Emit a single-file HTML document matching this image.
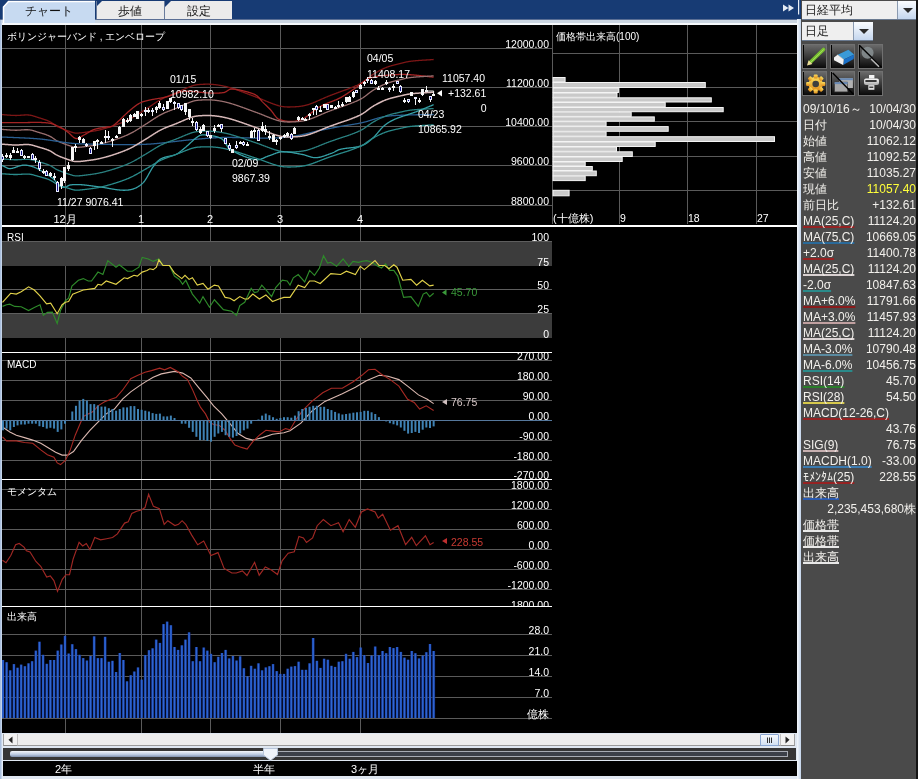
<!DOCTYPE html>
<html><head><meta charset="utf-8">
<style>
*{margin:0;padding:0;box-sizing:border-box}
html,body{width:918px;height:779px;overflow:hidden;background:#dfe7f1;font-family:"Liberation Sans",sans-serif}
.a{position:absolute;will-change:transform}
.row{position:absolute;will-change:transform;left:803px;width:113px;height:16px;font-size:12px;color:#f2f0ec;line-height:16px;white-space:nowrap}
.row .v{position:absolute;right:0;top:0}
.u{text-decoration:underline;text-decoration-skip-ink:none;text-decoration-thickness:2px;text-underline-offset:1px}
.tab{position:absolute;top:1px;height:18px;background:#ebebeb;color:#222;font-size:13px;text-align:center;line-height:19px;border-left:1px solid #7a8aa8}
.ddt{position:absolute;will-change:transform;background:#efefef;font-size:12px;color:#222;line-height:19px;padding-left:3px}
.ddb{position:absolute;background:linear-gradient(#fbfdff,#c4d6ee);border-left:1px solid #8a9ab0}
.ddb:after{content:"";position:absolute;left:5px;top:7px;border-left:5px solid transparent;border-right:5px solid transparent;border-top:5px solid #2a2a2a}
.ib{position:absolute;width:25px;height:25px;border:1px solid #707070;background:linear-gradient(#6a6a6a,#0a0a0a);box-shadow:inset 1px 0 0 #000}
</style></head><body>
<div class="a" style="left:0;top:0;width:3px;height:779px;background:linear-gradient(90deg,#9fb6d8,#c4d4ea,#f2f6fb)"></div>
<div class="a" style="left:0;top:0;width:801px;height:19px;background:#173b74"></div>
<div class="a" style="left:0;top:19px;width:801px;height:1px;background:#5a6e94"></div>
<div class="a" style="left:2px;top:20px;width:799px;height:3px;background:#cbd6e2"></div>
<div class="a" style="left:2px;top:23px;width:799px;height:2px;background:#f6f9fc"></div>
<svg class="a" style="left:0;top:0" width="240" height="25">
<path d="M3 7 L8.5 1 H95 V23 H3 Z" fill="#c7daf1"/>
<path d="M3.5 23 V7 L8.5 1.5 H95" stroke="#ffffff" stroke-width="1.5" fill="none"/>
<path d="M96 1 H164 V19 H96 Z" fill="#ebebeb"/>
<path d="M96 1 H102 L96 7 Z" fill="#173b74"/>
<rect x="96" y="1" width="1" height="18" fill="#6a7c9c"/>
<path d="M165 1 H232 V19 H165 Z" fill="#ebebeb"/>
<path d="M165 1 H171 L165 7 Z" fill="#173b74"/>
<rect x="164" y="1" width="1" height="18" fill="#6a7c9c"/>
<text x="49" y="15" font-size="12" fill="#111" text-anchor="middle">チャート</text>
<text x="130" y="15" font-size="12" fill="#111" text-anchor="middle">歩値</text>
<text x="198.5" y="15" font-size="12" fill="#111" text-anchor="middle">設定</text>
</svg>
<svg class="a" style="left:775px;top:0" width="26" height="19">
<path d="M8 4.5 L13.5 8 L8 11.5 Z M13.5 4.5 L19 8 L13.5 11.5 Z" fill="#e4ebf4"/>
<rect x="23" y="0" width="1.2" height="14.5" fill="#e8eef6"/>
</svg>
<div class="a" style="left:2px;top:25px;width:795px;height:708px;background:#000"></div>
<div class="a" style="left:797px;top:19px;width:4px;height:760px;background:linear-gradient(90deg,#f4f8fc,#c4d4ea)"></div>
<svg class="a" style="left:0;top:0" width="800" height="779" font-family="Liberation Sans, sans-serif">
<clipPath id="c1"><rect x="2" y="25" width="550" height="199"/></clipPath>
<clipPath id="c2"><rect x="2" y="227" width="550" height="125"/></clipPath>
<clipPath id="c3"><rect x="2" y="353" width="550" height="126"/></clipPath>
<clipPath id="c4"><rect x="2" y="480" width="550" height="126"/></clipPath>
<clipPath id="c5"><rect x="2" y="607" width="550" height="126"/></clipPath>
<rect x="2" y="48" width="550" height="1" fill="#5a5a5a"/>
<rect x="2" y="87" width="550" height="1" fill="#5a5a5a"/>
<rect x="2" y="126" width="550" height="1" fill="#5a5a5a"/>
<rect x="2" y="165" width="550" height="1" fill="#5a5a5a"/>
<rect x="2" y="205" width="550" height="1" fill="#5a5a5a"/>
<rect x="65" y="25" width="1" height="708" fill="#5a5a5a"/>
<rect x="141" y="25" width="1" height="708" fill="#5a5a5a"/>
<rect x="210" y="25" width="1" height="708" fill="#5a5a5a"/>
<rect x="280" y="25" width="1" height="708" fill="#5a5a5a"/>
<rect x="360" y="25" width="1" height="708" fill="#5a5a5a"/>
<rect x="552" y="25" width="1" height="199" fill="#5a5a5a"/>
<rect x="553" y="53" width="244" height="1" fill="#5a5a5a"/>
<rect x="553" y="87" width="244" height="1" fill="#5a5a5a"/>
<rect x="553" y="121" width="244" height="1" fill="#5a5a5a"/>
<rect x="553" y="156" width="244" height="1" fill="#5a5a5a"/>
<rect x="553" y="190" width="244" height="1" fill="#5a5a5a"/>
<rect x="619" y="25" width="1" height="199" fill="#5a5a5a"/>
<rect x="687" y="25" width="1" height="199" fill="#5a5a5a"/>
<rect x="756" y="25" width="1" height="199" fill="#5a5a5a"/>
<rect x="553" y="77.5" width="12.1" height="4.5" fill="#c9c9c9" stroke="#f4f4f4" stroke-width="1"/>
<rect x="553" y="82.5" width="152.3" height="5.0" fill="#c9c9c9" stroke="#f4f4f4" stroke-width="1"/>
<rect x="553" y="88.0" width="65.4" height="4.5" fill="#c9c9c9" stroke="#f4f4f4" stroke-width="1"/>
<rect x="553" y="93.0" width="64.0" height="4.3" fill="#c9c9c9" stroke="#f4f4f4" stroke-width="1"/>
<rect x="553" y="97.8" width="158.3" height="4.2" fill="#c9c9c9" stroke="#f4f4f4" stroke-width="1"/>
<rect x="553" y="102.5" width="112.2" height="4.5" fill="#c9c9c9" stroke="#f4f4f4" stroke-width="1"/>
<rect x="553" y="107.5" width="170.2" height="4.2" fill="#c9c9c9" stroke="#f4f4f4" stroke-width="1"/>
<rect x="553" y="112.2" width="78.2" height="4.2" fill="#c9c9c9" stroke="#f4f4f4" stroke-width="1"/>
<rect x="553" y="116.9" width="101.3" height="4.3" fill="#c9c9c9" stroke="#f4f4f4" stroke-width="1"/>
<rect x="553" y="121.7" width="53.1" height="4.4" fill="#c9c9c9" stroke="#f4f4f4" stroke-width="1"/>
<rect x="553" y="126.6" width="115.2" height="4.7" fill="#c9c9c9" stroke="#f4f4f4" stroke-width="1"/>
<rect x="553" y="131.8" width="53.1" height="4.4" fill="#c9c9c9" stroke="#f4f4f4" stroke-width="1"/>
<rect x="553" y="136.7" width="221.5" height="4.8" fill="#c9c9c9" stroke="#f4f4f4" stroke-width="1"/>
<rect x="553" y="142.0" width="102.2" height="4.5" fill="#c9c9c9" stroke="#f4f4f4" stroke-width="1"/>
<rect x="553" y="147.0" width="63.5" height="4.3" fill="#c9c9c9" stroke="#f4f4f4" stroke-width="1"/>
<rect x="553" y="151.8" width="79.3" height="4.7" fill="#c9c9c9" stroke="#f4f4f4" stroke-width="1"/>
<rect x="553" y="157.0" width="69.2" height="4.5" fill="#c9c9c9" stroke="#f4f4f4" stroke-width="1"/>
<rect x="553" y="162.0" width="32.2" height="4.0" fill="#c9c9c9" stroke="#f4f4f4" stroke-width="1"/>
<rect x="553" y="166.5" width="39.3" height="4.0" fill="#c9c9c9" stroke="#f4f4f4" stroke-width="1"/>
<rect x="553" y="171.0" width="43.3" height="4.7" fill="#c9c9c9" stroke="#f4f4f4" stroke-width="1"/>
<rect x="553" y="176.2" width="32.2" height="4.4" fill="#c9c9c9" stroke="#f4f4f4" stroke-width="1"/>
<rect x="553" y="190.3" width="16.1" height="5.5" fill="#c9c9c9" stroke="#f4f4f4" stroke-width="1"/>
<g clip-path="url(#c1)" fill="none" stroke-width="1.3">
<path d="M2.00 114.63 L2.50 114.64 L3.00 114.68 L3.50 114.71 L4.00 114.75 L4.50 114.79 L5.00 114.83 L5.50 114.87 L6.00 114.91 L6.50 114.95 L7.00 114.99 L7.50 115.03 L8.00 115.07 L8.50 115.11 L9.00 115.15 L9.50 115.19 L10.00 115.22 L10.50 115.26 L11.00 115.29 L11.50 115.32 L12.00 115.35 L12.50 115.38 L13.00 115.41 L13.50 115.43 L14.00 115.45 L14.50 115.46 L15.00 115.47 L15.50 115.48 L16.00 115.48 L16.50 115.48 L17.00 115.47 L17.50 115.45 L18.00 115.43 L18.50 115.40 L19.00 115.37 L19.50 115.34 L20.00 115.30 L20.50 115.27 L21.00 115.23 L21.50 115.19 L22.00 115.15 L22.50 115.12 L23.00 115.08 L23.50 115.05 L24.00 115.02 L24.50 115.00 L25.00 114.98 L25.50 114.96 L26.00 114.95 L26.50 114.95 L27.00 114.95 L27.50 114.97 L28.00 114.99 L28.50 115.02 L29.00 115.05 L29.50 115.11 L30.00 115.18 L30.50 115.26 L31.00 115.36 L31.50 115.47 L32.00 115.59 L32.50 115.72 L33.00 115.86 L33.50 116.00 L34.00 116.16 L34.50 116.31 L35.00 116.48 L35.50 116.64 L36.00 116.81 L36.50 116.97 L37.00 117.14 L37.50 117.30 L38.00 117.46 L38.50 117.62 L39.00 117.77 L39.50 117.93 L40.00 118.08 L40.50 118.23 L41.00 118.39 L41.50 118.54 L42.00 118.70 L42.50 118.85 L43.00 119.01 L43.50 119.17 L44.00 119.34 L44.50 119.51 L45.00 119.68 L45.50 119.85 L46.00 120.03 L46.50 120.22 L47.00 120.41 L47.50 120.61 L48.00 120.82 L48.50 121.03 L49.00 121.25 L49.50 121.47 L50.00 121.72 L50.50 121.99 L51.00 122.29 L51.50 122.61 L52.00 122.94 L52.50 123.29 L53.00 123.64 L53.50 124.00 L54.00 124.37 L54.50 124.72 L55.00 125.07 L55.50 125.41 L56.00 125.72 L56.50 126.02 L57.00 126.30 L57.50 126.54 L58.00 126.79 L58.50 127.02 L59.00 127.25 L59.50 127.48 L60.00 127.71 L60.50 127.93 L61.00 128.14 L61.50 128.36 L62.00 128.57 L62.50 128.77 L63.00 128.98 L63.50 129.18 L64.00 129.37 L64.50 129.57 L65.00 129.76 L65.50 129.95 L66.00 130.14 L66.50 130.33 L67.00 130.51 L67.50 130.69 L68.00 130.87 L68.50 131.05 L69.00 131.23 L69.50 131.41 L70.00 131.59 L70.50 131.77 L71.00 131.94 L71.50 132.12 L72.00 132.28 L72.50 132.44 L73.00 132.59 L73.50 132.72 L74.00 132.83 L74.50 132.93 L75.00 133.00 L75.50 133.05 L76.00 133.07 L76.50 133.08 L77.00 133.08 L77.50 133.07 L78.00 133.05 L78.50 133.03 L79.00 133.00 L79.50 132.97 L80.00 132.93 L80.50 132.88 L81.00 132.83 L81.50 132.78 L82.00 132.72 L82.50 132.66 L83.00 132.60 L83.50 132.54 L84.00 132.47 L84.50 132.40 L85.00 132.33 L85.50 132.26 L86.00 132.19 L86.50 132.12 L87.00 132.05 L87.50 131.98 L88.00 131.91 L88.50 131.84 L89.00 131.77 L89.50 131.70 L90.00 131.63 L90.50 131.56 L91.00 131.49 L91.50 131.41 L92.00 131.34 L92.50 131.26 L93.00 131.18 L93.50 131.10 L94.00 131.01 L94.50 130.93 L95.00 130.84 L95.50 130.75 L96.00 130.66 L96.50 130.56 L97.00 130.46 L97.50 130.36 L98.00 130.25 L98.50 130.14 L99.00 130.03 L99.50 129.91 L100.00 129.79 L100.50 129.66 L101.00 129.54 L101.50 129.41 L102.00 129.28 L102.50 129.15 L103.00 129.01 L103.50 128.88 L104.00 128.74 L104.50 128.60 L105.00 128.46 L105.50 128.32 L106.00 128.17 L106.50 128.02 L107.00 127.87 L107.50 127.72 L108.00 127.57 L108.50 127.42 L109.00 127.26 L109.50 127.10 L110.00 126.94 L110.50 126.78 L111.00 126.61 L111.50 126.45 L112.00 126.28 L112.50 126.11 L113.00 125.94 L113.50 125.76 L114.00 125.59 L114.50 125.41 L115.00 125.23 L115.50 125.05 L116.00 124.87 L116.50 124.69 L117.00 124.50 L117.50 124.32 L118.00 124.14 L118.50 123.95 L119.00 123.76 L119.50 123.57 L120.00 123.38 L120.50 123.19 L121.00 123.00 L121.50 122.80 L122.00 122.61 L122.50 122.41 L123.00 122.20 L123.50 122.00 L124.00 121.79 L124.50 121.58 L125.00 121.36 L125.50 121.15 L126.00 120.93 L126.50 120.70 L127.00 120.47 L127.50 120.24 L128.00 120.01 L128.50 119.77 L129.00 119.52 L129.50 119.28 L130.00 119.02 L130.50 118.76 L131.00 118.50 L131.50 118.23 L132.00 117.96 L132.50 117.68 L133.00 117.39 L133.50 117.10 L134.00 116.81 L134.50 116.51 L135.00 116.21 L135.50 115.90 L136.00 115.59 L136.50 115.28 L137.00 114.97 L137.50 114.65 L138.00 114.33 L138.50 114.01 L139.00 113.68 L139.50 113.36 L140.00 113.03 L140.50 112.70 L141.00 112.37 L141.50 112.05 L142.00 111.72 L142.50 111.39 L143.00 111.06 L143.50 110.73 L144.00 110.41 L144.50 110.08 L145.00 109.76 L145.50 109.44 L146.00 109.12 L146.50 108.80 L147.00 108.47 L147.50 108.15 L148.00 107.81 L148.50 107.48 L149.00 107.14 L149.50 106.80 L150.00 106.46 L150.50 106.12 L151.00 105.78 L151.50 105.43 L152.00 105.09 L152.50 104.75 L153.00 104.41 L153.50 104.06 L154.00 103.72 L154.50 103.39 L155.00 103.05 L155.50 102.72 L156.00 102.39 L156.50 102.06 L157.00 101.74 L157.50 101.43 L158.00 101.11 L158.50 100.81 L159.00 100.51 L159.50 100.21 L160.00 99.92 L160.50 99.64 L161.00 99.37 L161.50 99.10 L162.00 98.84 L162.50 98.59 L163.00 98.34 L163.50 98.10 L164.00 97.86 L164.50 97.63 L165.00 97.41 L165.50 97.19 L166.00 96.97 L166.50 96.76 L167.00 96.55 L167.50 96.34 L168.00 96.14 L168.50 95.93 L169.00 95.73 L169.50 95.53 L170.00 95.34 L170.50 95.14 L171.00 94.94 L171.50 94.74 L172.00 94.55 L172.50 94.35 L173.00 94.15 L173.50 93.95 L174.00 93.74 L174.50 93.54 L175.00 93.33 L175.50 93.12 L176.00 92.90 L176.50 92.68 L177.00 92.46 L177.50 92.24 L178.00 92.01 L178.50 91.79 L179.00 91.56 L179.50 91.33 L180.00 91.10 L180.50 90.87 L181.00 90.64 L181.50 90.41 L182.00 90.18 L182.50 89.95 L183.00 89.72 L183.50 89.49 L184.00 89.26 L184.50 89.03 L185.00 88.81 L185.50 88.58 L186.00 88.36 L186.50 88.14 L187.00 87.92 L187.50 87.71 L188.00 87.50 L188.50 87.29 L189.00 87.08 L189.50 86.88 L190.00 86.68 L190.50 86.49 L191.00 86.30 L191.50 86.12 L192.00 85.94 L192.50 85.77 L193.00 85.62 L193.50 85.47 L194.00 85.34 L194.50 85.21 L195.00 85.10 L195.50 85.00 L196.00 84.90 L196.50 84.82 L197.00 84.74 L197.50 84.67 L198.00 84.62 L198.50 84.57 L199.00 84.53 L199.50 84.49 L200.00 84.46 L200.50 84.43 L201.00 84.40 L201.50 84.37 L202.00 84.34 L202.50 84.32 L203.00 84.29 L203.50 84.27 L204.00 84.26 L204.50 84.24 L205.00 84.23 L205.50 84.22 L206.00 84.21 L206.50 84.20 L207.00 84.20 L207.50 84.20 L208.00 84.20 L208.50 84.21 L209.00 84.22 L209.50 84.23 L210.00 84.25 L210.50 84.27 L211.00 84.30 L211.50 84.32 L212.00 84.36 L212.50 84.39 L213.00 84.43 L213.50 84.48 L214.00 84.53 L214.50 84.58 L215.00 84.64 L215.50 84.69 L216.00 84.76 L216.50 84.82 L217.00 84.89 L217.50 84.96 L218.00 85.03 L218.50 85.11 L219.00 85.19 L219.50 85.27 L220.00 85.35 L220.50 85.44 L221.00 85.53 L221.50 85.63 L222.00 85.73 L222.50 85.83 L223.00 85.93 L223.50 86.04 L224.00 86.15 L224.50 86.26 L225.00 86.38 L225.50 86.49 L226.00 86.62 L226.50 86.74 L227.00 86.87 L227.50 87.00 L228.00 87.14 L228.50 87.27 L229.00 87.42 L229.50 87.56 L230.00 87.71 L230.50 87.86 L231.00 88.01 L231.50 88.16 L232.00 88.32 L232.50 88.48 L233.00 88.64 L233.50 88.80 L234.00 88.96 L234.50 89.13 L235.00 89.30 L235.50 89.46 L236.00 89.63 L236.50 89.81 L237.00 89.98 L237.50 90.15 L238.00 90.33 L238.50 90.51 L239.00 90.68 L239.50 90.86 L240.00 91.04 L240.50 91.23 L241.00 91.41 L241.50 91.59 L242.00 91.78 L242.50 91.96 L243.00 92.15 L243.50 92.33 L244.00 92.52 L244.50 92.71 L245.00 92.90 L245.50 93.08 L246.00 93.27 L246.50 93.46 L247.00 93.65 L247.50 93.84 L248.00 94.03 L248.50 94.22 L249.00 94.41 L249.50 94.60 L250.00 94.79 L250.50 94.98 L251.00 95.17 L251.50 95.36 L252.00 95.55 L252.50 95.73 L253.00 95.92 L253.50 96.11 L254.00 96.29 L254.50 96.48 L255.00 96.67 L255.50 96.85 L256.00 97.03 L256.50 97.22 L257.00 97.41 L257.50 97.60 L258.00 97.79 L258.50 97.99 L259.00 98.18 L259.50 98.38 L260.00 98.58 L260.50 98.78 L261.00 98.99 L261.50 99.19 L262.00 99.40 L262.50 99.61 L263.00 99.81 L263.50 100.02 L264.00 100.23 L264.50 100.44 L265.00 100.65 L265.50 100.86 L266.00 101.06 L266.50 101.27 L267.00 101.48 L267.50 101.68 L268.00 101.89 L268.50 102.09 L269.00 102.30 L269.50 102.50 L270.00 102.70 L270.50 102.89 L271.00 103.09 L271.50 103.28 L272.00 103.47 L272.50 103.66 L273.00 103.84 L273.50 104.03 L274.00 104.21 L274.50 104.38 L275.00 104.55 L275.50 104.72 L276.00 104.89 L276.50 105.05 L277.00 105.20 L277.50 105.36 L278.00 105.50 L278.50 105.65 L279.00 105.78 L279.50 105.92 L280.00 106.04 L280.50 106.16 L281.00 106.28 L281.50 106.38 L282.00 106.47 L282.50 106.55 L283.00 106.63 L283.50 106.69 L284.00 106.75 L284.50 106.80 L285.00 106.85 L285.50 106.89 L286.00 106.92 L286.50 106.94 L287.00 106.96 L287.50 106.98 L288.00 106.99 L288.50 106.99 L289.00 106.99 L289.50 106.99 L290.00 106.98 L290.50 106.97 L291.00 106.96 L291.50 106.94 L292.00 106.92 L292.50 106.90 L293.00 106.88 L293.50 106.86 L294.00 106.84 L294.50 106.81 L295.00 106.79 L295.50 106.76 L296.00 106.73 L296.50 106.70 L297.00 106.66 L297.50 106.62 L298.00 106.58 L298.50 106.53 L299.00 106.48 L299.50 106.43 L300.00 106.37 L300.50 106.30 L301.00 106.23 L301.50 106.16 L302.00 106.08 L302.50 105.99 L303.00 105.90 L303.50 105.81 L304.00 105.71 L304.50 105.60 L305.00 105.49 L305.50 105.37 L306.00 105.24 L306.50 105.11 L307.00 104.97 L307.50 104.82 L308.00 104.67 L308.50 104.51 L309.00 104.34 L309.50 104.17 L310.00 104.00 L310.50 103.82 L311.00 103.64 L311.50 103.45 L312.00 103.26 L312.50 103.06 L313.00 102.87 L313.50 102.66 L314.00 102.46 L314.50 102.25 L315.00 102.04 L315.50 101.83 L316.00 101.62 L316.50 101.40 L317.00 101.19 L317.50 100.97 L318.00 100.75 L318.50 100.53 L319.00 100.30 L319.50 100.08 L320.00 99.86 L320.50 99.64 L321.00 99.41 L321.50 99.19 L322.00 98.97 L322.50 98.74 L323.00 98.52 L323.50 98.30 L324.00 98.08 L324.50 97.87 L325.00 97.65 L325.50 97.44 L326.00 97.22 L326.50 97.01 L327.00 96.81 L327.50 96.60 L328.00 96.40 L328.50 96.20 L329.00 96.00 L329.50 95.80 L330.00 95.61 L330.50 95.41 L331.00 95.22 L331.50 95.03 L332.00 94.84 L332.50 94.65 L333.00 94.46 L333.50 94.27 L334.00 94.08 L334.50 93.89 L335.00 93.70 L335.50 93.52 L336.00 93.33 L336.50 93.14 L337.00 92.96 L337.50 92.77 L338.00 92.59 L338.50 92.40 L339.00 92.21 L339.50 92.03 L340.00 91.84 L340.50 91.66 L341.00 91.47 L341.50 91.29 L342.00 91.11 L342.50 90.94 L343.00 90.76 L343.50 90.59 L344.00 90.41 L344.50 90.24 L345.00 90.06 L345.50 89.89 L346.00 89.71 L346.50 89.54 L347.00 89.36 L347.50 89.18 L348.00 88.99 L348.50 88.80 L349.00 88.61 L349.50 88.42 L350.00 88.22 L350.50 88.02 L351.00 87.81 L351.50 87.60 L352.00 87.40 L352.50 87.19 L353.00 86.98 L353.50 86.77 L354.00 86.56 L354.50 86.35 L355.00 86.13 L355.50 85.92 L356.00 85.70 L356.50 85.47 L357.00 85.25 L357.50 85.01 L358.00 84.78 L358.50 84.53 L359.00 84.28 L359.50 84.02 L360.00 83.76 L360.50 83.49 L361.00 83.21 L361.50 82.92 L362.00 82.62 L362.50 82.31 L363.00 81.98 L363.50 81.64 L364.00 81.28 L364.50 80.91 L365.00 80.54 L365.50 80.15 L366.00 79.76 L366.50 79.37 L367.00 78.97 L367.50 78.57 L368.00 78.16 L368.50 77.76 L369.00 77.36 L369.50 76.97 L370.00 76.58 L370.50 76.20 L371.00 75.83 L371.50 75.47 L372.00 75.12 L372.50 74.78 L373.00 74.46 L373.50 74.14 L374.00 73.84 L374.50 73.53 L375.00 73.22 L375.50 72.92 L376.00 72.63 L376.50 72.33 L377.00 72.04 L377.50 71.76 L378.00 71.47 L378.50 71.20 L379.00 70.92 L379.50 70.65 L380.00 70.38 L380.50 70.12 L381.00 69.86 L381.50 69.61 L382.00 69.36 L382.50 69.12 L383.00 68.88 L383.50 68.65 L384.00 68.42 L384.50 68.20 L385.00 67.98 L385.50 67.77 L386.00 67.57 L386.50 67.37 L387.00 67.18 L387.50 66.99 L388.00 66.81 L388.50 66.64 L389.00 66.47 L389.50 66.31 L390.00 66.15 L390.50 66.00 L391.00 65.85 L391.50 65.70 L392.00 65.56 L392.50 65.43 L393.00 65.29 L393.50 65.16 L394.00 65.03 L394.50 64.90 L395.00 64.77 L395.50 64.65 L396.00 64.53 L396.50 64.40 L397.00 64.28 L397.50 64.16 L398.00 64.04 L398.50 63.91 L399.00 63.79 L399.50 63.67 L400.00 63.54 L400.50 63.41 L401.00 63.28 L401.50 63.16 L402.00 63.03 L402.50 62.90 L403.00 62.78 L403.50 62.66 L404.00 62.54 L404.50 62.42 L405.00 62.30 L405.50 62.19 L406.00 62.08 L406.50 61.97 L407.00 61.87 L407.50 61.77 L408.00 61.67 L408.50 61.58 L409.00 61.49 L409.50 61.41 L410.00 61.34 L410.50 61.27 L411.00 61.21 L411.50 61.15 L412.00 61.09 L412.50 61.04 L413.00 60.98 L413.50 60.93 L414.00 60.88 L414.50 60.83 L415.00 60.79 L415.50 60.74 L416.00 60.70 L416.50 60.65 L417.00 60.61 L417.50 60.57 L418.00 60.53 L418.50 60.49 L419.00 60.46 L419.50 60.42 L420.00 60.39 L420.50 60.35 L421.00 60.32 L421.50 60.29 L422.00 60.25 L422.50 60.22 L423.00 60.19 L423.50 60.16 L424.00 60.13 L424.50 60.10 L425.00 60.07 L425.50 60.04 L426.00 60.01 L426.50 59.98 L427.00 59.95 L427.50 59.92 L428.00 59.89 L428.50 59.86 L429.00 59.82 L429.50 59.79 L430.00 59.76 L430.50 59.73 L431.00 59.70 L431.50 59.66 L432.00 59.63 L432.50 59.59 L433.00 59.56 L433.50 59.52 L433.65 59.51" stroke="#7c1616" stroke-width="1.3" fill="none"/>
<path d="M2.00 122.60 L2.50 122.60 L3.00 122.60 L3.50 122.60 L4.00 122.60 L4.50 122.60 L5.00 122.60 L5.50 122.59 L6.00 122.59 L6.50 122.59 L7.00 122.59 L7.50 122.59 L8.00 122.59 L8.50 122.58 L9.00 122.58 L9.50 122.58 L10.00 122.58 L10.50 122.58 L11.00 122.58 L11.50 122.57 L12.00 122.57 L12.50 122.57 L13.00 122.57 L13.50 122.57 L14.00 122.57 L14.50 122.57 L15.00 122.57 L15.50 122.57 L16.00 122.57 L16.50 122.58 L17.00 122.58 L17.50 122.58 L18.00 122.58 L18.50 122.59 L19.00 122.59 L19.50 122.59 L20.00 122.60 L20.50 122.60 L21.00 122.61 L21.50 122.61 L22.00 122.61 L22.50 122.61 L23.00 122.60 L23.50 122.60 L24.00 122.59 L24.50 122.59 L25.00 122.58 L25.50 122.57 L26.00 122.56 L26.50 122.56 L27.00 122.55 L27.50 122.54 L28.00 122.52 L28.50 122.51 L29.00 122.50 L29.50 122.49 L30.00 122.48 L30.50 122.47 L31.00 122.46 L31.50 122.45 L32.00 122.44 L32.50 122.43 L33.00 122.42 L33.50 122.42 L34.00 122.41 L34.50 122.41 L35.00 122.40 L35.50 122.40 L36.00 122.40 L36.50 122.39 L37.00 122.40 L37.50 122.40 L38.00 122.40 L38.50 122.41 L39.00 122.41 L39.50 122.42 L40.00 122.44 L40.50 122.45 L41.00 122.46 L41.50 122.48 L42.00 122.50 L42.50 122.53 L43.00 122.55 L43.50 122.58 L44.00 122.61 L44.50 122.65 L45.00 122.68 L45.50 122.72 L46.00 122.77 L46.50 122.81 L47.00 122.86 L47.50 122.92 L48.00 122.97 L48.50 123.04 L49.00 123.10 L49.50 123.17 L50.00 123.26 L50.50 123.37 L51.00 123.49 L51.50 123.62 L52.00 123.76 L52.50 123.92 L53.00 124.09 L53.50 124.27 L54.00 124.45 L54.50 124.65 L55.00 124.85 L55.50 125.07 L56.00 125.29 L56.50 125.51 L57.00 125.74 L57.50 125.98 L58.00 126.22 L58.50 126.46 L59.00 126.71 L59.50 126.96 L60.00 127.20 L60.50 127.45 L61.00 127.70 L61.50 127.95 L62.00 128.20 L62.50 128.46 L63.00 128.74 L63.50 129.05 L64.00 129.37 L64.50 129.72 L65.00 130.07 L65.50 130.44 L66.00 130.81 L66.50 131.19 L67.00 131.57 L67.50 131.95 L68.00 132.33 L68.50 132.70 L69.00 133.09 L69.50 133.52 L70.00 133.97 L70.50 134.45 L71.00 134.94 L71.50 135.43 L72.00 135.91 L72.50 136.38 L73.00 136.83 L73.50 137.24 L74.00 137.61 L74.50 137.93 L75.00 138.19 L75.50 138.38 L76.00 138.50 L76.50 138.54 L77.00 138.52 L77.50 138.44 L78.00 138.31 L78.50 138.13 L79.00 137.92 L79.50 137.67 L80.00 137.40 L80.50 137.11 L81.00 136.80 L81.50 136.48 L82.00 136.17 L82.50 135.85 L83.00 135.55 L83.50 135.26 L84.00 135.00 L84.50 134.74 L85.00 134.47 L85.50 134.19 L86.00 133.90 L86.50 133.60 L87.00 133.30 L87.50 132.99 L88.00 132.68 L88.50 132.37 L89.00 132.06 L89.50 131.76 L90.00 131.46 L90.50 131.17 L91.00 130.88 L91.50 130.61 L92.00 130.36 L92.50 130.12 L93.00 129.89 L93.50 129.68 L94.00 129.50 L94.50 129.33 L95.00 129.18 L95.50 129.03 L96.00 128.89 L96.50 128.77 L97.00 128.65 L97.50 128.54 L98.00 128.44 L98.50 128.34 L99.00 128.25 L99.50 128.17 L100.00 128.09 L100.50 128.01 L101.00 127.94 L101.50 127.86 L102.00 127.79 L102.50 127.72 L103.00 127.65 L103.50 127.58 L104.00 127.51 L104.50 127.43 L105.00 127.36 L105.50 127.27 L106.00 127.19 L106.50 127.10 L107.00 127.00 L107.50 126.92 L108.00 126.87 L108.50 126.83 L109.00 126.81 L109.50 126.78 L110.00 126.74 L110.50 126.69 L111.00 126.59 L111.50 126.46 L112.00 126.27 L112.50 126.02 L113.00 125.70 L113.50 125.33 L114.00 124.95 L114.50 124.56 L115.00 124.15 L115.50 123.74 L116.00 123.32 L116.50 122.89 L117.00 122.45 L117.50 122.00 L118.00 121.55 L118.50 121.09 L119.00 120.63 L119.50 120.16 L120.00 119.68 L120.50 119.21 L121.00 118.73 L121.50 118.24 L122.00 117.76 L122.50 117.27 L123.00 116.79 L123.50 116.30 L124.00 115.82 L124.50 115.33 L125.00 114.85 L125.50 114.38 L126.00 113.90 L126.50 113.43 L127.00 112.96 L127.50 112.50 L128.00 112.05 L128.50 111.60 L129.00 111.16 L129.50 110.72 L130.00 110.30 L130.50 109.88 L131.00 109.46 L131.50 109.04 L132.00 108.63 L132.50 108.22 L133.00 107.81 L133.50 107.41 L134.00 107.01 L134.50 106.62 L135.00 106.24 L135.50 105.87 L136.00 105.50 L136.50 105.15 L137.00 104.80 L137.50 104.47 L138.00 104.15 L138.50 103.84 L139.00 103.55 L139.50 103.27 L140.00 103.00 L140.50 102.75 L141.00 102.52 L141.50 102.30 L142.00 102.10 L142.50 101.92 L143.00 101.74 L143.50 101.58 L144.00 101.42 L144.50 101.28 L145.00 101.14 L145.50 101.02 L146.00 100.89 L146.50 100.78 L147.00 100.66 L147.50 100.55 L148.00 100.44 L148.50 100.33 L149.00 100.22 L149.50 100.11 L150.00 100.00 L150.50 99.89 L151.00 99.78 L151.50 99.67 L152.00 99.57 L152.50 99.48 L153.00 99.38 L153.50 99.29 L154.00 99.20 L154.50 99.12 L155.00 99.03 L155.50 98.95 L156.00 98.87 L156.50 98.78 L157.00 98.70 L157.50 98.62 L158.00 98.54 L158.50 98.46 L159.00 98.38 L159.50 98.30 L160.00 98.22 L160.50 98.13 L161.00 98.05 L161.50 97.96 L162.00 97.86 L162.50 97.77 L163.00 97.67 L163.50 97.57 L164.00 97.47 L164.50 97.36 L165.00 97.24 L165.50 97.12 L166.00 97.00 L166.50 96.87 L167.00 96.73 L167.50 96.58 L168.00 96.43 L168.50 96.26 L169.00 96.10 L169.50 95.92 L170.00 95.75 L170.50 95.56 L171.00 95.38 L171.50 95.19 L172.00 95.00 L172.50 94.81 L173.00 94.61 L173.50 94.42 L174.00 94.22 L174.50 94.03 L175.00 93.84 L175.50 93.65 L176.00 93.47 L176.50 93.28 L177.00 93.10 L177.50 92.93 L178.00 92.76 L178.50 92.60 L179.00 92.45 L179.50 92.30 L180.00 92.16 L180.50 92.03 L181.00 91.90 L181.50 91.79 L182.00 91.69 L182.50 91.60 L183.00 91.52 L183.50 91.45 L184.00 91.40 L184.50 91.36 L185.00 91.32 L185.50 91.29 L186.00 91.27 L186.50 91.25 L187.00 91.24 L187.50 91.23 L188.00 91.23 L188.50 91.24 L189.00 91.25 L189.50 91.26 L190.00 91.28 L190.50 91.30 L191.00 91.33 L191.50 91.36 L192.00 91.39 L192.50 91.43 L193.00 91.47 L193.50 91.52 L194.00 91.56 L194.50 91.61 L195.00 91.66 L195.50 91.71 L196.00 91.77 L196.50 91.82 L197.00 91.88 L197.50 91.94 L198.00 92.00 L198.50 92.06 L199.00 92.11 L199.50 92.17 L200.00 92.23 L200.50 92.29 L201.00 92.35 L201.50 92.41 L202.00 92.46 L202.50 92.52 L203.00 92.57 L203.50 92.62 L204.00 92.67 L204.50 92.72 L205.00 92.76 L205.50 92.80 L206.00 92.84 L206.50 92.88 L207.00 92.91 L207.50 92.94 L208.00 92.96 L208.50 92.98 L209.00 93.00 L209.50 93.01 L210.00 93.03 L210.50 93.04 L211.00 93.06 L211.50 93.07 L212.00 93.09 L212.50 93.10 L213.00 93.11 L213.50 93.12 L214.00 93.13 L214.50 93.13 L215.00 93.14 L215.50 93.14 L216.00 93.14 L216.50 93.13 L217.00 93.13 L217.50 93.11 L218.00 93.10 L218.50 93.08 L219.00 93.05 L219.50 93.02 L220.00 92.99 L220.50 92.95 L221.00 92.91 L221.50 92.85 L222.00 92.80 L222.50 92.73 L223.00 92.66 L223.50 92.58 L224.00 92.50 L224.50 92.38 L225.00 92.19 L225.50 91.95 L226.00 91.67 L226.50 91.37 L227.00 91.04 L227.50 90.71 L228.00 90.38 L228.50 90.06 L229.00 89.77 L229.50 89.52 L230.00 89.32 L230.50 89.17 L231.00 89.10 L231.50 89.07 L232.00 89.06 L232.50 89.05 L233.00 89.06 L233.50 89.08 L234.00 89.11 L234.50 89.15 L235.00 89.20 L235.50 89.26 L236.00 89.33 L236.50 89.41 L237.00 89.49 L237.50 89.58 L238.00 89.67 L238.50 89.78 L239.00 89.88 L239.50 89.99 L240.00 90.11 L240.50 90.23 L241.00 90.35 L241.50 90.47 L242.00 90.59 L242.50 90.72 L243.00 90.85 L243.50 90.97 L244.00 91.10 L244.50 91.22 L245.00 91.35 L245.50 91.47 L246.00 91.60 L246.50 91.72 L247.00 91.85 L247.50 91.98 L248.00 92.11 L248.50 92.25 L249.00 92.39 L249.50 92.53 L250.00 92.68 L250.50 92.84 L251.00 93.01 L251.50 93.18 L252.00 93.36 L252.50 93.56 L253.00 93.76 L253.50 93.97 L254.00 94.19 L254.50 94.43 L255.00 94.67 L255.50 94.94 L256.00 95.21 L256.50 95.50 L257.00 95.83 L257.50 96.23 L258.00 96.69 L258.50 97.20 L259.00 97.74 L259.50 98.31 L260.00 98.91 L260.50 99.51 L261.00 100.12 L261.50 100.72 L262.00 101.31 L262.50 101.87 L263.00 102.40 L263.50 102.90 L264.00 103.39 L264.50 103.88 L265.00 104.35 L265.50 104.82 L266.00 105.29 L266.50 105.76 L267.00 106.23 L267.50 106.71 L268.00 107.19 L268.50 107.68 L269.00 108.17 L269.50 108.68 L270.00 109.20 L270.50 109.75 L271.00 110.35 L271.50 110.97 L272.00 111.63 L272.50 112.30 L273.00 112.98 L273.50 113.67 L274.00 114.36 L274.50 115.03 L275.00 115.68 L275.50 116.31 L276.00 116.90 L276.50 117.45 L277.00 117.95 L277.50 118.39 L278.00 118.77 L278.50 119.08 L279.00 119.30 L279.50 119.48 L280.00 119.65 L280.50 119.81 L281.00 119.97 L281.50 120.12 L282.00 120.26 L282.50 120.39 L283.00 120.52 L283.50 120.64 L284.00 120.75 L284.50 120.85 L285.00 120.95 L285.50 121.04 L286.00 121.12 L286.50 121.19 L287.00 121.26 L287.50 121.32 L288.00 121.37 L288.50 121.41 L289.00 121.44 L289.50 121.47 L290.00 121.48 L290.50 121.49 L291.00 121.50 L291.50 121.49 L292.00 121.48 L292.50 121.45 L293.00 121.42 L293.50 121.38 L294.00 121.33 L294.50 121.28 L295.00 121.21 L295.50 121.14 L296.00 121.06 L296.50 120.97 L297.00 120.87 L297.50 120.76 L298.00 120.65 L298.50 120.53 L299.00 120.39 L299.50 120.25 L300.00 120.10 L300.50 119.93 L301.00 119.75 L301.50 119.54 L302.00 119.32 L302.50 119.08 L303.00 118.82 L303.50 118.55 L304.00 118.26 L304.50 117.96 L305.00 117.64 L305.50 117.31 L306.00 116.97 L306.50 116.62 L307.00 116.26 L307.50 115.90 L308.00 115.52 L308.50 115.14 L309.00 114.75 L309.50 114.36 L310.00 113.96 L310.50 113.56 L311.00 113.16 L311.50 112.76 L312.00 112.36 L312.50 111.95 L313.00 111.55 L313.50 111.15 L314.00 110.76 L314.50 110.37 L315.00 109.98 L315.50 109.60 L316.00 109.23 L316.50 108.86 L317.00 108.50 L317.50 108.16 L318.00 107.82 L318.50 107.50 L319.00 107.18 L319.50 106.88 L320.00 106.60 L320.50 106.33 L321.00 106.06 L321.50 105.80 L322.00 105.55 L322.50 105.31 L323.00 105.07 L323.50 104.84 L324.00 104.61 L324.50 104.39 L325.00 104.17 L325.50 103.96 L326.00 103.75 L326.50 103.54 L327.00 103.34 L327.50 103.14 L328.00 102.94 L328.50 102.75 L329.00 102.55 L329.50 102.36 L330.00 102.17 L330.50 101.98 L331.00 101.79 L331.50 101.60 L332.00 101.40 L332.50 101.21 L333.00 101.01 L333.50 100.82 L334.00 100.62 L334.50 100.41 L335.00 100.21 L335.50 100.00 L336.00 99.79 L336.50 99.57 L337.00 99.35 L337.50 99.12 L338.00 98.89 L338.50 98.65 L339.00 98.41 L339.50 98.16 L340.00 97.90 L340.50 97.64 L341.00 97.36 L341.50 97.09 L342.00 96.80 L342.50 96.51 L343.00 96.21 L343.50 95.91 L344.00 95.61 L344.50 95.30 L345.00 94.98 L345.50 94.66 L346.00 94.34 L346.50 94.02 L347.00 93.69 L347.50 93.36 L348.00 93.02 L348.50 92.69 L349.00 92.35 L349.50 92.01 L350.00 91.67 L350.50 91.33 L351.00 90.99 L351.50 90.65 L352.00 90.31 L352.50 89.98 L353.00 89.64 L353.50 89.30 L354.00 88.96 L354.50 88.63 L355.00 88.30 L355.50 87.96 L356.00 87.62 L356.50 87.26 L357.00 86.89 L357.50 86.52 L358.00 86.14 L358.50 85.75 L359.00 85.36 L359.50 84.96 L360.00 84.57 L360.50 84.17 L361.00 83.77 L361.50 83.38 L362.00 82.99 L362.50 82.60 L363.00 82.22 L363.50 81.84 L364.00 81.47 L364.50 81.12 L365.00 80.77 L365.50 80.43 L366.00 80.10 L366.50 79.79 L367.00 79.50 L367.50 79.22 L368.00 78.95 L368.50 78.71 L369.00 78.49 L369.50 78.28 L370.00 78.10 L370.50 77.93 L371.00 77.77 L371.50 77.62 L372.00 77.48 L372.50 77.34 L373.00 77.20 L373.50 77.07 L374.00 76.95 L374.50 76.84 L375.00 76.73 L375.50 76.62 L376.00 76.52 L376.50 76.43 L377.00 76.34 L377.50 76.25 L378.00 76.17 L378.50 76.09 L379.00 76.02 L379.50 75.95 L380.00 75.88 L380.50 75.82 L381.00 75.76 L381.50 75.71 L382.00 75.65 L382.50 75.60 L383.00 75.56 L383.50 75.51 L384.00 75.47 L384.50 75.43 L385.00 75.39 L385.50 75.35 L386.00 75.31 L386.50 75.28 L387.00 75.24 L387.50 75.21 L388.00 75.18 L388.50 75.15 L389.00 75.12 L389.50 75.08 L390.00 75.05 L390.50 75.02 L391.00 74.99 L391.50 74.96 L392.00 74.92 L392.50 74.89 L393.00 74.86 L393.50 74.82 L394.00 74.78 L394.50 74.74 L395.00 74.70 L395.50 74.66 L396.00 74.62 L396.50 74.59 L397.00 74.56 L397.50 74.53 L398.00 74.51 L398.50 74.48 L399.00 74.47 L399.50 74.45 L400.00 74.44 L400.50 74.43 L401.00 74.42 L401.50 74.42 L402.00 74.42 L402.50 74.42 L403.00 74.42 L403.50 74.43 L404.00 74.44 L404.50 74.45 L405.00 74.46 L405.50 74.48 L406.00 74.49 L406.50 74.51 L407.00 74.54 L407.50 74.56 L408.00 74.58 L408.50 74.61 L409.00 74.64 L409.50 74.67 L410.00 74.70 L410.50 74.73 L411.00 74.77 L411.50 74.80 L412.00 74.84 L412.50 74.88 L413.00 74.92 L413.50 74.97 L414.00 75.01 L414.50 75.05 L415.00 75.10 L415.50 75.15 L416.00 75.20 L416.50 75.25 L417.00 75.30 L417.50 75.35 L418.00 75.40 L418.50 75.46 L419.00 75.51 L419.50 75.56 L420.00 75.62 L420.50 75.68 L421.00 75.73 L421.50 75.79 L422.00 75.85 L422.50 75.91 L423.00 75.97 L423.50 76.03 L424.00 76.08 L424.50 76.14 L425.00 76.20 L425.50 76.26 L426.00 76.32 L426.50 76.38 L427.00 76.44 L427.50 76.50 L428.00 76.56 L428.50 76.62 L429.00 76.68 L429.50 76.74 L430.00 76.79 L430.50 76.85 L431.00 76.91 L431.50 76.97 L432.00 77.02 L432.50 77.08 L433.00 77.13 L433.50 77.18 L433.65 77.20" stroke="#a42424" stroke-width="1.3" fill="none"/>
<path d="M2.00 129.42 L2.50 129.43 L3.00 129.46 L3.50 129.50 L4.00 129.53 L4.50 129.57 L5.00 129.61 L5.50 129.65 L6.00 129.69 L6.50 129.73 L7.00 129.77 L7.50 129.80 L8.00 129.84 L8.50 129.88 L9.00 129.92 L9.50 129.96 L10.00 129.99 L10.50 130.03 L11.00 130.06 L11.50 130.09 L12.00 130.12 L12.50 130.14 L13.00 130.17 L13.50 130.19 L14.00 130.21 L14.50 130.22 L15.00 130.23 L15.50 130.24 L16.00 130.24 L16.50 130.24 L17.00 130.23 L17.50 130.21 L18.00 130.19 L18.50 130.16 L19.00 130.13 L19.50 130.10 L20.00 130.07 L20.50 130.03 L21.00 130.00 L21.50 129.96 L22.00 129.92 L22.50 129.89 L23.00 129.86 L23.50 129.82 L24.00 129.80 L24.50 129.77 L25.00 129.75 L25.50 129.74 L26.00 129.73 L26.50 129.73 L27.00 129.73 L27.50 129.74 L28.00 129.76 L28.50 129.79 L29.00 129.83 L29.50 129.88 L30.00 129.95 L30.50 130.03 L31.00 130.12 L31.50 130.23 L32.00 130.34 L32.50 130.47 L33.00 130.61 L33.50 130.75 L34.00 130.90 L34.50 131.05 L35.00 131.21 L35.50 131.37 L36.00 131.53 L36.50 131.69 L37.00 131.85 L37.50 132.01 L38.00 132.17 L38.50 132.32 L39.00 132.47 L39.50 132.62 L40.00 132.77 L40.50 132.92 L41.00 133.06 L41.50 133.21 L42.00 133.37 L42.50 133.52 L43.00 133.67 L43.50 133.83 L44.00 133.99 L44.50 134.15 L45.00 134.32 L45.50 134.49 L46.00 134.67 L46.50 134.85 L47.00 135.03 L47.50 135.23 L48.00 135.43 L48.50 135.63 L49.00 135.84 L49.50 136.07 L50.00 136.30 L50.50 136.57 L51.00 136.85 L51.50 137.16 L52.00 137.49 L52.50 137.83 L53.00 138.17 L53.50 138.52 L54.00 138.87 L54.50 139.22 L55.00 139.56 L55.50 139.89 L56.00 140.20 L56.50 140.48 L57.00 140.75 L57.50 140.99 L58.00 141.23 L58.50 141.46 L59.00 141.68 L59.50 141.90 L60.00 142.12 L60.50 142.34 L61.00 142.55 L61.50 142.75 L62.00 142.96 L62.50 143.16 L63.00 143.35 L63.50 143.55 L64.00 143.74 L64.50 143.93 L65.00 144.12 L65.50 144.30 L66.00 144.48 L66.50 144.67 L67.00 144.84 L67.50 145.02 L68.00 145.20 L68.50 145.37 L69.00 145.55 L69.50 145.72 L70.00 145.90 L70.50 146.07 L71.00 146.24 L71.50 146.41 L72.00 146.57 L72.50 146.72 L73.00 146.86 L73.50 146.99 L74.00 147.10 L74.50 147.19 L75.00 147.27 L75.50 147.31 L76.00 147.34 L76.50 147.34 L77.00 147.34 L77.50 147.33 L78.00 147.31 L78.50 147.29 L79.00 147.26 L79.50 147.23 L80.00 147.19 L80.50 147.15 L81.00 147.10 L81.50 147.05 L82.00 147.00 L82.50 146.94 L83.00 146.88 L83.50 146.81 L84.00 146.75 L84.50 146.68 L85.00 146.62 L85.50 146.55 L86.00 146.48 L86.50 146.41 L87.00 146.34 L87.50 146.27 L88.00 146.20 L88.50 146.14 L89.00 146.07 L89.50 146.00 L90.00 145.93 L90.50 145.86 L91.00 145.79 L91.50 145.72 L92.00 145.65 L92.50 145.57 L93.00 145.50 L93.50 145.42 L94.00 145.34 L94.50 145.25 L95.00 145.17 L95.50 145.08 L96.00 144.99 L96.50 144.89 L97.00 144.80 L97.50 144.70 L98.00 144.59 L98.50 144.49 L99.00 144.38 L99.50 144.26 L100.00 144.14 L100.50 144.02 L101.00 143.90 L101.50 143.78 L102.00 143.65 L102.50 143.52 L103.00 143.39 L103.50 143.26 L104.00 143.13 L104.50 142.99 L105.00 142.85 L105.50 142.71 L106.00 142.57 L106.50 142.43 L107.00 142.28 L107.50 142.14 L108.00 141.99 L108.50 141.84 L109.00 141.69 L109.50 141.53 L110.00 141.38 L110.50 141.22 L111.00 141.06 L111.50 140.90 L112.00 140.73 L112.50 140.57 L113.00 140.40 L113.50 140.23 L114.00 140.06 L114.50 139.89 L115.00 139.72 L115.50 139.54 L116.00 139.36 L116.50 139.19 L117.00 139.01 L117.50 138.83 L118.00 138.65 L118.50 138.47 L119.00 138.29 L119.50 138.11 L120.00 137.92 L120.50 137.74 L121.00 137.55 L121.50 137.36 L122.00 137.16 L122.50 136.97 L123.00 136.77 L123.50 136.57 L124.00 136.37 L124.50 136.17 L125.00 135.96 L125.50 135.75 L126.00 135.53 L126.50 135.31 L127.00 135.09 L127.50 134.87 L128.00 134.64 L128.50 134.41 L129.00 134.17 L129.50 133.93 L130.00 133.68 L130.50 133.43 L131.00 133.18 L131.50 132.92 L132.00 132.65 L132.50 132.38 L133.00 132.10 L133.50 131.82 L134.00 131.53 L134.50 131.24 L135.00 130.95 L135.50 130.65 L136.00 130.35 L136.50 130.05 L137.00 129.74 L137.50 129.43 L138.00 129.12 L138.50 128.81 L139.00 128.49 L139.50 128.18 L140.00 127.86 L140.50 127.54 L141.00 127.22 L141.50 126.90 L142.00 126.58 L142.50 126.26 L143.00 125.95 L143.50 125.63 L144.00 125.31 L144.50 125.00 L145.00 124.68 L145.50 124.37 L146.00 124.06 L146.50 123.75 L147.00 123.43 L147.50 123.11 L148.00 122.79 L148.50 122.47 L149.00 122.14 L149.50 121.81 L150.00 121.48 L150.50 121.15 L151.00 120.81 L151.50 120.48 L152.00 120.15 L152.50 119.81 L153.00 119.48 L153.50 119.15 L154.00 118.82 L154.50 118.49 L155.00 118.16 L155.50 117.84 L156.00 117.52 L156.50 117.20 L157.00 116.89 L157.50 116.58 L158.00 116.28 L158.50 115.98 L159.00 115.69 L159.50 115.40 L160.00 115.12 L160.50 114.85 L161.00 114.58 L161.50 114.32 L162.00 114.07 L162.50 113.83 L163.00 113.59 L163.50 113.35 L164.00 113.12 L164.50 112.90 L165.00 112.68 L165.50 112.47 L166.00 112.26 L166.50 112.05 L167.00 111.85 L167.50 111.64 L168.00 111.45 L168.50 111.25 L169.00 111.05 L169.50 110.86 L170.00 110.67 L170.50 110.48 L171.00 110.28 L171.50 110.09 L172.00 109.90 L172.50 109.71 L173.00 109.51 L173.50 109.32 L174.00 109.12 L174.50 108.92 L175.00 108.72 L175.50 108.51 L176.00 108.30 L176.50 108.09 L177.00 107.87 L177.50 107.66 L178.00 107.44 L178.50 107.22 L179.00 107.00 L179.50 106.77 L180.00 106.55 L180.50 106.33 L181.00 106.10 L181.50 105.88 L182.00 105.65 L182.50 105.43 L183.00 105.21 L183.50 104.98 L184.00 104.76 L184.50 104.54 L185.00 104.32 L185.50 104.10 L186.00 103.89 L186.50 103.67 L187.00 103.46 L187.50 103.25 L188.00 103.05 L188.50 102.85 L189.00 102.65 L189.50 102.45 L190.00 102.26 L190.50 102.07 L191.00 101.89 L191.50 101.71 L192.00 101.54 L192.50 101.38 L193.00 101.22 L193.50 101.08 L194.00 100.95 L194.50 100.83 L195.00 100.72 L195.50 100.62 L196.00 100.53 L196.50 100.44 L197.00 100.37 L197.50 100.31 L198.00 100.25 L198.50 100.20 L199.00 100.16 L199.50 100.13 L200.00 100.10 L200.50 100.07 L201.00 100.04 L201.50 100.01 L202.00 99.98 L202.50 99.96 L203.00 99.94 L203.50 99.92 L204.00 99.90 L204.50 99.88 L205.00 99.87 L205.50 99.86 L206.00 99.85 L206.50 99.85 L207.00 99.85 L207.50 99.85 L208.00 99.85 L208.50 99.86 L209.00 99.87 L209.50 99.88 L210.00 99.90 L210.50 99.92 L211.00 99.94 L211.50 99.97 L212.00 100.00 L212.50 100.03 L213.00 100.07 L213.50 100.12 L214.00 100.16 L214.50 100.21 L215.00 100.27 L215.50 100.33 L216.00 100.39 L216.50 100.45 L217.00 100.51 L217.50 100.58 L218.00 100.65 L218.50 100.73 L219.00 100.80 L219.50 100.88 L220.00 100.97 L220.50 101.05 L221.00 101.14 L221.50 101.23 L222.00 101.33 L222.50 101.43 L223.00 101.53 L223.50 101.63 L224.00 101.74 L224.50 101.85 L225.00 101.96 L225.50 102.08 L226.00 102.19 L226.50 102.32 L227.00 102.44 L227.50 102.57 L228.00 102.70 L228.50 102.83 L229.00 102.97 L229.50 103.11 L230.00 103.25 L230.50 103.40 L231.00 103.55 L231.50 103.70 L232.00 103.85 L232.50 104.00 L233.00 104.16 L233.50 104.32 L234.00 104.47 L234.50 104.63 L235.00 104.80 L235.50 104.96 L236.00 105.13 L236.50 105.29 L237.00 105.46 L237.50 105.63 L238.00 105.80 L238.50 105.97 L239.00 106.15 L239.50 106.32 L240.00 106.50 L240.50 106.67 L241.00 106.85 L241.50 107.03 L242.00 107.21 L242.50 107.39 L243.00 107.57 L243.50 107.75 L244.00 107.93 L244.50 108.11 L245.00 108.30 L245.50 108.48 L246.00 108.66 L246.50 108.85 L247.00 109.03 L247.50 109.21 L248.00 109.40 L248.50 109.58 L249.00 109.77 L249.50 109.95 L250.00 110.14 L250.50 110.32 L251.00 110.50 L251.50 110.69 L252.00 110.87 L252.50 111.05 L253.00 111.24 L253.50 111.42 L254.00 111.60 L254.50 111.78 L255.00 111.96 L255.50 112.14 L256.00 112.32 L256.50 112.50 L257.00 112.68 L257.50 112.86 L258.00 113.05 L258.50 113.24 L259.00 113.43 L259.50 113.63 L260.00 113.82 L260.50 114.02 L261.00 114.22 L261.50 114.41 L262.00 114.61 L262.50 114.82 L263.00 115.02 L263.50 115.22 L264.00 115.42 L264.50 115.63 L265.00 115.83 L265.50 116.03 L266.00 116.23 L266.50 116.43 L267.00 116.64 L267.50 116.84 L268.00 117.04 L268.50 117.23 L269.00 117.43 L269.50 117.63 L270.00 117.82 L270.50 118.01 L271.00 118.20 L271.50 118.39 L272.00 118.57 L272.50 118.75 L273.00 118.93 L273.50 119.11 L274.00 119.29 L274.50 119.46 L275.00 119.62 L275.50 119.79 L276.00 119.95 L276.50 120.10 L277.00 120.26 L277.50 120.40 L278.00 120.55 L278.50 120.69 L279.00 120.82 L279.50 120.95 L280.00 121.07 L280.50 121.19 L281.00 121.30 L281.50 121.39 L282.00 121.48 L282.50 121.56 L283.00 121.64 L283.50 121.70 L284.00 121.76 L284.50 121.81 L285.00 121.85 L285.50 121.89 L286.00 121.92 L286.50 121.94 L287.00 121.96 L287.50 121.98 L288.00 121.99 L288.50 121.99 L289.00 121.99 L289.50 121.99 L290.00 121.98 L290.50 121.97 L291.00 121.96 L291.50 121.94 L292.00 121.93 L292.50 121.91 L293.00 121.89 L293.50 121.86 L294.00 121.84 L294.50 121.82 L295.00 121.79 L295.50 121.77 L296.00 121.74 L296.50 121.71 L297.00 121.67 L297.50 121.63 L298.00 121.59 L298.50 121.55 L299.00 121.50 L299.50 121.44 L300.00 121.39 L300.50 121.32 L301.00 121.25 L301.50 121.18 L302.00 121.11 L302.50 121.02 L303.00 120.94 L303.50 120.84 L304.00 120.74 L304.50 120.64 L305.00 120.53 L305.50 120.41 L306.00 120.29 L306.50 120.16 L307.00 120.03 L307.50 119.88 L308.00 119.73 L308.50 119.58 L309.00 119.42 L309.50 119.25 L310.00 119.08 L310.50 118.91 L311.00 118.73 L311.50 118.55 L312.00 118.36 L312.50 118.18 L313.00 117.98 L313.50 117.79 L314.00 117.59 L314.50 117.39 L315.00 117.19 L315.50 116.98 L316.00 116.77 L316.50 116.56 L317.00 116.35 L317.50 116.14 L318.00 115.93 L318.50 115.71 L319.00 115.49 L319.50 115.28 L320.00 115.06 L320.50 114.84 L321.00 114.63 L321.50 114.41 L322.00 114.19 L322.50 113.98 L323.00 113.76 L323.50 113.55 L324.00 113.34 L324.50 113.12 L325.00 112.91 L325.50 112.71 L326.00 112.50 L326.50 112.30 L327.00 112.09 L327.50 111.90 L328.00 111.70 L328.50 111.51 L329.00 111.31 L329.50 111.12 L330.00 110.93 L330.50 110.74 L331.00 110.55 L331.50 110.37 L332.00 110.18 L332.50 110.00 L333.00 109.81 L333.50 109.63 L334.00 109.44 L334.50 109.26 L335.00 109.08 L335.50 108.90 L336.00 108.72 L336.50 108.54 L337.00 108.36 L337.50 108.17 L338.00 107.99 L338.50 107.81 L339.00 107.63 L339.50 107.45 L340.00 107.27 L340.50 107.09 L341.00 106.91 L341.50 106.74 L342.00 106.56 L342.50 106.39 L343.00 106.22 L343.50 106.05 L344.00 105.88 L344.50 105.71 L345.00 105.54 L345.50 105.37 L346.00 105.20 L346.50 105.03 L347.00 104.86 L347.50 104.68 L348.00 104.50 L348.50 104.32 L349.00 104.13 L349.50 103.95 L350.00 103.75 L350.50 103.56 L351.00 103.36 L351.50 103.15 L352.00 102.95 L352.50 102.75 L353.00 102.55 L353.50 102.34 L354.00 102.14 L354.50 101.93 L355.00 101.73 L355.50 101.52 L356.00 101.30 L356.50 101.08 L357.00 100.86 L357.50 100.64 L358.00 100.40 L358.50 100.17 L359.00 99.92 L359.50 99.67 L360.00 99.42 L360.50 99.15 L361.00 98.88 L361.50 98.60 L362.00 98.31 L362.50 98.01 L363.00 97.69 L363.50 97.35 L364.00 97.01 L364.50 96.65 L365.00 96.29 L365.50 95.91 L366.00 95.53 L366.50 95.15 L367.00 94.76 L367.50 94.37 L368.00 93.98 L368.50 93.59 L369.00 93.20 L369.50 92.82 L370.00 92.44 L370.50 92.07 L371.00 91.71 L371.50 91.36 L372.00 91.02 L372.50 90.69 L373.00 90.38 L373.50 90.07 L374.00 89.77 L374.50 89.48 L375.00 89.18 L375.50 88.89 L376.00 88.60 L376.50 88.32 L377.00 88.03 L377.50 87.75 L378.00 87.48 L378.50 87.21 L379.00 86.94 L379.50 86.68 L380.00 86.42 L380.50 86.17 L381.00 85.92 L381.50 85.67 L382.00 85.43 L382.50 85.19 L383.00 84.96 L383.50 84.74 L384.00 84.51 L384.50 84.30 L385.00 84.09 L385.50 83.88 L386.00 83.68 L386.50 83.49 L387.00 83.30 L387.50 83.12 L388.00 82.95 L388.50 82.78 L389.00 82.62 L389.50 82.46 L390.00 82.31 L390.50 82.16 L391.00 82.01 L391.50 81.87 L392.00 81.74 L392.50 81.60 L393.00 81.47 L393.50 81.34 L394.00 81.22 L394.50 81.09 L395.00 80.97 L395.50 80.85 L396.00 80.73 L396.50 80.61 L397.00 80.49 L397.50 80.37 L398.00 80.25 L398.50 80.13 L399.00 80.01 L399.50 79.89 L400.00 79.77 L400.50 79.65 L401.00 79.52 L401.50 79.40 L402.00 79.28 L402.50 79.15 L403.00 79.03 L403.50 78.91 L404.00 78.80 L404.50 78.68 L405.00 78.57 L405.50 78.46 L406.00 78.35 L406.50 78.24 L407.00 78.14 L407.50 78.05 L408.00 77.95 L408.50 77.87 L409.00 77.78 L409.50 77.70 L410.00 77.63 L410.50 77.56 L411.00 77.50 L411.50 77.45 L412.00 77.39 L412.50 77.34 L413.00 77.29 L413.50 77.24 L414.00 77.19 L414.50 77.14 L415.00 77.09 L415.50 77.05 L416.00 77.01 L416.50 76.97 L417.00 76.93 L417.50 76.89 L418.00 76.85 L418.50 76.81 L419.00 76.78 L419.50 76.74 L420.00 76.71 L420.50 76.67 L421.00 76.64 L421.50 76.61 L422.00 76.58 L422.50 76.55 L423.00 76.51 L423.50 76.48 L424.00 76.45 L424.50 76.43 L425.00 76.40 L425.50 76.37 L426.00 76.34 L426.50 76.31 L427.00 76.28 L427.50 76.25 L428.00 76.22 L428.50 76.19 L429.00 76.16 L429.50 76.13 L430.00 76.10 L430.50 76.07 L431.00 76.04 L431.50 76.00 L432.00 75.97 L432.50 75.94 L433.00 75.90 L433.50 75.87 L433.65 75.86" stroke="#9a7070" stroke-width="1.3" fill="none"/>
<path d="M2.00 137.00 L2.50 137.03 L3.00 137.05 L3.50 137.08 L4.00 137.10 L4.50 137.13 L5.00 137.15 L5.50 137.17 L6.00 137.20 L6.50 137.22 L7.00 137.24 L7.50 137.26 L8.00 137.29 L8.50 137.31 L9.00 137.33 L9.50 137.35 L10.00 137.37 L10.50 137.39 L11.00 137.41 L11.50 137.43 L12.00 137.45 L12.50 137.47 L13.00 137.49 L13.50 137.51 L14.00 137.53 L14.50 137.55 L15.00 137.57 L15.50 137.59 L16.00 137.62 L16.50 137.64 L17.00 137.66 L17.50 137.68 L18.00 137.70 L18.50 137.72 L19.00 137.74 L19.50 137.76 L20.00 137.78 L20.50 137.80 L21.00 137.82 L21.50 137.84 L22.00 137.87 L22.50 137.89 L23.00 137.91 L23.50 137.93 L24.00 137.96 L24.50 137.98 L25.00 138.01 L25.50 138.03 L26.00 138.05 L26.50 138.08 L27.00 138.11 L27.50 138.13 L28.00 138.16 L28.50 138.19 L29.00 138.21 L29.50 138.24 L30.00 138.27 L30.50 138.30 L31.00 138.33 L31.50 138.36 L32.00 138.39 L32.50 138.42 L33.00 138.46 L33.50 138.49 L34.00 138.53 L34.50 138.56 L35.00 138.60 L35.50 138.63 L36.00 138.67 L36.50 138.71 L37.00 138.75 L37.50 138.79 L38.00 138.83 L38.50 138.87 L39.00 138.91 L39.50 138.96 L40.00 139.00 L40.50 139.05 L41.00 139.09 L41.50 139.14 L42.00 139.20 L42.50 139.25 L43.00 139.31 L43.50 139.36 L44.00 139.42 L44.50 139.48 L45.00 139.54 L45.50 139.61 L46.00 139.67 L46.50 139.74 L47.00 139.81 L47.50 139.87 L48.00 139.94 L48.50 140.02 L49.00 140.09 L49.50 140.16 L50.00 140.23 L50.50 140.31 L51.00 140.38 L51.50 140.46 L52.00 140.53 L52.50 140.61 L53.00 140.69 L53.50 140.77 L54.00 140.84 L54.50 140.92 L55.00 141.00 L55.50 141.08 L56.00 141.16 L56.50 141.24 L57.00 141.31 L57.50 141.39 L58.00 141.47 L58.50 141.55 L59.00 141.62 L59.50 141.70 L60.00 141.78 L60.50 141.85 L61.00 141.93 L61.50 142.00 L62.00 142.08 L62.50 142.15 L63.00 142.22 L63.50 142.30 L64.00 142.37 L64.50 142.43 L65.00 142.50 L65.50 142.57 L66.00 142.64 L66.50 142.70 L67.00 142.76 L67.50 142.82 L68.00 142.88 L68.50 142.94 L69.00 143.00 L69.50 143.05 L70.00 143.11 L70.50 143.16 L71.00 143.21 L71.50 143.25 L72.00 143.30 L72.50 143.34 L73.00 143.39 L73.50 143.43 L74.00 143.47 L74.50 143.50 L75.00 143.54 L75.50 143.57 L76.00 143.61 L76.50 143.64 L77.00 143.67 L77.50 143.70 L78.00 143.73 L78.50 143.76 L79.00 143.79 L79.50 143.81 L80.00 143.84 L80.50 143.86 L81.00 143.88 L81.50 143.90 L82.00 143.93 L82.50 143.95 L83.00 143.96 L83.50 143.98 L84.00 144.00 L84.50 144.02 L85.00 144.03 L85.50 144.05 L86.00 144.06 L86.50 144.08 L87.00 144.09 L87.50 144.10 L88.00 144.11 L88.50 144.12 L89.00 144.14 L89.50 144.15 L90.00 144.16 L90.50 144.16 L91.00 144.17 L91.50 144.18 L92.00 144.19 L92.50 144.20 L93.00 144.21 L93.50 144.21 L94.00 144.22 L94.50 144.23 L95.00 144.23 L95.50 144.24 L96.00 144.25 L96.50 144.25 L97.00 144.26 L97.50 144.27 L98.00 144.27 L98.50 144.28 L99.00 144.29 L99.50 144.29 L100.00 144.30 L100.50 144.31 L101.00 144.31 L101.50 144.32 L102.00 144.33 L102.50 144.34 L103.00 144.34 L103.50 144.35 L104.00 144.36 L104.50 144.37 L105.00 144.38 L105.50 144.39 L106.00 144.40 L106.50 144.40 L107.00 144.41 L107.50 144.42 L108.00 144.43 L108.50 144.44 L109.00 144.45 L109.50 144.46 L110.00 144.47 L110.50 144.48 L111.00 144.49 L111.50 144.50 L112.00 144.50 L112.50 144.51 L113.00 144.52 L113.50 144.53 L114.00 144.54 L114.50 144.55 L115.00 144.56 L115.50 144.57 L116.00 144.57 L116.50 144.58 L117.00 144.59 L117.50 144.60 L118.00 144.61 L118.50 144.61 L119.00 144.62 L119.50 144.63 L120.00 144.63 L120.50 144.64 L121.00 144.65 L121.50 144.65 L122.00 144.66 L122.50 144.66 L123.00 144.67 L123.50 144.67 L124.00 144.68 L124.50 144.68 L125.00 144.68 L125.50 144.69 L126.00 144.69 L126.50 144.69 L127.00 144.69 L127.50 144.69 L128.00 144.69 L128.50 144.69 L129.00 144.69 L129.50 144.69 L130.00 144.69 L130.50 144.69 L131.00 144.69 L131.50 144.68 L132.00 144.68 L132.50 144.68 L133.00 144.67 L133.50 144.67 L134.00 144.66 L134.50 144.65 L135.00 144.65 L135.50 144.64 L136.00 144.63 L136.50 144.62 L137.00 144.61 L137.50 144.60 L138.00 144.59 L138.50 144.58 L139.00 144.57 L139.50 144.55 L140.00 144.54 L140.50 144.52 L141.00 144.51 L141.50 144.49 L142.00 144.47 L142.50 144.45 L143.00 144.43 L143.50 144.41 L144.00 144.39 L144.50 144.37 L145.00 144.35 L145.50 144.32 L146.00 144.30 L146.50 144.27 L147.00 144.25 L147.50 144.22 L148.00 144.19 L148.50 144.16 L149.00 144.13 L149.50 144.09 L150.00 144.06 L150.50 144.03 L151.00 143.99 L151.50 143.95 L152.00 143.92 L152.50 143.88 L153.00 143.84 L153.50 143.80 L154.00 143.75 L154.50 143.71 L155.00 143.67 L155.50 143.62 L156.00 143.58 L156.50 143.53 L157.00 143.49 L157.50 143.44 L158.00 143.39 L158.50 143.34 L159.00 143.29 L159.50 143.24 L160.00 143.19 L160.50 143.14 L161.00 143.09 L161.50 143.03 L162.00 142.98 L162.50 142.93 L163.00 142.87 L163.50 142.82 L164.00 142.76 L164.50 142.71 L165.00 142.65 L165.50 142.60 L166.00 142.54 L166.50 142.48 L167.00 142.43 L167.50 142.37 L168.00 142.31 L168.50 142.25 L169.00 142.19 L169.50 142.14 L170.00 142.08 L170.50 142.02 L171.00 141.96 L171.50 141.90 L172.00 141.84 L172.50 141.78 L173.00 141.72 L173.50 141.66 L174.00 141.60 L174.50 141.54 L175.00 141.48 L175.50 141.42 L176.00 141.37 L176.50 141.31 L177.00 141.25 L177.50 141.19 L178.00 141.13 L178.50 141.07 L179.00 141.01 L179.50 140.96 L180.00 140.90 L180.50 140.84 L181.00 140.78 L181.50 140.73 L182.00 140.67 L182.50 140.62 L183.00 140.56 L183.50 140.50 L184.00 140.45 L184.50 140.40 L185.00 140.34 L185.50 140.29 L186.00 140.24 L186.50 140.18 L187.00 140.13 L187.50 140.08 L188.00 140.03 L188.50 139.98 L189.00 139.93 L189.50 139.89 L190.00 139.84 L190.50 139.79 L191.00 139.75 L191.50 139.70 L192.00 139.66 L192.50 139.61 L193.00 139.56 L193.50 139.52 L194.00 139.47 L194.50 139.43 L195.00 139.38 L195.50 139.34 L196.00 139.29 L196.50 139.25 L197.00 139.20 L197.50 139.15 L198.00 139.11 L198.50 139.06 L199.00 139.02 L199.50 138.97 L200.00 138.93 L200.50 138.88 L201.00 138.84 L201.50 138.79 L202.00 138.75 L202.50 138.71 L203.00 138.66 L203.50 138.62 L204.00 138.58 L204.50 138.53 L205.00 138.49 L205.50 138.45 L206.00 138.41 L206.50 138.37 L207.00 138.33 L207.50 138.29 L208.00 138.25 L208.50 138.21 L209.00 138.18 L209.50 138.14 L210.00 138.10 L210.50 138.07 L211.00 138.03 L211.50 138.00 L212.00 137.96 L212.50 137.93 L213.00 137.90 L213.50 137.87 L214.00 137.84 L214.50 137.81 L215.00 137.78 L215.50 137.76 L216.00 137.73 L216.50 137.70 L217.00 137.68 L217.50 137.66 L218.00 137.63 L218.50 137.61 L219.00 137.59 L219.50 137.58 L220.00 137.56 L220.50 137.54 L221.00 137.53 L221.50 137.51 L222.00 137.50 L222.50 137.49 L223.00 137.48 L223.50 137.47 L224.00 137.46 L224.50 137.46 L225.00 137.45 L225.50 137.45 L226.00 137.44 L226.50 137.44 L227.00 137.44 L227.50 137.44 L228.00 137.44 L228.50 137.44 L229.00 137.44 L229.50 137.45 L230.00 137.45 L230.50 137.46 L231.00 137.46 L231.50 137.47 L232.00 137.47 L232.50 137.48 L233.00 137.49 L233.50 137.50 L234.00 137.51 L234.50 137.52 L235.00 137.53 L235.50 137.54 L236.00 137.55 L236.50 137.57 L237.00 137.58 L237.50 137.59 L238.00 137.60 L238.50 137.62 L239.00 137.63 L239.50 137.65 L240.00 137.66 L240.50 137.67 L241.00 137.69 L241.50 137.70 L242.00 137.72 L242.50 137.73 L243.00 137.75 L243.50 137.76 L244.00 137.78 L244.50 137.80 L245.00 137.81 L245.50 137.83 L246.00 137.84 L246.50 137.86 L247.00 137.87 L247.50 137.88 L248.00 137.90 L248.50 137.91 L249.00 137.93 L249.50 137.94 L250.00 137.95 L250.50 137.97 L251.00 137.98 L251.50 137.99 L252.00 138.00 L252.50 138.01 L253.00 138.02 L253.50 138.03 L254.00 138.04 L254.50 138.05 L255.00 138.06 L255.50 138.07 L256.00 138.07 L256.50 138.08 L257.00 138.09 L257.50 138.09 L258.00 138.09 L258.50 138.10 L259.00 138.10 L259.50 138.10 L260.00 138.10 L260.50 138.11 L261.00 138.11 L261.50 138.11 L262.00 138.11 L262.50 138.11 L263.00 138.11 L263.50 138.11 L264.00 138.11 L264.50 138.11 L265.00 138.11 L265.50 138.11 L266.00 138.11 L266.50 138.11 L267.00 138.11 L267.50 138.10 L268.00 138.10 L268.50 138.10 L269.00 138.09 L269.50 138.08 L270.00 138.08 L270.50 138.07 L271.00 138.06 L271.50 138.05 L272.00 138.04 L272.50 138.03 L273.00 138.02 L273.50 138.00 L274.00 137.99 L274.50 137.97 L275.00 137.95 L275.50 137.94 L276.00 137.91 L276.50 137.89 L277.00 137.87 L277.50 137.85 L278.00 137.82 L278.50 137.79 L279.00 137.76 L279.50 137.73 L280.00 137.70 L280.50 137.67 L281.00 137.63 L281.50 137.59 L282.00 137.55 L282.50 137.51 L283.00 137.47 L283.50 137.43 L284.00 137.38 L284.50 137.34 L285.00 137.29 L285.50 137.24 L286.00 137.19 L286.50 137.14 L287.00 137.08 L287.50 137.03 L288.00 136.97 L288.50 136.91 L289.00 136.85 L289.50 136.79 L290.00 136.73 L290.50 136.66 L291.00 136.60 L291.50 136.53 L292.00 136.46 L292.50 136.39 L293.00 136.31 L293.50 136.24 L294.00 136.16 L294.50 136.09 L295.00 136.01 L295.50 135.93 L296.00 135.85 L296.50 135.76 L297.00 135.68 L297.50 135.59 L298.00 135.50 L298.50 135.41 L299.00 135.32 L299.50 135.22 L300.00 135.12 L300.50 135.02 L301.00 134.91 L301.50 134.81 L302.00 134.70 L302.50 134.59 L303.00 134.48 L303.50 134.37 L304.00 134.25 L304.50 134.13 L305.00 134.02 L305.50 133.90 L306.00 133.78 L306.50 133.66 L307.00 133.53 L307.50 133.41 L308.00 133.29 L308.50 133.16 L309.00 133.04 L309.50 132.92 L310.00 132.79 L310.50 132.67 L311.00 132.54 L311.50 132.42 L312.00 132.30 L312.50 132.18 L313.00 132.05 L313.50 131.93 L314.00 131.81 L314.50 131.69 L315.00 131.58 L315.50 131.46 L316.00 131.34 L316.50 131.23 L317.00 131.12 L317.50 131.01 L318.00 130.90 L318.50 130.79 L319.00 130.69 L319.50 130.58 L320.00 130.47 L320.50 130.37 L321.00 130.26 L321.50 130.16 L322.00 130.05 L322.50 129.95 L323.00 129.85 L323.50 129.74 L324.00 129.64 L324.50 129.54 L325.00 129.43 L325.50 129.33 L326.00 129.23 L326.50 129.13 L327.00 129.03 L327.50 128.92 L328.00 128.82 L328.50 128.72 L329.00 128.62 L329.50 128.52 L330.00 128.42 L330.50 128.32 L331.00 128.23 L331.50 128.13 L332.00 128.03 L332.50 127.93 L333.00 127.83 L333.50 127.74 L334.00 127.64 L334.50 127.54 L335.00 127.45 L335.50 127.35 L336.00 127.25 L336.50 127.16 L337.00 127.06 L337.50 126.97 L338.00 126.88 L338.50 126.78 L339.00 126.69 L339.50 126.59 L340.00 126.50 L340.50 126.41 L341.00 126.32 L341.50 126.23 L342.00 126.14 L342.50 126.05 L343.00 125.97 L343.50 125.89 L344.00 125.80 L344.50 125.72 L345.00 125.64 L345.50 125.56 L346.00 125.48 L346.50 125.40 L347.00 125.32 L347.50 125.24 L348.00 125.17 L348.50 125.09 L349.00 125.01 L349.50 124.93 L350.00 124.86 L350.50 124.78 L351.00 124.70 L351.50 124.62 L352.00 124.54 L352.50 124.46 L353.00 124.38 L353.50 124.30 L354.00 124.22 L354.50 124.14 L355.00 124.05 L355.50 123.97 L356.00 123.88 L356.50 123.79 L357.00 123.70 L357.50 123.61 L358.00 123.52 L358.50 123.42 L359.00 123.33 L359.50 123.23 L360.00 123.13 L360.50 123.02 L361.00 122.92 L361.50 122.81 L362.00 122.70 L362.50 122.59 L363.00 122.47 L363.50 122.35 L364.00 122.22 L364.50 122.09 L365.00 121.96 L365.50 121.82 L366.00 121.69 L366.50 121.54 L367.00 121.40 L367.50 121.26 L368.00 121.11 L368.50 120.96 L369.00 120.81 L369.50 120.66 L370.00 120.50 L370.50 120.35 L371.00 120.19 L371.50 120.04 L372.00 119.88 L372.50 119.73 L373.00 119.57 L373.50 119.42 L374.00 119.27 L374.50 119.11 L375.00 118.96 L375.50 118.81 L376.00 118.66 L376.50 118.52 L377.00 118.37 L377.50 118.23 L378.00 118.09 L378.50 117.95 L379.00 117.82 L379.50 117.69 L380.00 117.56 L380.50 117.44 L381.00 117.32 L381.50 117.21 L382.00 117.10 L382.50 116.99 L383.00 116.89 L383.50 116.79 L384.00 116.70 L384.50 116.61 L385.00 116.53 L385.50 116.45 L386.00 116.38 L386.50 116.31 L387.00 116.24 L387.50 116.17 L388.00 116.11 L388.50 116.05 L389.00 116.00 L389.50 115.95 L390.00 115.90 L390.50 115.85 L391.00 115.80 L391.50 115.76 L392.00 115.72 L392.50 115.68 L393.00 115.65 L393.50 115.61 L394.00 115.58 L394.50 115.55 L395.00 115.52 L395.50 115.50 L396.00 115.47 L396.50 115.45 L397.00 115.42 L397.50 115.40 L398.00 115.38 L398.50 115.36 L399.00 115.34 L399.50 115.32 L400.00 115.30 L400.50 115.28 L401.00 115.26 L401.50 115.24 L402.00 115.22 L402.50 115.20 L403.00 115.18 L403.50 115.16 L404.00 115.14 L404.50 115.12 L405.00 115.10 L405.50 115.08 L406.00 115.06 L406.50 115.04 L407.00 115.02 L407.50 115.00 L408.00 114.98 L408.50 114.96 L409.00 114.95 L409.50 114.93 L410.00 114.92 L410.50 114.90 L411.00 114.89 L411.50 114.87 L412.00 114.86 L412.50 114.85 L413.00 114.84 L413.50 114.82 L414.00 114.81 L414.50 114.80 L415.00 114.79 L415.50 114.78 L416.00 114.77 L416.50 114.76 L417.00 114.75 L417.50 114.75 L418.00 114.74 L418.50 114.73 L419.00 114.72 L419.50 114.71 L420.00 114.71 L420.50 114.70 L421.00 114.69 L421.50 114.69 L422.00 114.68 L422.50 114.67 L423.00 114.66 L423.50 114.66 L424.00 114.65 L424.50 114.65 L425.00 114.64 L425.50 114.63 L426.00 114.63 L426.50 114.62 L427.00 114.61 L427.50 114.60 L428.00 114.60 L428.50 114.59 L429.00 114.58 L429.50 114.57 L430.00 114.57 L430.50 114.56 L431.00 114.55 L431.50 114.54 L432.00 114.53 L432.50 114.52 L433.00 114.51 L433.50 114.50 L433.65 114.50" stroke="#2a5f92" stroke-width="1.3" fill="none"/>
<path d="M2.00 144.20 L2.50 144.21 L3.00 144.24 L3.50 144.28 L4.00 144.31 L4.50 144.35 L5.00 144.39 L5.50 144.42 L6.00 144.46 L6.50 144.50 L7.00 144.54 L7.50 144.58 L8.00 144.62 L8.50 144.65 L9.00 144.69 L9.50 144.73 L10.00 144.76 L10.50 144.79 L11.00 144.83 L11.50 144.85 L12.00 144.88 L12.50 144.91 L13.00 144.93 L13.50 144.95 L14.00 144.97 L14.50 144.98 L15.00 144.99 L15.50 145.00 L16.00 145.00 L16.50 145.00 L17.00 144.99 L17.50 144.97 L18.00 144.95 L18.50 144.93 L19.00 144.90 L19.50 144.87 L20.00 144.83 L20.50 144.80 L21.00 144.76 L21.50 144.73 L22.00 144.69 L22.50 144.66 L23.00 144.63 L23.50 144.60 L24.00 144.57 L24.50 144.55 L25.00 144.53 L25.50 144.51 L26.00 144.50 L26.50 144.50 L27.00 144.51 L27.50 144.52 L28.00 144.54 L28.50 144.56 L29.00 144.60 L29.50 144.65 L30.00 144.71 L30.50 144.79 L31.00 144.88 L31.50 144.99 L32.00 145.10 L32.50 145.22 L33.00 145.36 L33.50 145.49 L34.00 145.64 L34.50 145.79 L35.00 145.94 L35.50 146.10 L36.00 146.25 L36.50 146.41 L37.00 146.57 L37.50 146.72 L38.00 146.87 L38.50 147.02 L39.00 147.16 L39.50 147.31 L40.00 147.45 L40.50 147.60 L41.00 147.74 L41.50 147.89 L42.00 148.03 L42.50 148.18 L43.00 148.33 L43.50 148.49 L44.00 148.64 L44.50 148.80 L45.00 148.96 L45.50 149.13 L46.00 149.30 L46.50 149.47 L47.00 149.65 L47.50 149.84 L48.00 150.04 L48.50 150.23 L49.00 150.44 L49.50 150.66 L50.00 150.89 L50.50 151.14 L51.00 151.42 L51.50 151.72 L52.00 152.04 L52.50 152.37 L53.00 152.70 L53.50 153.04 L54.00 153.38 L54.50 153.72 L55.00 154.05 L55.50 154.37 L56.00 154.67 L56.50 154.95 L57.00 155.20 L57.50 155.44 L58.00 155.67 L58.50 155.89 L59.00 156.11 L59.50 156.32 L60.00 156.54 L60.50 156.74 L61.00 156.95 L61.50 157.15 L62.00 157.35 L62.50 157.54 L63.00 157.73 L63.50 157.92 L64.00 158.11 L64.50 158.29 L65.00 158.47 L65.50 158.65 L66.00 158.83 L66.50 159.01 L67.00 159.18 L67.50 159.35 L68.00 159.52 L68.50 159.69 L69.00 159.86 L69.50 160.03 L70.00 160.20 L70.50 160.37 L71.00 160.53 L71.50 160.70 L72.00 160.85 L72.50 161.00 L73.00 161.14 L73.50 161.26 L74.00 161.37 L74.50 161.46 L75.00 161.53 L75.50 161.58 L76.00 161.60 L76.50 161.60 L77.00 161.60 L77.50 161.59 L78.00 161.58 L78.50 161.56 L79.00 161.53 L79.50 161.50 L80.00 161.46 L80.50 161.42 L81.00 161.37 L81.50 161.32 L82.00 161.27 L82.50 161.21 L83.00 161.15 L83.50 161.09 L84.00 161.03 L84.50 160.97 L85.00 160.90 L85.50 160.83 L86.00 160.77 L86.50 160.70 L87.00 160.63 L87.50 160.57 L88.00 160.50 L88.50 160.44 L89.00 160.37 L89.50 160.30 L90.00 160.24 L90.50 160.17 L91.00 160.10 L91.50 160.03 L92.00 159.96 L92.50 159.89 L93.00 159.81 L93.50 159.73 L94.00 159.66 L94.50 159.58 L95.00 159.49 L95.50 159.41 L96.00 159.32 L96.50 159.23 L97.00 159.13 L97.50 159.04 L98.00 158.94 L98.50 158.83 L99.00 158.73 L99.50 158.61 L100.00 158.50 L100.50 158.38 L101.00 158.26 L101.50 158.14 L102.00 158.02 L102.50 157.89 L103.00 157.77 L103.50 157.64 L104.00 157.51 L104.50 157.38 L105.00 157.25 L105.50 157.11 L106.00 156.97 L106.50 156.83 L107.00 156.69 L107.50 156.55 L108.00 156.41 L108.50 156.26 L109.00 156.11 L109.50 155.96 L110.00 155.81 L110.50 155.66 L111.00 155.51 L111.50 155.35 L112.00 155.19 L112.50 155.03 L113.00 154.87 L113.50 154.70 L114.00 154.54 L114.50 154.37 L115.00 154.20 L115.50 154.03 L116.00 153.86 L116.50 153.69 L117.00 153.51 L117.50 153.34 L118.00 153.17 L118.50 152.99 L119.00 152.82 L119.50 152.64 L120.00 152.46 L120.50 152.28 L121.00 152.09 L121.50 151.91 L122.00 151.72 L122.50 151.53 L123.00 151.34 L123.50 151.15 L124.00 150.95 L124.50 150.75 L125.00 150.55 L125.50 150.35 L126.00 150.14 L126.50 149.93 L127.00 149.71 L127.50 149.49 L128.00 149.27 L128.50 149.05 L129.00 148.82 L129.50 148.58 L130.00 148.34 L130.50 148.10 L131.00 147.85 L131.50 147.60 L132.00 147.34 L132.50 147.08 L133.00 146.81 L133.50 146.53 L134.00 146.26 L134.50 145.97 L135.00 145.69 L135.50 145.40 L136.00 145.11 L136.50 144.81 L137.00 144.52 L137.50 144.22 L138.00 143.91 L138.50 143.61 L139.00 143.30 L139.50 143.00 L140.00 142.69 L140.50 142.38 L141.00 142.07 L141.50 141.76 L142.00 141.45 L142.50 141.14 L143.00 140.83 L143.50 140.52 L144.00 140.22 L144.50 139.91 L145.00 139.60 L145.50 139.30 L146.00 139.00 L146.50 138.70 L147.00 138.39 L147.50 138.08 L148.00 137.77 L148.50 137.45 L149.00 137.14 L149.50 136.82 L150.00 136.49 L150.50 136.17 L151.00 135.85 L151.50 135.52 L152.00 135.20 L152.50 134.88 L153.00 134.55 L153.50 134.23 L154.00 133.91 L154.50 133.59 L155.00 133.28 L155.50 132.96 L156.00 132.65 L156.50 132.34 L157.00 132.04 L157.50 131.74 L158.00 131.45 L158.50 131.16 L159.00 130.87 L159.50 130.60 L160.00 130.32 L160.50 130.06 L161.00 129.80 L161.50 129.55 L162.00 129.30 L162.50 129.06 L163.00 128.83 L163.50 128.61 L164.00 128.38 L164.50 128.17 L165.00 127.95 L165.50 127.75 L166.00 127.54 L166.50 127.34 L167.00 127.14 L167.50 126.95 L168.00 126.75 L168.50 126.56 L169.00 126.37 L169.50 126.19 L170.00 126.00 L170.50 125.81 L171.00 125.63 L171.50 125.44 L172.00 125.25 L172.50 125.07 L173.00 124.88 L173.50 124.69 L174.00 124.49 L174.50 124.30 L175.00 124.10 L175.50 123.90 L176.00 123.70 L176.50 123.49 L177.00 123.29 L177.50 123.08 L178.00 122.86 L178.50 122.65 L179.00 122.43 L179.50 122.22 L180.00 122.00 L180.50 121.78 L181.00 121.57 L181.50 121.35 L182.00 121.13 L182.50 120.91 L183.00 120.70 L183.50 120.48 L184.00 120.26 L184.50 120.05 L185.00 119.84 L185.50 119.63 L186.00 119.42 L186.50 119.21 L187.00 119.00 L187.50 118.80 L188.00 118.60 L188.50 118.40 L189.00 118.21 L189.50 118.02 L190.00 117.83 L190.50 117.65 L191.00 117.47 L191.50 117.30 L192.00 117.13 L192.50 116.98 L193.00 116.83 L193.50 116.69 L194.00 116.57 L194.50 116.45 L195.00 116.34 L195.50 116.24 L196.00 116.15 L196.50 116.07 L197.00 116.00 L197.50 115.94 L198.00 115.88 L198.50 115.84 L199.00 115.80 L199.50 115.77 L200.00 115.74 L200.50 115.71 L201.00 115.68 L201.50 115.65 L202.00 115.63 L202.50 115.60 L203.00 115.58 L203.50 115.56 L204.00 115.54 L204.50 115.53 L205.00 115.52 L205.50 115.51 L206.00 115.50 L206.50 115.49 L207.00 115.49 L207.50 115.49 L208.00 115.49 L208.50 115.50 L209.00 115.51 L209.50 115.52 L210.00 115.54 L210.50 115.56 L211.00 115.58 L211.50 115.61 L212.00 115.64 L212.50 115.67 L213.00 115.71 L213.50 115.75 L214.00 115.80 L214.50 115.85 L215.00 115.90 L215.50 115.96 L216.00 116.02 L216.50 116.08 L217.00 116.14 L217.50 116.21 L218.00 116.28 L218.50 116.35 L219.00 116.42 L219.50 116.50 L220.00 116.58 L220.50 116.66 L221.00 116.75 L221.50 116.84 L222.00 116.93 L222.50 117.03 L223.00 117.12 L223.50 117.22 L224.00 117.33 L224.50 117.43 L225.00 117.54 L225.50 117.66 L226.00 117.77 L226.50 117.89 L227.00 118.01 L227.50 118.14 L228.00 118.26 L228.50 118.39 L229.00 118.53 L229.50 118.66 L230.00 118.80 L230.50 118.94 L231.00 119.09 L231.50 119.23 L232.00 119.38 L232.50 119.53 L233.00 119.68 L233.50 119.83 L234.00 119.99 L234.50 120.14 L235.00 120.30 L235.50 120.46 L236.00 120.62 L236.50 120.78 L237.00 120.94 L237.50 121.11 L238.00 121.27 L238.50 121.44 L239.00 121.61 L239.50 121.78 L240.00 121.95 L240.50 122.12 L241.00 122.29 L241.50 122.47 L242.00 122.64 L242.50 122.81 L243.00 122.99 L243.50 123.16 L244.00 123.34 L244.50 123.52 L245.00 123.69 L245.50 123.87 L246.00 124.05 L246.50 124.23 L247.00 124.41 L247.50 124.59 L248.00 124.77 L248.50 124.94 L249.00 125.12 L249.50 125.30 L250.00 125.48 L250.50 125.66 L251.00 125.84 L251.50 126.02 L252.00 126.19 L252.50 126.37 L253.00 126.55 L253.50 126.73 L254.00 126.90 L254.50 127.08 L255.00 127.25 L255.50 127.43 L256.00 127.60 L256.50 127.77 L257.00 127.95 L257.50 128.13 L258.00 128.31 L258.50 128.50 L259.00 128.68 L259.50 128.87 L260.00 129.06 L260.50 129.25 L261.00 129.44 L261.50 129.64 L262.00 129.83 L262.50 130.03 L263.00 130.22 L263.50 130.42 L264.00 130.61 L264.50 130.81 L265.00 131.01 L265.50 131.20 L266.00 131.40 L266.50 131.60 L267.00 131.79 L267.50 131.99 L268.00 132.18 L268.50 132.37 L269.00 132.56 L269.50 132.75 L270.00 132.94 L270.50 133.13 L271.00 133.31 L271.50 133.49 L272.00 133.67 L272.50 133.85 L273.00 134.02 L273.50 134.20 L274.00 134.36 L274.50 134.53 L275.00 134.69 L275.50 134.85 L276.00 135.01 L276.50 135.16 L277.00 135.31 L277.50 135.45 L278.00 135.59 L278.50 135.72 L279.00 135.85 L279.50 135.98 L280.00 136.10 L280.50 136.21 L281.00 136.32 L281.50 136.41 L282.00 136.50 L282.50 136.58 L283.00 136.65 L283.50 136.71 L284.00 136.77 L284.50 136.82 L285.00 136.86 L285.50 136.89 L286.00 136.92 L286.50 136.95 L287.00 136.97 L287.50 136.98 L288.00 136.99 L288.50 136.99 L289.00 136.99 L289.50 136.99 L290.00 136.98 L290.50 136.97 L291.00 136.96 L291.50 136.95 L292.00 136.93 L292.50 136.91 L293.00 136.89 L293.50 136.87 L294.00 136.85 L294.50 136.82 L295.00 136.80 L295.50 136.78 L296.00 136.75 L296.50 136.72 L297.00 136.68 L297.50 136.65 L298.00 136.61 L298.50 136.56 L299.00 136.51 L299.50 136.46 L300.00 136.40 L300.50 136.34 L301.00 136.28 L301.50 136.21 L302.00 136.13 L302.50 136.05 L303.00 135.97 L303.50 135.88 L304.00 135.78 L304.50 135.68 L305.00 135.57 L305.50 135.46 L306.00 135.34 L306.50 135.22 L307.00 135.08 L307.50 134.95 L308.00 134.80 L308.50 134.65 L309.00 134.49 L309.50 134.33 L310.00 134.17 L310.50 134.00 L311.00 133.83 L311.50 133.65 L312.00 133.47 L312.50 133.29 L313.00 133.10 L313.50 132.91 L314.00 132.72 L314.50 132.52 L315.00 132.33 L315.50 132.13 L316.00 131.93 L316.50 131.72 L317.00 131.52 L317.50 131.31 L318.00 131.10 L318.50 130.89 L319.00 130.68 L319.50 130.47 L320.00 130.26 L320.50 130.05 L321.00 129.84 L321.50 129.63 L322.00 129.42 L322.50 129.21 L323.00 129.00 L323.50 128.80 L324.00 128.59 L324.50 128.38 L325.00 128.18 L325.50 127.98 L326.00 127.78 L326.50 127.58 L327.00 127.38 L327.50 127.19 L328.00 127.00 L328.50 126.81 L329.00 126.62 L329.50 126.44 L330.00 126.25 L330.50 126.07 L331.00 125.89 L331.50 125.71 L332.00 125.53 L332.50 125.35 L333.00 125.17 L333.50 124.99 L334.00 124.81 L334.50 124.63 L335.00 124.46 L335.50 124.28 L336.00 124.10 L336.50 123.93 L337.00 123.75 L337.50 123.58 L338.00 123.40 L338.50 123.23 L339.00 123.05 L339.50 122.88 L340.00 122.70 L340.50 122.53 L341.00 122.35 L341.50 122.18 L342.00 122.01 L342.50 121.85 L343.00 121.68 L343.50 121.52 L344.00 121.35 L344.50 121.19 L345.00 121.02 L345.50 120.86 L346.00 120.69 L346.50 120.53 L347.00 120.36 L347.50 120.19 L348.00 120.01 L348.50 119.84 L349.00 119.66 L349.50 119.47 L350.00 119.29 L350.50 119.10 L351.00 118.90 L351.50 118.70 L352.00 118.51 L352.50 118.31 L353.00 118.11 L353.50 117.92 L354.00 117.72 L354.50 117.52 L355.00 117.32 L355.50 117.11 L356.00 116.90 L356.50 116.69 L357.00 116.48 L357.50 116.26 L358.00 116.03 L358.50 115.80 L359.00 115.57 L359.50 115.33 L360.00 115.08 L360.50 114.82 L361.00 114.55 L361.50 114.28 L362.00 114.00 L362.50 113.71 L363.00 113.40 L363.50 113.07 L364.00 112.74 L364.50 112.39 L365.00 112.04 L365.50 111.67 L366.00 111.31 L366.50 110.93 L367.00 110.56 L367.50 110.18 L368.00 109.80 L368.50 109.42 L369.00 109.04 L369.50 108.67 L370.00 108.30 L370.50 107.94 L371.00 107.59 L371.50 107.25 L372.00 106.92 L372.50 106.60 L373.00 106.30 L373.50 106.01 L374.00 105.71 L374.50 105.42 L375.00 105.14 L375.50 104.85 L376.00 104.57 L376.50 104.30 L377.00 104.02 L377.50 103.75 L378.00 103.49 L378.50 103.22 L379.00 102.96 L379.50 102.71 L380.00 102.46 L380.50 102.21 L381.00 101.97 L381.50 101.73 L382.00 101.49 L382.50 101.27 L383.00 101.04 L383.50 100.82 L384.00 100.61 L384.50 100.40 L385.00 100.19 L385.50 99.99 L386.00 99.80 L386.50 99.61 L387.00 99.43 L387.50 99.26 L388.00 99.09 L388.50 98.92 L389.00 98.77 L389.50 98.61 L390.00 98.46 L390.50 98.32 L391.00 98.18 L391.50 98.04 L392.00 97.91 L392.50 97.78 L393.00 97.65 L393.50 97.53 L394.00 97.41 L394.50 97.28 L395.00 97.17 L395.50 97.05 L396.00 96.93 L396.50 96.82 L397.00 96.70 L397.50 96.59 L398.00 96.47 L398.50 96.35 L399.00 96.24 L399.50 96.12 L400.00 96.00 L400.50 95.88 L401.00 95.76 L401.50 95.64 L402.00 95.52 L402.50 95.40 L403.00 95.28 L403.50 95.17 L404.00 95.05 L404.50 94.94 L405.00 94.83 L405.50 94.73 L406.00 94.62 L406.50 94.52 L407.00 94.42 L407.50 94.33 L408.00 94.24 L408.50 94.15 L409.00 94.07 L409.50 94.00 L410.00 93.92 L410.50 93.86 L411.00 93.80 L411.50 93.74 L412.00 93.69 L412.50 93.64 L413.00 93.59 L413.50 93.54 L414.00 93.49 L414.50 93.45 L415.00 93.40 L415.50 93.36 L416.00 93.32 L416.50 93.28 L417.00 93.24 L417.50 93.20 L418.00 93.16 L418.50 93.13 L419.00 93.09 L419.50 93.06 L420.00 93.03 L420.50 92.99 L421.00 92.96 L421.50 92.93 L422.00 92.90 L422.50 92.87 L423.00 92.84 L423.50 92.81 L424.00 92.78 L424.50 92.75 L425.00 92.72 L425.50 92.70 L426.00 92.67 L426.50 92.64 L427.00 92.61 L427.50 92.58 L428.00 92.55 L428.50 92.53 L429.00 92.50 L429.50 92.47 L430.00 92.44 L430.50 92.41 L431.00 92.38 L431.50 92.34 L432.00 92.31 L432.50 92.28 L433.00 92.25 L433.50 92.21 L433.65 92.20" stroke="#d7b9b9" stroke-width="1.5" fill="none"/>
<path d="M2.00 158.98 L2.50 159.00 L3.00 159.03 L3.50 159.06 L4.00 159.09 L4.50 159.13 L5.00 159.17 L5.50 159.20 L6.00 159.24 L6.50 159.28 L7.00 159.31 L7.50 159.35 L8.00 159.39 L8.50 159.42 L9.00 159.46 L9.50 159.49 L10.00 159.53 L10.50 159.56 L11.00 159.59 L11.50 159.62 L12.00 159.65 L12.50 159.67 L13.00 159.69 L13.50 159.71 L14.00 159.73 L14.50 159.74 L15.00 159.76 L15.50 159.76 L16.00 159.76 L16.50 159.76 L17.00 159.75 L17.50 159.73 L18.00 159.71 L18.50 159.69 L19.00 159.66 L19.50 159.63 L20.00 159.60 L20.50 159.57 L21.00 159.53 L21.50 159.50 L22.00 159.46 L22.50 159.43 L23.00 159.40 L23.50 159.37 L24.00 159.34 L24.50 159.32 L25.00 159.30 L25.50 159.29 L26.00 159.28 L26.50 159.28 L27.00 159.28 L27.50 159.29 L28.00 159.31 L28.50 159.34 L29.00 159.37 L29.50 159.42 L30.00 159.48 L30.50 159.56 L31.00 159.65 L31.50 159.75 L32.00 159.86 L32.50 159.98 L33.00 160.11 L33.50 160.24 L34.00 160.38 L34.50 160.52 L35.00 160.67 L35.50 160.82 L36.00 160.98 L36.50 161.13 L37.00 161.28 L37.50 161.43 L38.00 161.57 L38.50 161.72 L39.00 161.86 L39.50 162.00 L40.00 162.14 L40.50 162.28 L41.00 162.42 L41.50 162.56 L42.00 162.70 L42.50 162.85 L43.00 162.99 L43.50 163.14 L44.00 163.29 L44.50 163.45 L45.00 163.60 L45.50 163.76 L46.00 163.93 L46.50 164.10 L47.00 164.28 L47.50 164.46 L48.00 164.64 L48.50 164.84 L49.00 165.04 L49.50 165.25 L50.00 165.47 L50.50 165.72 L51.00 165.99 L51.50 166.28 L52.00 166.59 L52.50 166.91 L53.00 167.23 L53.50 167.56 L54.00 167.89 L54.50 168.22 L55.00 168.54 L55.50 168.84 L56.00 169.14 L56.50 169.41 L57.00 169.66 L57.50 169.89 L58.00 170.11 L58.50 170.32 L59.00 170.54 L59.50 170.75 L60.00 170.95 L60.50 171.15 L61.00 171.35 L61.50 171.55 L62.00 171.74 L62.50 171.93 L63.00 172.11 L63.50 172.29 L64.00 172.48 L64.50 172.65 L65.00 172.83 L65.50 173.00 L66.00 173.18 L66.50 173.35 L67.00 173.52 L67.50 173.68 L68.00 173.85 L68.50 174.01 L69.00 174.18 L69.50 174.34 L70.00 174.50 L70.50 174.67 L71.00 174.83 L71.50 174.99 L72.00 175.14 L72.50 175.28 L73.00 175.42 L73.50 175.54 L74.00 175.64 L74.50 175.73 L75.00 175.80 L75.50 175.84 L76.00 175.86 L76.50 175.87 L77.00 175.86 L77.50 175.86 L78.00 175.84 L78.50 175.82 L79.00 175.79 L79.50 175.76 L80.00 175.73 L80.50 175.69 L81.00 175.64 L81.50 175.59 L82.00 175.54 L82.50 175.49 L83.00 175.43 L83.50 175.37 L84.00 175.31 L84.50 175.25 L85.00 175.18 L85.50 175.12 L86.00 175.05 L86.50 174.99 L87.00 174.92 L87.50 174.86 L88.00 174.80 L88.50 174.73 L89.00 174.67 L89.50 174.61 L90.00 174.54 L90.50 174.48 L91.00 174.41 L91.50 174.34 L92.00 174.27 L92.50 174.20 L93.00 174.13 L93.50 174.05 L94.00 173.98 L94.50 173.90 L95.00 173.82 L95.50 173.74 L96.00 173.65 L96.50 173.56 L97.00 173.47 L97.50 173.38 L98.00 173.28 L98.50 173.18 L99.00 173.07 L99.50 172.97 L100.00 172.86 L100.50 172.74 L101.00 172.63 L101.50 172.51 L102.00 172.39 L102.50 172.27 L103.00 172.15 L103.50 172.02 L104.00 171.90 L104.50 171.77 L105.00 171.64 L105.50 171.51 L106.00 171.37 L106.50 171.24 L107.00 171.10 L107.50 170.97 L108.00 170.83 L108.50 170.68 L109.00 170.54 L109.50 170.40 L110.00 170.25 L110.50 170.10 L111.00 169.95 L111.50 169.80 L112.00 169.64 L112.50 169.49 L113.00 169.33 L113.50 169.17 L114.00 169.01 L114.50 168.85 L115.00 168.68 L115.50 168.52 L116.00 168.35 L116.50 168.19 L117.00 168.02 L117.50 167.85 L118.00 167.68 L118.50 167.51 L119.00 167.34 L119.50 167.17 L120.00 167.00 L120.50 166.82 L121.00 166.64 L121.50 166.46 L122.00 166.28 L122.50 166.10 L123.00 165.91 L123.50 165.73 L124.00 165.54 L124.50 165.34 L125.00 165.15 L125.50 164.95 L126.00 164.75 L126.50 164.54 L127.00 164.33 L127.50 164.12 L128.00 163.90 L128.50 163.68 L129.00 163.46 L129.50 163.23 L130.00 163.00 L130.50 162.77 L131.00 162.53 L131.50 162.28 L132.00 162.03 L132.50 161.77 L133.00 161.51 L133.50 161.25 L134.00 160.98 L134.50 160.71 L135.00 160.43 L135.50 160.15 L136.00 159.87 L136.50 159.58 L137.00 159.29 L137.50 159.00 L138.00 158.71 L138.50 158.41 L139.00 158.12 L139.50 157.82 L140.00 157.52 L140.50 157.22 L141.00 156.92 L141.50 156.62 L142.00 156.32 L142.50 156.02 L143.00 155.72 L143.50 155.42 L144.00 155.12 L144.50 154.82 L145.00 154.53 L145.50 154.23 L146.00 153.94 L146.50 153.65 L147.00 153.35 L147.50 153.05 L148.00 152.75 L148.50 152.44 L149.00 152.13 L149.50 151.82 L150.00 151.51 L150.50 151.20 L151.00 150.88 L151.50 150.57 L152.00 150.25 L152.50 149.94 L153.00 149.63 L153.50 149.31 L154.00 149.00 L154.50 148.70 L155.00 148.39 L155.50 148.08 L156.00 147.78 L156.50 147.49 L157.00 147.19 L157.50 146.90 L158.00 146.62 L158.50 146.33 L159.00 146.06 L159.50 145.79 L160.00 145.53 L160.50 145.27 L161.00 145.02 L161.50 144.77 L162.00 144.54 L162.50 144.30 L163.00 144.08 L163.50 143.86 L164.00 143.64 L164.50 143.43 L165.00 143.23 L165.50 143.02 L166.00 142.82 L166.50 142.63 L167.00 142.44 L167.50 142.25 L168.00 142.06 L168.50 141.88 L169.00 141.69 L169.50 141.51 L170.00 141.33 L170.50 141.15 L171.00 140.97 L171.50 140.79 L172.00 140.61 L172.50 140.42 L173.00 140.24 L173.50 140.06 L174.00 139.87 L174.50 139.68 L175.00 139.49 L175.50 139.30 L176.00 139.10 L176.50 138.90 L177.00 138.70 L177.50 138.49 L178.00 138.29 L178.50 138.08 L179.00 137.87 L179.50 137.66 L180.00 137.45 L180.50 137.24 L181.00 137.03 L181.50 136.82 L182.00 136.61 L182.50 136.40 L183.00 136.19 L183.50 135.98 L184.00 135.77 L184.50 135.56 L185.00 135.35 L185.50 135.15 L186.00 134.94 L186.50 134.74 L187.00 134.54 L187.50 134.35 L188.00 134.15 L188.50 133.96 L189.00 133.78 L189.50 133.59 L190.00 133.41 L190.50 133.23 L191.00 133.06 L191.50 132.89 L192.00 132.73 L192.50 132.58 L193.00 132.44 L193.50 132.30 L194.00 132.18 L194.50 132.07 L195.00 131.96 L195.50 131.87 L196.00 131.78 L196.50 131.70 L197.00 131.63 L197.50 131.57 L198.00 131.52 L198.50 131.47 L199.00 131.44 L199.50 131.40 L200.00 131.37 L200.50 131.35 L201.00 131.32 L201.50 131.29 L202.00 131.27 L202.50 131.24 L203.00 131.22 L203.50 131.21 L204.00 131.19 L204.50 131.17 L205.00 131.16 L205.50 131.15 L206.00 131.14 L206.50 131.14 L207.00 131.14 L207.50 131.14 L208.00 131.14 L208.50 131.15 L209.00 131.16 L209.50 131.17 L210.00 131.18 L210.50 131.20 L211.00 131.23 L211.50 131.25 L212.00 131.28 L212.50 131.31 L213.00 131.35 L213.50 131.39 L214.00 131.44 L214.50 131.48 L215.00 131.54 L215.50 131.59 L216.00 131.65 L216.50 131.70 L217.00 131.77 L217.50 131.83 L218.00 131.90 L218.50 131.97 L219.00 132.04 L219.50 132.12 L220.00 132.19 L220.50 132.28 L221.00 132.36 L221.50 132.45 L222.00 132.53 L222.50 132.63 L223.00 132.72 L223.50 132.82 L224.00 132.92 L224.50 133.02 L225.00 133.13 L225.50 133.24 L226.00 133.35 L226.50 133.46 L227.00 133.58 L227.50 133.70 L228.00 133.82 L228.50 133.95 L229.00 134.08 L229.50 134.21 L230.00 134.35 L230.50 134.48 L231.00 134.62 L231.50 134.76 L232.00 134.91 L232.50 135.05 L233.00 135.20 L233.50 135.35 L234.00 135.50 L234.50 135.65 L235.00 135.80 L235.50 135.95 L236.00 136.11 L236.50 136.27 L237.00 136.43 L237.50 136.59 L238.00 136.75 L238.50 136.91 L239.00 137.07 L239.50 137.24 L240.00 137.40 L240.50 137.57 L241.00 137.73 L241.50 137.90 L242.00 138.07 L242.50 138.24 L243.00 138.41 L243.50 138.58 L244.00 138.75 L244.50 138.92 L245.00 139.09 L245.50 139.27 L246.00 139.44 L246.50 139.61 L247.00 139.79 L247.50 139.96 L248.00 140.13 L248.50 140.31 L249.00 140.48 L249.50 140.65 L250.00 140.83 L250.50 141.00 L251.00 141.17 L251.50 141.35 L252.00 141.52 L252.50 141.69 L253.00 141.86 L253.50 142.03 L254.00 142.21 L254.50 142.38 L255.00 142.55 L255.50 142.71 L256.00 142.88 L256.50 143.05 L257.00 143.22 L257.50 143.40 L258.00 143.57 L258.50 143.75 L259.00 143.93 L259.50 144.11 L260.00 144.30 L260.50 144.48 L261.00 144.67 L261.50 144.86 L262.00 145.05 L262.50 145.24 L263.00 145.43 L263.50 145.62 L264.00 145.81 L264.50 146.00 L265.00 146.19 L265.50 146.38 L266.00 146.57 L266.50 146.76 L267.00 146.95 L267.50 147.14 L268.00 147.33 L268.50 147.51 L269.00 147.70 L269.50 147.88 L270.00 148.06 L270.50 148.24 L271.00 148.42 L271.50 148.60 L272.00 148.77 L272.50 148.94 L273.00 149.11 L273.50 149.28 L274.00 149.44 L274.50 149.61 L275.00 149.76 L275.50 149.92 L276.00 150.07 L276.50 150.21 L277.00 150.36 L277.50 150.50 L278.00 150.63 L278.50 150.76 L279.00 150.89 L279.50 151.01 L280.00 151.13 L280.50 151.24 L281.00 151.34 L281.50 151.43 L282.00 151.51 L282.50 151.59 L283.00 151.66 L283.50 151.72 L284.00 151.77 L284.50 151.82 L285.00 151.86 L285.50 151.90 L286.00 151.93 L286.50 151.95 L287.00 151.97 L287.50 151.98 L288.00 151.99 L288.50 151.99 L289.00 151.99 L289.50 151.99 L290.00 151.98 L290.50 151.98 L291.00 151.96 L291.50 151.95 L292.00 151.93 L292.50 151.91 L293.00 151.89 L293.50 151.87 L294.00 151.85 L294.50 151.83 L295.00 151.81 L295.50 151.78 L296.00 151.76 L296.50 151.73 L297.00 151.69 L297.50 151.66 L298.00 151.62 L298.50 151.57 L299.00 151.53 L299.50 151.48 L300.00 151.42 L300.50 151.36 L301.00 151.30 L301.50 151.23 L302.00 151.16 L302.50 151.08 L303.00 151.00 L303.50 150.91 L304.00 150.82 L304.50 150.72 L305.00 150.62 L305.50 150.51 L306.00 150.39 L306.50 150.27 L307.00 150.14 L307.50 150.01 L308.00 149.87 L308.50 149.72 L309.00 149.57 L309.50 149.41 L310.00 149.25 L310.50 149.09 L311.00 148.92 L311.50 148.75 L312.00 148.58 L312.50 148.40 L313.00 148.22 L313.50 148.03 L314.00 147.85 L314.50 147.66 L315.00 147.47 L315.50 147.27 L316.00 147.08 L316.50 146.88 L317.00 146.68 L317.50 146.48 L318.00 146.28 L318.50 146.08 L319.00 145.87 L319.50 145.67 L320.00 145.47 L320.50 145.26 L321.00 145.06 L321.50 144.85 L322.00 144.65 L322.50 144.45 L323.00 144.24 L323.50 144.04 L324.00 143.84 L324.50 143.64 L325.00 143.45 L325.50 143.25 L326.00 143.05 L326.50 142.86 L327.00 142.67 L327.50 142.49 L328.00 142.30 L328.50 142.12 L329.00 141.94 L329.50 141.76 L330.00 141.58 L330.50 141.40 L331.00 141.22 L331.50 141.05 L332.00 140.87 L332.50 140.70 L333.00 140.52 L333.50 140.35 L334.00 140.18 L334.50 140.01 L335.00 139.83 L335.50 139.66 L336.00 139.49 L336.50 139.32 L337.00 139.15 L337.50 138.98 L338.00 138.81 L338.50 138.64 L339.00 138.47 L339.50 138.30 L340.00 138.13 L340.50 137.96 L341.00 137.79 L341.50 137.63 L342.00 137.47 L342.50 137.30 L343.00 137.14 L343.50 136.98 L344.00 136.82 L344.50 136.66 L345.00 136.50 L345.50 136.34 L346.00 136.18 L346.50 136.02 L347.00 135.86 L347.50 135.69 L348.00 135.52 L348.50 135.35 L349.00 135.18 L349.50 135.00 L350.00 134.82 L350.50 134.63 L351.00 134.44 L351.50 134.25 L352.00 134.06 L352.50 133.87 L353.00 133.68 L353.50 133.49 L354.00 133.30 L354.50 133.10 L355.00 132.91 L355.50 132.71 L356.00 132.51 L356.50 132.30 L357.00 132.09 L357.50 131.88 L358.00 131.66 L358.50 131.44 L359.00 131.21 L359.50 130.98 L360.00 130.73 L360.50 130.49 L361.00 130.23 L361.50 129.96 L362.00 129.69 L362.50 129.41 L363.00 129.10 L363.50 128.79 L364.00 128.47 L364.50 128.13 L365.00 127.79 L365.50 127.44 L366.00 127.08 L366.50 126.71 L367.00 126.35 L367.50 125.98 L368.00 125.61 L368.50 125.25 L369.00 124.88 L369.50 124.52 L370.00 124.17 L370.50 123.82 L371.00 123.48 L371.50 123.14 L372.00 122.82 L372.50 122.52 L373.00 122.22 L373.50 121.94 L374.00 121.65 L374.50 121.37 L375.00 121.09 L375.50 120.82 L376.00 120.55 L376.50 120.28 L377.00 120.01 L377.50 119.75 L378.00 119.49 L378.50 119.24 L379.00 118.99 L379.50 118.74 L380.00 118.49 L380.50 118.25 L381.00 118.02 L381.50 117.79 L382.00 117.56 L382.50 117.34 L383.00 117.12 L383.50 116.91 L384.00 116.70 L384.50 116.50 L385.00 116.30 L385.50 116.10 L386.00 115.92 L386.50 115.73 L387.00 115.56 L387.50 115.39 L388.00 115.23 L388.50 115.07 L389.00 114.91 L389.50 114.76 L390.00 114.62 L390.50 114.48 L391.00 114.34 L391.50 114.21 L392.00 114.08 L392.50 113.96 L393.00 113.83 L393.50 113.71 L394.00 113.59 L394.50 113.48 L395.00 113.36 L395.50 113.25 L396.00 113.13 L396.50 113.02 L397.00 112.91 L397.50 112.80 L398.00 112.69 L398.50 112.57 L399.00 112.46 L399.50 112.35 L400.00 112.23 L400.50 112.11 L401.00 112.00 L401.50 111.88 L402.00 111.77 L402.50 111.65 L403.00 111.54 L403.50 111.42 L404.00 111.31 L404.50 111.20 L405.00 111.10 L405.50 110.99 L406.00 110.89 L406.50 110.79 L407.00 110.70 L407.50 110.61 L408.00 110.52 L408.50 110.44 L409.00 110.36 L409.50 110.29 L410.00 110.22 L410.50 110.15 L411.00 110.10 L411.50 110.04 L412.00 109.99 L412.50 109.94 L413.00 109.89 L413.50 109.84 L414.00 109.80 L414.50 109.75 L415.00 109.71 L415.50 109.67 L416.00 109.63 L416.50 109.59 L417.00 109.55 L417.50 109.52 L418.00 109.48 L418.50 109.45 L419.00 109.41 L419.50 109.38 L420.00 109.35 L420.50 109.31 L421.00 109.28 L421.50 109.25 L422.00 109.22 L422.50 109.19 L423.00 109.17 L423.50 109.14 L424.00 109.11 L424.50 109.08 L425.00 109.05 L425.50 109.03 L426.00 109.00 L426.50 108.97 L427.00 108.94 L427.50 108.92 L428.00 108.89 L428.50 108.86 L429.00 108.83 L429.50 108.80 L430.00 108.77 L430.50 108.74 L431.00 108.71 L431.50 108.68 L432.00 108.65 L432.50 108.62 L433.00 108.59 L433.50 108.55 L433.65 108.54" stroke="#2a8080" stroke-width="1.3" fill="none"/>
<path d="M2.00 165.60 L2.50 165.68 L3.00 165.90 L3.50 166.14 L4.00 166.39 L4.50 166.66 L5.00 166.92 L5.50 167.19 L6.00 167.44 L6.50 167.69 L7.00 167.91 L7.50 168.12 L8.00 168.29 L8.50 168.43 L9.00 168.53 L9.50 168.59 L10.00 168.60 L10.50 168.57 L11.00 168.52 L11.50 168.45 L12.00 168.36 L12.50 168.25 L13.00 168.12 L13.50 167.99 L14.00 167.83 L14.50 167.67 L15.00 167.51 L15.50 167.33 L16.00 167.15 L16.50 166.97 L17.00 166.78 L17.50 166.60 L18.00 166.42 L18.50 166.25 L19.00 166.08 L19.50 165.92 L20.00 165.77 L20.50 165.63 L21.00 165.51 L21.50 165.40 L22.00 165.31 L22.50 165.24 L23.00 165.19 L23.50 165.16 L24.00 165.14 L24.50 165.14 L25.00 165.15 L25.50 165.18 L26.00 165.21 L26.50 165.26 L27.00 165.32 L27.50 165.40 L28.00 165.48 L28.50 165.57 L29.00 165.67 L29.50 165.78 L30.00 165.90 L30.50 166.03 L31.00 166.16 L31.50 166.30 L32.00 166.45 L32.50 166.61 L33.00 166.77 L33.50 166.94 L34.00 167.12 L34.50 167.32 L35.00 167.53 L35.50 167.75 L36.00 167.99 L36.50 168.23 L37.00 168.48 L37.50 168.74 L38.00 169.00 L38.50 169.28 L39.00 169.56 L39.50 169.84 L40.00 170.13 L40.50 170.42 L41.00 170.71 L41.50 171.00 L42.00 171.30 L42.50 171.60 L43.00 171.89 L43.50 172.19 L44.00 172.49 L44.50 172.78 L45.00 173.08 L45.50 173.39 L46.00 173.69 L46.50 174.00 L47.00 174.32 L47.50 174.63 L48.00 174.96 L48.50 175.29 L49.00 175.62 L49.50 175.96 L50.00 176.31 L50.50 176.66 L51.00 177.03 L51.50 177.40 L52.00 177.78 L52.50 178.17 L53.00 178.57 L53.50 178.98 L54.00 179.45 L54.50 179.98 L55.00 180.57 L55.50 181.19 L56.00 181.83 L56.50 182.49 L57.00 183.13 L57.50 183.76 L58.00 184.36 L58.50 184.90 L59.00 185.39 L59.50 185.80 L60.00 186.14 L60.50 186.44 L61.00 186.68 L61.50 186.89 L62.00 187.05 L62.50 187.17 L63.00 187.26 L63.50 187.31 L64.00 187.33 L64.50 187.32 L65.00 187.28 L65.50 187.16 L66.00 186.97 L66.50 186.72 L67.00 186.44 L67.50 186.14 L68.00 185.84 L68.50 185.56 L69.00 185.32 L69.50 185.12 L70.00 185.00 L70.50 184.92 L71.00 184.85 L71.50 184.79 L72.00 184.74 L72.50 184.69 L73.00 184.65 L73.50 184.62 L74.00 184.59 L74.50 184.57 L75.00 184.55 L75.50 184.54 L76.00 184.53 L76.50 184.53 L77.00 184.53 L77.50 184.54 L78.00 184.55 L78.50 184.57 L79.00 184.59 L79.50 184.61 L80.00 184.64 L80.50 184.67 L81.00 184.70 L81.50 184.73 L82.00 184.77 L82.50 184.81 L83.00 184.86 L83.50 184.90 L84.00 184.95 L84.50 185.00 L85.00 185.05 L85.50 185.11 L86.00 185.16 L86.50 185.22 L87.00 185.28 L87.50 185.34 L88.00 185.40 L88.50 185.47 L89.00 185.53 L89.50 185.60 L90.00 185.66 L90.50 185.73 L91.00 185.80 L91.50 185.87 L92.00 185.94 L92.50 186.01 L93.00 186.08 L93.50 186.15 L94.00 186.22 L94.50 186.29 L95.00 186.36 L95.50 186.42 L96.00 186.49 L96.50 186.56 L97.00 186.63 L97.50 186.69 L98.00 186.76 L98.50 186.82 L99.00 186.88 L99.50 186.94 L100.00 187.00 L100.50 187.06 L101.00 187.12 L101.50 187.19 L102.00 187.26 L102.50 187.33 L103.00 187.41 L103.50 187.48 L104.00 187.56 L104.50 187.64 L105.00 187.73 L105.50 187.81 L106.00 187.90 L106.50 187.98 L107.00 188.07 L107.50 188.16 L108.00 188.25 L108.50 188.34 L109.00 188.43 L109.50 188.52 L110.00 188.61 L110.50 188.70 L111.00 188.79 L111.50 188.87 L112.00 188.96 L112.50 189.05 L113.00 189.13 L113.50 189.21 L114.00 189.30 L114.50 189.37 L115.00 189.45 L115.50 189.53 L116.00 189.60 L116.50 189.67 L117.00 189.73 L117.50 189.80 L118.00 189.86 L118.50 189.91 L119.00 189.97 L119.50 190.02 L120.00 190.06 L120.50 190.10 L121.00 190.14 L121.50 190.17 L122.00 190.19 L122.50 190.21 L123.00 190.23 L123.50 190.24 L124.00 190.24 L124.50 190.24 L125.00 190.24 L125.50 190.22 L126.00 190.20 L126.50 190.17 L127.00 190.14 L127.50 190.10 L128.00 190.05 L128.50 189.99 L129.00 189.93 L129.50 189.85 L130.00 189.76 L130.50 189.66 L131.00 189.55 L131.50 189.43 L132.00 189.30 L132.50 189.16 L133.00 189.01 L133.50 188.84 L134.00 188.66 L134.50 188.47 L135.00 188.26 L135.50 188.04 L136.00 187.81 L136.50 187.56 L137.00 187.30 L137.50 187.03 L138.00 186.73 L138.50 186.43 L139.00 186.10 L139.50 185.77 L140.00 185.41 L140.50 185.04 L141.00 184.65 L141.50 184.25 L142.00 183.82 L142.50 183.38 L143.00 182.91 L143.50 182.38 L144.00 181.78 L144.50 181.13 L145.00 180.43 L145.50 179.68 L146.00 178.89 L146.50 178.06 L147.00 177.21 L147.50 176.34 L148.00 175.45 L148.50 174.55 L149.00 173.65 L149.50 172.74 L150.00 171.85 L150.50 170.96 L151.00 170.10 L151.50 169.26 L152.00 168.45 L152.50 167.68 L153.00 166.95 L153.50 166.27 L154.00 165.61 L154.50 164.97 L155.00 164.34 L155.50 163.74 L156.00 163.15 L156.50 162.59 L157.00 162.05 L157.50 161.53 L158.00 161.05 L158.50 160.59 L159.00 160.16 L159.50 159.77 L160.00 159.41 L160.50 159.09 L161.00 158.80 L161.50 158.54 L162.00 158.31 L162.50 158.09 L163.00 157.89 L163.50 157.70 L164.00 157.53 L164.50 157.37 L165.00 157.22 L165.50 157.08 L166.00 156.95 L166.50 156.83 L167.00 156.72 L167.50 156.61 L168.00 156.51 L168.50 156.40 L169.00 156.30 L169.50 156.20 L170.00 156.10 L170.50 156.00 L171.00 155.89 L171.50 155.78 L172.00 155.66 L172.50 155.54 L173.00 155.40 L173.50 155.26 L174.00 155.10 L174.50 154.93 L175.00 154.75 L175.50 154.55 L176.00 154.34 L176.50 154.10 L177.00 153.85 L177.50 153.56 L178.00 153.26 L178.50 152.93 L179.00 152.59 L179.50 152.23 L180.00 151.85 L180.50 151.46 L181.00 151.06 L181.50 150.66 L182.00 150.24 L182.50 149.82 L183.00 149.40 L183.50 148.98 L184.00 148.56 L184.50 148.14 L185.00 147.73 L185.50 147.32 L186.00 146.91 L186.50 146.48 L187.00 146.05 L187.50 145.61 L188.00 145.16 L188.50 144.70 L189.00 144.24 L189.50 143.77 L190.00 143.30 L190.50 142.83 L191.00 142.36 L191.50 141.89 L192.00 141.43 L192.50 140.96 L193.00 140.51 L193.50 140.06 L194.00 139.61 L194.50 139.18 L195.00 138.76 L195.50 138.34 L196.00 137.95 L196.50 137.56 L197.00 137.19 L197.50 136.84 L198.00 136.51 L198.50 136.19 L199.00 135.90 L199.50 135.64 L200.00 135.42 L200.50 135.25 L201.00 135.10 L201.50 135.00 L202.00 134.92 L202.50 134.87 L203.00 134.85 L203.50 134.85 L204.00 134.87 L204.50 134.90 L205.00 134.95 L205.50 135.00 L206.00 135.07 L206.50 135.13 L207.00 135.20 L207.50 135.27 L208.00 135.33 L208.50 135.39 L209.00 135.45 L209.50 135.50 L210.00 135.56 L210.50 135.62 L211.00 135.68 L211.50 135.74 L212.00 135.81 L212.50 135.88 L213.00 135.95 L213.50 136.03 L214.00 136.12 L214.50 136.21 L215.00 136.31 L215.50 136.42 L216.00 136.54 L216.50 136.67 L217.00 136.81 L217.50 136.96 L218.00 137.13 L218.50 137.31 L219.00 137.50 L219.50 137.71 L220.00 137.93 L220.50 138.17 L221.00 138.43 L221.50 138.71 L222.00 139.00 L222.50 139.36 L223.00 139.84 L223.50 140.40 L224.00 141.05 L224.50 141.76 L225.00 142.51 L225.50 143.30 L226.00 144.10 L226.50 144.90 L227.00 145.69 L227.50 146.44 L228.00 147.15 L228.50 147.79 L229.00 148.36 L229.50 148.84 L230.00 149.20 L230.50 149.50 L231.00 149.80 L231.50 150.10 L232.00 150.39 L232.50 150.68 L233.00 150.96 L233.50 151.25 L234.00 151.52 L234.50 151.80 L235.00 152.07 L235.50 152.34 L236.00 152.60 L236.50 152.86 L237.00 153.12 L237.50 153.37 L238.00 153.62 L238.50 153.86 L239.00 154.10 L239.50 154.34 L240.00 154.57 L240.50 154.80 L241.00 155.02 L241.50 155.24 L242.00 155.46 L242.50 155.67 L243.00 155.88 L243.50 156.08 L244.00 156.28 L244.50 156.48 L245.00 156.67 L245.50 156.85 L246.00 157.04 L246.50 157.21 L247.00 157.39 L247.50 157.55 L248.00 157.72 L248.50 157.88 L249.00 158.03 L249.50 158.18 L250.00 158.33 L250.50 158.47 L251.00 158.61 L251.50 158.74 L252.00 158.86 L252.50 158.99 L253.00 159.10 L253.50 159.21 L254.00 159.32 L254.50 159.42 L255.00 159.52 L255.50 159.61 L256.00 159.70 L256.50 159.77 L257.00 159.80 L257.50 159.80 L258.00 159.77 L258.50 159.72 L259.00 159.64 L259.50 159.53 L260.00 159.40 L260.50 159.26 L261.00 159.09 L261.50 158.91 L262.00 158.72 L262.50 158.52 L263.00 158.31 L263.50 158.09 L264.00 157.86 L264.50 157.64 L265.00 157.41 L265.50 157.18 L266.00 156.96 L266.50 156.74 L267.00 156.53 L267.50 156.33 L268.00 156.14 L268.50 155.96 L269.00 155.80 L269.50 155.64 L270.00 155.48 L270.50 155.30 L271.00 155.12 L271.50 154.93 L272.00 154.74 L272.50 154.55 L273.00 154.35 L273.50 154.15 L274.00 153.95 L274.50 153.76 L275.00 153.56 L275.50 153.38 L276.00 153.19 L276.50 153.01 L277.00 152.84 L277.50 152.68 L278.00 152.53 L278.50 152.38 L279.00 152.25 L279.50 152.14 L280.00 152.04 L280.50 151.95 L281.00 151.88 L281.50 151.83 L282.00 151.80 L282.50 151.78 L283.00 151.77 L283.50 151.77 L284.00 151.77 L284.50 151.78 L285.00 151.80 L285.50 151.82 L286.00 151.85 L286.50 151.88 L287.00 151.92 L287.50 151.97 L288.00 152.02 L288.50 152.07 L289.00 152.13 L289.50 152.19 L290.00 152.26 L290.50 152.33 L291.00 152.40 L291.50 152.48 L292.00 152.56 L292.50 152.64 L293.00 152.73 L293.50 152.81 L294.00 152.90 L294.50 152.99 L295.00 153.09 L295.50 153.18 L296.00 153.27 L296.50 153.37 L297.00 153.47 L297.50 153.56 L298.00 153.66 L298.50 153.75 L299.00 153.85 L299.50 153.94 L300.00 154.04 L300.50 154.13 L301.00 154.22 L301.50 154.31 L302.00 154.40 L302.50 154.49 L303.00 154.60 L303.50 154.72 L304.00 154.85 L304.50 154.99 L305.00 155.13 L305.50 155.29 L306.00 155.44 L306.50 155.61 L307.00 155.77 L307.50 155.94 L308.00 156.10 L308.50 156.27 L309.00 156.43 L309.50 156.59 L310.00 156.74 L310.50 156.89 L311.00 157.03 L311.50 157.16 L312.00 157.28 L312.50 157.38 L313.00 157.48 L313.50 157.56 L314.00 157.62 L314.50 157.67 L315.00 157.70 L315.50 157.71 L316.00 157.70 L316.50 157.67 L317.00 157.63 L317.50 157.58 L318.00 157.51 L318.50 157.44 L319.00 157.35 L319.50 157.25 L320.00 157.14 L320.50 157.03 L321.00 156.90 L321.50 156.77 L322.00 156.63 L322.50 156.48 L323.00 156.33 L323.50 156.17 L324.00 156.00 L324.50 155.84 L325.00 155.66 L325.50 155.49 L326.00 155.31 L326.50 155.12 L327.00 154.94 L327.50 154.75 L328.00 154.56 L328.50 154.38 L329.00 154.19 L329.50 154.00 L330.00 153.82 L330.50 153.63 L331.00 153.45 L331.50 153.27 L332.00 153.10 L332.50 152.91 L333.00 152.70 L333.50 152.47 L334.00 152.23 L334.50 151.97 L335.00 151.70 L335.50 151.43 L336.00 151.15 L336.50 150.88 L337.00 150.62 L337.50 150.37 L338.00 150.13 L338.50 149.91 L339.00 149.71 L339.50 149.54 L340.00 149.40 L340.50 149.28 L341.00 149.16 L341.50 149.06 L342.00 148.96 L342.50 148.86 L343.00 148.77 L343.50 148.69 L344.00 148.61 L344.50 148.53 L345.00 148.46 L345.50 148.39 L346.00 148.33 L346.50 148.27 L347.00 148.21 L347.50 148.15 L348.00 148.09 L348.50 148.04 L349.00 147.99 L349.50 147.93 L350.00 147.88 L350.50 147.83 L351.00 147.77 L351.50 147.72 L352.00 147.66 L352.50 147.60 L353.00 147.54 L353.50 147.48 L354.00 147.41 L354.50 147.34 L355.00 147.26 L355.50 147.19 L356.00 147.10 L356.50 147.01 L357.00 146.92 L357.50 146.82 L358.00 146.72 L358.50 146.60 L359.00 146.48 L359.50 146.36 L360.00 146.22 L360.50 146.08 L361.00 145.93 L361.50 145.77 L362.00 145.60 L362.50 145.41 L363.00 145.21 L363.50 144.98 L364.00 144.73 L364.50 144.46 L365.00 144.17 L365.50 143.87 L366.00 143.55 L366.50 143.21 L367.00 142.87 L367.50 142.50 L368.00 142.13 L368.50 141.74 L369.00 141.34 L369.50 140.93 L370.00 140.52 L370.50 140.10 L371.00 139.67 L371.50 139.23 L372.00 138.79 L372.50 138.35 L373.00 137.90 L373.50 137.44 L374.00 136.95 L374.50 136.44 L375.00 135.91 L375.50 135.36 L376.00 134.80 L376.50 134.22 L377.00 133.64 L377.50 133.05 L378.00 132.45 L378.50 131.85 L379.00 131.25 L379.50 130.66 L380.00 130.07 L380.50 129.49 L381.00 128.92 L381.50 128.37 L382.00 127.83 L382.50 127.31 L383.00 126.82 L383.50 126.34 L384.00 125.90 L384.50 125.48 L385.00 125.07 L385.50 124.67 L386.00 124.29 L386.50 123.92 L387.00 123.56 L387.50 123.22 L388.00 122.89 L388.50 122.56 L389.00 122.25 L389.50 121.95 L390.00 121.66 L390.50 121.37 L391.00 121.10 L391.50 120.84 L392.00 120.58 L392.50 120.33 L393.00 120.09 L393.50 119.85 L394.00 119.62 L394.50 119.40 L395.00 119.18 L395.50 118.97 L396.00 118.76 L396.50 118.55 L397.00 118.35 L397.50 118.15 L398.00 117.96 L398.50 117.77 L399.00 117.58 L399.50 117.40 L400.00 117.21 L400.50 117.03 L401.00 116.86 L401.50 116.68 L402.00 116.51 L402.50 116.34 L403.00 116.17 L403.50 116.00 L404.00 115.84 L404.50 115.67 L405.00 115.51 L405.50 115.34 L406.00 115.18 L406.50 115.02 L407.00 114.86 L407.50 114.70 L408.00 114.53 L408.50 114.37 L409.00 114.21 L409.50 114.05 L410.00 113.88 L410.50 113.72 L411.00 113.55 L411.50 113.39 L412.00 113.22 L412.50 113.05 L413.00 112.88 L413.50 112.70 L414.00 112.53 L414.50 112.35 L415.00 112.17 L415.50 111.99 L416.00 111.80 L416.50 111.61 L417.00 111.42 L417.50 111.23 L418.00 111.04 L418.50 110.84 L419.00 110.65 L419.50 110.45 L420.00 110.26 L420.50 110.06 L421.00 109.86 L421.50 109.66 L422.00 109.46 L422.50 109.25 L423.00 109.05 L423.50 108.85 L424.00 108.65 L424.50 108.44 L425.00 108.24 L425.50 108.03 L426.00 107.83 L426.50 107.62 L427.00 107.42 L427.50 107.21 L428.00 107.01 L428.50 106.80 L429.00 106.59 L429.50 106.39 L430.00 106.18 L430.50 105.98 L431.00 105.78 L431.50 105.57 L432.00 105.37 L432.50 105.16 L433.00 104.96 L433.50 104.76 L433.65 104.70" stroke="#36a0a6" stroke-width="1.3" fill="none"/>
<path d="M2.00 173.77 L2.50 173.78 L3.00 173.81 L3.50 173.84 L4.00 173.88 L4.50 173.91 L5.00 173.94 L5.50 173.98 L6.00 174.02 L6.50 174.05 L7.00 174.09 L7.50 174.12 L8.00 174.16 L8.50 174.20 L9.00 174.23 L9.50 174.26 L10.00 174.30 L10.50 174.33 L11.00 174.36 L11.50 174.38 L12.00 174.41 L12.50 174.43 L13.00 174.46 L13.50 174.48 L14.00 174.49 L14.50 174.51 L15.00 174.52 L15.50 174.52 L16.00 174.52 L16.50 174.52 L17.00 174.51 L17.50 174.49 L18.00 174.47 L18.50 174.45 L19.00 174.42 L19.50 174.40 L20.00 174.36 L20.50 174.33 L21.00 174.30 L21.50 174.27 L22.00 174.23 L22.50 174.20 L23.00 174.17 L23.50 174.14 L24.00 174.12 L24.50 174.10 L25.00 174.08 L25.50 174.06 L26.00 174.06 L26.50 174.05 L27.00 174.06 L27.50 174.07 L28.00 174.08 L28.50 174.11 L29.00 174.15 L29.50 174.19 L30.00 174.25 L30.50 174.33 L31.00 174.41 L31.50 174.51 L32.00 174.62 L32.50 174.73 L33.00 174.86 L33.50 174.99 L34.00 175.12 L34.50 175.26 L35.00 175.40 L35.50 175.55 L36.00 175.70 L36.50 175.85 L37.00 175.99 L37.50 176.14 L38.00 176.28 L38.50 176.42 L39.00 176.56 L39.50 176.69 L40.00 176.83 L40.50 176.96 L41.00 177.10 L41.50 177.24 L42.00 177.37 L42.50 177.51 L43.00 177.65 L43.50 177.80 L44.00 177.94 L44.50 178.09 L45.00 178.24 L45.50 178.40 L46.00 178.56 L46.50 178.73 L47.00 178.90 L47.50 179.07 L48.00 179.25 L48.50 179.44 L49.00 179.64 L49.50 179.84 L50.00 180.05 L50.50 180.29 L51.00 180.56 L51.50 180.84 L52.00 181.14 L52.50 181.45 L53.00 181.76 L53.50 182.08 L54.00 182.40 L54.50 182.72 L55.00 183.03 L55.50 183.32 L56.00 183.61 L56.50 183.87 L57.00 184.11 L57.50 184.33 L58.00 184.55 L58.50 184.76 L59.00 184.96 L59.50 185.17 L60.00 185.37 L60.50 185.56 L61.00 185.75 L61.50 185.94 L62.00 186.13 L62.50 186.31 L63.00 186.49 L63.50 186.67 L64.00 186.84 L64.50 187.02 L65.00 187.19 L65.50 187.35 L66.00 187.52 L66.50 187.69 L67.00 187.85 L67.50 188.01 L68.00 188.17 L68.50 188.33 L69.00 188.49 L69.50 188.65 L70.00 188.81 L70.50 188.97 L71.00 189.12 L71.50 189.28 L72.00 189.42 L72.50 189.56 L73.00 189.69 L73.50 189.81 L74.00 189.91 L74.50 189.99 L75.00 190.06 L75.50 190.10 L76.00 190.13 L76.50 190.13 L77.00 190.13 L77.50 190.12 L78.00 190.10 L78.50 190.08 L79.00 190.06 L79.50 190.03 L80.00 189.99 L80.50 189.95 L81.00 189.91 L81.50 189.86 L82.00 189.81 L82.50 189.76 L83.00 189.71 L83.50 189.65 L84.00 189.59 L84.50 189.53 L85.00 189.47 L85.50 189.40 L86.00 189.34 L86.50 189.28 L87.00 189.21 L87.50 189.15 L88.00 189.09 L88.50 189.03 L89.00 188.97 L89.50 188.91 L90.00 188.84 L90.50 188.78 L91.00 188.72 L91.50 188.65 L92.00 188.58 L92.50 188.51 L93.00 188.44 L93.50 188.37 L94.00 188.30 L94.50 188.22 L95.00 188.14 L95.50 188.06 L96.00 187.98 L96.50 187.90 L97.00 187.81 L97.50 187.72 L98.00 187.62 L98.50 187.52 L99.00 187.42 L99.50 187.32 L100.00 187.21 L100.50 187.10 L101.00 186.99 L101.50 186.87 L102.00 186.76 L102.50 186.64 L103.00 186.52 L103.50 186.40 L104.00 186.28 L104.50 186.16 L105.00 186.03 L105.50 185.90 L106.00 185.78 L106.50 185.65 L107.00 185.51 L107.50 185.38 L108.00 185.24 L108.50 185.11 L109.00 184.97 L109.50 184.83 L110.00 184.69 L110.50 184.54 L111.00 184.40 L111.50 184.25 L112.00 184.10 L112.50 183.95 L113.00 183.80 L113.50 183.64 L114.00 183.49 L114.50 183.33 L115.00 183.17 L115.50 183.01 L116.00 182.85 L116.50 182.69 L117.00 182.52 L117.50 182.36 L118.00 182.20 L118.50 182.03 L119.00 181.87 L119.50 181.70 L120.00 181.53 L120.50 181.36 L121.00 181.19 L121.50 181.02 L122.00 180.84 L122.50 180.66 L123.00 180.48 L123.50 180.30 L124.00 180.12 L124.50 179.93 L125.00 179.74 L125.50 179.55 L126.00 179.35 L126.50 179.15 L127.00 178.95 L127.50 178.75 L128.00 178.54 L128.50 178.32 L129.00 178.11 L129.50 177.89 L130.00 177.66 L130.50 177.44 L131.00 177.20 L131.50 176.96 L132.00 176.72 L132.50 176.47 L133.00 176.22 L133.50 175.96 L134.00 175.70 L134.50 175.44 L135.00 175.17 L135.50 174.90 L136.00 174.62 L136.50 174.35 L137.00 174.07 L137.50 173.78 L138.00 173.50 L138.50 173.21 L139.00 172.93 L139.50 172.64 L140.00 172.35 L140.50 172.06 L141.00 171.77 L141.50 171.48 L142.00 171.19 L142.50 170.89 L143.00 170.60 L143.50 170.31 L144.00 170.02 L144.50 169.74 L145.00 169.45 L145.50 169.16 L146.00 168.88 L146.50 168.60 L147.00 168.31 L147.50 168.02 L148.00 167.72 L148.50 167.43 L149.00 167.13 L149.50 166.83 L150.00 166.53 L150.50 166.22 L151.00 165.92 L151.50 165.61 L152.00 165.31 L152.50 165.00 L153.00 164.70 L153.50 164.40 L154.00 164.10 L154.50 163.80 L155.00 163.50 L155.50 163.21 L156.00 162.91 L156.50 162.63 L157.00 162.34 L157.50 162.06 L158.00 161.78 L158.50 161.51 L159.00 161.24 L159.50 160.98 L160.00 160.73 L160.50 160.48 L161.00 160.23 L161.50 160.00 L162.00 159.77 L162.50 159.54 L163.00 159.32 L163.50 159.11 L164.00 158.90 L164.50 158.70 L165.00 158.50 L165.50 158.30 L166.00 158.11 L166.50 157.92 L167.00 157.73 L167.50 157.55 L168.00 157.37 L168.50 157.19 L169.00 157.01 L169.50 156.84 L170.00 156.66 L170.50 156.48 L171.00 156.31 L171.50 156.13 L172.00 155.96 L172.50 155.78 L173.00 155.61 L173.50 155.43 L174.00 155.25 L174.50 155.06 L175.00 154.88 L175.50 154.69 L176.00 154.50 L176.50 154.31 L177.00 154.11 L177.50 153.91 L178.00 153.71 L178.50 153.51 L179.00 153.31 L179.50 153.11 L180.00 152.90 L180.50 152.70 L181.00 152.49 L181.50 152.29 L182.00 152.08 L182.50 151.88 L183.00 151.68 L183.50 151.47 L184.00 151.27 L184.50 151.07 L185.00 150.87 L185.50 150.67 L186.00 150.47 L186.50 150.28 L187.00 150.08 L187.50 149.89 L188.00 149.71 L188.50 149.52 L189.00 149.34 L189.50 149.16 L190.00 148.99 L190.50 148.81 L191.00 148.65 L191.50 148.48 L192.00 148.33 L192.50 148.18 L193.00 148.04 L193.50 147.91 L194.00 147.79 L194.50 147.68 L195.00 147.58 L195.50 147.49 L196.00 147.40 L196.50 147.33 L197.00 147.26 L197.50 147.20 L198.00 147.15 L198.50 147.11 L199.00 147.07 L199.50 147.04 L200.00 147.01 L200.50 146.98 L201.00 146.96 L201.50 146.93 L202.00 146.91 L202.50 146.89 L203.00 146.87 L203.50 146.85 L204.00 146.83 L204.50 146.82 L205.00 146.81 L205.50 146.80 L206.00 146.79 L206.50 146.79 L207.00 146.78 L207.50 146.78 L208.00 146.79 L208.50 146.79 L209.00 146.80 L209.50 146.81 L210.00 146.83 L210.50 146.85 L211.00 146.87 L211.50 146.89 L212.00 146.92 L212.50 146.95 L213.00 146.99 L213.50 147.03 L214.00 147.07 L214.50 147.12 L215.00 147.17 L215.50 147.22 L216.00 147.28 L216.50 147.33 L217.00 147.39 L217.50 147.46 L218.00 147.52 L218.50 147.59 L219.00 147.66 L219.50 147.73 L220.00 147.81 L220.50 147.89 L221.00 147.97 L221.50 148.05 L222.00 148.14 L222.50 148.23 L223.00 148.32 L223.50 148.41 L224.00 148.51 L224.50 148.61 L225.00 148.71 L225.50 148.82 L226.00 148.93 L226.50 149.04 L227.00 149.15 L227.50 149.27 L228.00 149.39 L228.50 149.51 L229.00 149.63 L229.50 149.76 L230.00 149.89 L230.50 150.03 L231.00 150.16 L231.50 150.30 L232.00 150.44 L232.50 150.58 L233.00 150.72 L233.50 150.86 L234.00 151.01 L234.50 151.15 L235.00 151.30 L235.50 151.45 L236.00 151.60 L236.50 151.75 L237.00 151.91 L237.50 152.06 L238.00 152.22 L238.50 152.38 L239.00 152.53 L239.50 152.69 L240.00 152.85 L240.50 153.01 L241.00 153.18 L241.50 153.34 L242.00 153.50 L242.50 153.67 L243.00 153.83 L243.50 154.00 L244.00 154.16 L244.50 154.33 L245.00 154.49 L245.50 154.66 L246.00 154.83 L246.50 155.00 L247.00 155.16 L247.50 155.33 L248.00 155.50 L248.50 155.67 L249.00 155.84 L249.50 156.01 L250.00 156.17 L250.50 156.34 L251.00 156.51 L251.50 156.68 L252.00 156.84 L252.50 157.01 L253.00 157.18 L253.50 157.34 L254.00 157.51 L254.50 157.67 L255.00 157.84 L255.50 158.00 L256.00 158.17 L256.50 158.33 L257.00 158.50 L257.50 158.66 L258.00 158.84 L258.50 159.01 L259.00 159.18 L259.50 159.36 L260.00 159.54 L260.50 159.72 L261.00 159.90 L261.50 160.08 L262.00 160.26 L262.50 160.45 L263.00 160.63 L263.50 160.81 L264.00 161.00 L264.50 161.18 L265.00 161.37 L265.50 161.55 L266.00 161.74 L266.50 161.92 L267.00 162.11 L267.50 162.29 L268.00 162.47 L268.50 162.65 L269.00 162.83 L269.50 163.01 L270.00 163.19 L270.50 163.36 L271.00 163.53 L271.50 163.70 L272.00 163.87 L272.50 164.04 L273.00 164.20 L273.50 164.37 L274.00 164.52 L274.50 164.68 L275.00 164.83 L275.50 164.98 L276.00 165.13 L276.50 165.27 L277.00 165.41 L277.50 165.54 L278.00 165.68 L278.50 165.80 L279.00 165.92 L279.50 166.04 L280.00 166.16 L280.50 166.26 L281.00 166.36 L281.50 166.45 L282.00 166.53 L282.50 166.60 L283.00 166.67 L283.50 166.73 L284.00 166.78 L284.50 166.83 L285.00 166.87 L285.50 166.90 L286.00 166.93 L286.50 166.95 L287.00 166.97 L287.50 166.98 L288.00 166.99 L288.50 166.99 L289.00 167.00 L289.50 166.99 L290.00 166.99 L290.50 166.98 L291.00 166.97 L291.50 166.95 L292.00 166.93 L292.50 166.92 L293.00 166.90 L293.50 166.88 L294.00 166.86 L294.50 166.84 L295.00 166.81 L295.50 166.79 L296.00 166.76 L296.50 166.74 L297.00 166.70 L297.50 166.67 L298.00 166.63 L298.50 166.59 L299.00 166.54 L299.50 166.49 L300.00 166.44 L300.50 166.38 L301.00 166.32 L301.50 166.26 L302.00 166.19 L302.50 166.11 L303.00 166.03 L303.50 165.95 L304.00 165.86 L304.50 165.76 L305.00 165.66 L305.50 165.55 L306.00 165.44 L306.50 165.32 L307.00 165.20 L307.50 165.07 L308.00 164.93 L308.50 164.79 L309.00 164.64 L309.50 164.49 L310.00 164.34 L310.50 164.18 L311.00 164.02 L311.50 163.85 L312.00 163.68 L312.50 163.51 L313.00 163.34 L313.50 163.16 L314.00 162.98 L314.50 162.79 L315.00 162.61 L315.50 162.42 L316.00 162.23 L316.50 162.04 L317.00 161.85 L317.50 161.65 L318.00 161.46 L318.50 161.26 L319.00 161.07 L319.50 160.87 L320.00 160.67 L320.50 160.47 L321.00 160.27 L321.50 160.08 L322.00 159.88 L322.50 159.68 L323.00 159.48 L323.50 159.29 L324.00 159.09 L324.50 158.90 L325.00 158.71 L325.50 158.52 L326.00 158.33 L326.50 158.15 L327.00 157.96 L327.50 157.78 L328.00 157.60 L328.50 157.42 L329.00 157.25 L329.50 157.07 L330.00 156.90 L330.50 156.73 L331.00 156.56 L331.50 156.39 L332.00 156.22 L332.50 156.05 L333.00 155.88 L333.50 155.71 L334.00 155.54 L334.50 155.38 L335.00 155.21 L335.50 155.05 L336.00 154.88 L336.50 154.71 L337.00 154.55 L337.50 154.38 L338.00 154.22 L338.50 154.05 L339.00 153.89 L339.50 153.72 L340.00 153.56 L340.50 153.39 L341.00 153.23 L341.50 153.07 L342.00 152.92 L342.50 152.76 L343.00 152.60 L343.50 152.45 L344.00 152.29 L344.50 152.14 L345.00 151.98 L345.50 151.83 L346.00 151.67 L346.50 151.52 L347.00 151.36 L347.50 151.20 L348.00 151.03 L348.50 150.87 L349.00 150.70 L349.50 150.53 L350.00 150.35 L350.50 150.17 L351.00 149.99 L351.50 149.80 L352.00 149.62 L352.50 149.43 L353.00 149.25 L353.50 149.06 L354.00 148.88 L354.50 148.69 L355.00 148.50 L355.50 148.31 L356.00 148.11 L356.50 147.91 L357.00 147.71 L357.50 147.50 L358.00 147.29 L358.50 147.08 L359.00 146.86 L359.50 146.63 L360.00 146.39 L360.50 146.15 L361.00 145.90 L361.50 145.65 L362.00 145.38 L362.50 145.10 L363.00 144.81 L363.50 144.51 L364.00 144.20 L364.50 143.87 L365.00 143.54 L365.50 143.20 L366.00 142.85 L366.50 142.50 L367.00 142.14 L367.50 141.79 L368.00 141.43 L368.50 141.07 L369.00 140.72 L369.50 140.37 L370.00 140.03 L370.50 139.69 L371.00 139.36 L371.50 139.04 L372.00 138.73 L372.50 138.43 L373.00 138.14 L373.50 137.87 L374.00 137.59 L374.50 137.32 L375.00 137.05 L375.50 136.78 L376.00 136.52 L376.50 136.26 L377.00 136.00 L377.50 135.75 L378.00 135.50 L378.50 135.25 L379.00 135.01 L379.50 134.77 L380.00 134.53 L380.50 134.30 L381.00 134.07 L381.50 133.85 L382.00 133.63 L382.50 133.41 L383.00 133.20 L383.50 132.99 L384.00 132.79 L384.50 132.59 L385.00 132.40 L385.50 132.22 L386.00 132.03 L386.50 131.86 L387.00 131.69 L387.50 131.52 L388.00 131.36 L388.50 131.21 L389.00 131.06 L389.50 130.92 L390.00 130.78 L390.50 130.64 L391.00 130.51 L391.50 130.38 L392.00 130.26 L392.50 130.13 L393.00 130.01 L393.50 129.90 L394.00 129.78 L394.50 129.67 L395.00 129.56 L395.50 129.45 L396.00 129.34 L396.50 129.23 L397.00 129.12 L397.50 129.01 L398.00 128.90 L398.50 128.79 L399.00 128.68 L399.50 128.57 L400.00 128.46 L400.50 128.35 L401.00 128.24 L401.50 128.12 L402.00 128.01 L402.50 127.90 L403.00 127.79 L403.50 127.68 L404.00 127.57 L404.50 127.47 L405.00 127.36 L405.50 127.26 L406.00 127.16 L406.50 127.07 L407.00 126.98 L407.50 126.89 L408.00 126.80 L408.50 126.72 L409.00 126.65 L409.50 126.58 L410.00 126.51 L410.50 126.45 L411.00 126.39 L411.50 126.34 L412.00 126.29 L412.50 126.24 L413.00 126.19 L413.50 126.15 L414.00 126.10 L414.50 126.06 L415.00 126.02 L415.50 125.98 L416.00 125.94 L416.50 125.90 L417.00 125.87 L417.50 125.83 L418.00 125.80 L418.50 125.76 L419.00 125.73 L419.50 125.70 L420.00 125.67 L420.50 125.64 L421.00 125.61 L421.50 125.58 L422.00 125.55 L422.50 125.52 L423.00 125.49 L423.50 125.46 L424.00 125.44 L424.50 125.41 L425.00 125.38 L425.50 125.36 L426.00 125.33 L426.50 125.30 L427.00 125.28 L427.50 125.25 L428.00 125.22 L428.50 125.20 L429.00 125.17 L429.50 125.14 L430.00 125.11 L430.50 125.08 L431.00 125.05 L431.50 125.02 L432.00 124.99 L432.50 124.96 L433.00 124.93 L433.50 124.90 L433.65 124.89" stroke="#2a8a8a" stroke-width="1.3" fill="none"/>
<rect x="2" y="154" width="1" height="8" fill="#f2f2f2"/>
<rect x="1.5" y="156.5" width="2" height="3" fill="#14148c" stroke="#e8ecff" stroke-width="1"/>
<rect x="6" y="153" width="1" height="5" fill="#f2f2f2"/>
<rect x="5" y="155" width="3" height="2" fill="#f6f6f6"/>
<rect x="10" y="153" width="1" height="7" fill="#f2f2f2"/>
<rect x="9" y="155" width="3" height="3" fill="#f6f6f6"/>
<rect x="13" y="147" width="1" height="6" fill="#f2f2f2"/>
<rect x="12" y="150" width="3" height="3" fill="#f6f6f6"/>
<rect x="17" y="148" width="1" height="5" fill="#f2f2f2"/>
<rect x="16" y="151" width="3" height="2" fill="#f6f6f6"/>
<rect x="21" y="149" width="1" height="7" fill="#f2f2f2"/>
<rect x="20.5" y="150.5" width="2" height="5" fill="#14148c" stroke="#e8ecff" stroke-width="1"/>
<rect x="24" y="155" width="1" height="4" fill="#f2f2f2"/>
<rect x="23" y="156" width="3" height="2" fill="#f6f6f6"/>
<rect x="28" y="156" width="1" height="2" fill="#f2f2f2"/>
<rect x="27" y="156" width="3" height="2" fill="#f6f6f6"/>
<rect x="32" y="153" width="1" height="7" fill="#f2f2f2"/>
<rect x="31.5" y="154.5" width="2" height="5" fill="#14148c" stroke="#e8ecff" stroke-width="1"/>
<rect x="35" y="156" width="1" height="7" fill="#f2f2f2"/>
<rect x="34" y="158" width="3" height="2" fill="#f6f6f6"/>
<rect x="39" y="160" width="1" height="11" fill="#f2f2f2"/>
<rect x="38.5" y="162.5" width="2" height="6" fill="#14148c" stroke="#e8ecff" stroke-width="1"/>
<rect x="43" y="169" width="1" height="5" fill="#f2f2f2"/>
<rect x="42" y="171" width="3" height="2" fill="#f6f6f6"/>
<rect x="46" y="170" width="1" height="6" fill="#f2f2f2"/>
<rect x="45.5" y="171.5" width="2" height="4" fill="#14148c" stroke="#e8ecff" stroke-width="1"/>
<rect x="50" y="172" width="1" height="5" fill="#f2f2f2"/>
<rect x="49" y="173" width="3" height="3" fill="#f6f6f6"/>
<rect x="54" y="173" width="1" height="7" fill="#f2f2f2"/>
<rect x="53" y="176" width="3" height="2" fill="#f6f6f6"/>
<rect x="57" y="181" width="1" height="11" fill="#f2f2f2"/>
<rect x="56.5" y="182.5" width="2" height="9" fill="#14148c" stroke="#e8ecff" stroke-width="1"/>
<rect x="61" y="177" width="1" height="12" fill="#f2f2f2"/>
<rect x="60" y="178" width="3" height="8" fill="#f6f6f6"/>
<rect x="64" y="167" width="1" height="16" fill="#f2f2f2"/>
<rect x="63" y="167" width="3" height="14" fill="#f6f6f6"/>
<rect x="68" y="162" width="1" height="9" fill="#f2f2f2"/>
<rect x="67" y="165" width="3" height="4" fill="#f6f6f6"/>
<rect x="72" y="147" width="1" height="14" fill="#f2f2f2"/>
<rect x="71" y="147" width="3" height="13" fill="#f6f6f6"/>
<rect x="75" y="144" width="1" height="8" fill="#f2f2f2"/>
<rect x="74" y="146" width="3" height="2" fill="#f6f6f6"/>
<rect x="79" y="136" width="1" height="7" fill="#f2f2f2"/>
<rect x="78" y="137" width="3" height="3" fill="#f6f6f6"/>
<rect x="83" y="138" width="1" height="5" fill="#f2f2f2"/>
<rect x="82" y="139" width="3" height="4" fill="#f6f6f6"/>
<rect x="86" y="143" width="1" height="4" fill="#f2f2f2"/>
<rect x="85.5" y="144.5" width="2" height="1" fill="#14148c" stroke="#e8ecff" stroke-width="1"/>
<rect x="90" y="147" width="1" height="7" fill="#f2f2f2"/>
<rect x="89.5" y="148.5" width="2" height="5" fill="#14148c" stroke="#e8ecff" stroke-width="1"/>
<rect x="94" y="141" width="1" height="9" fill="#f2f2f2"/>
<rect x="93" y="141" width="3" height="5" fill="#f6f6f6"/>
<rect x="97" y="139" width="1" height="10" fill="#f2f2f2"/>
<rect x="96" y="140" width="3" height="2" fill="#f6f6f6"/>
<rect x="101" y="141" width="1" height="3" fill="#f2f2f2"/>
<rect x="100" y="142" width="3" height="2" fill="#f6f6f6"/>
<rect x="105" y="130" width="1" height="13" fill="#f2f2f2"/>
<rect x="104" y="136" width="3" height="2" fill="#f6f6f6"/>
<rect x="108" y="131" width="1" height="9" fill="#f2f2f2"/>
<rect x="107.5" y="136.5" width="2" height="1" fill="#14148c" stroke="#e8ecff" stroke-width="1"/>
<rect x="112" y="138" width="1" height="9" fill="#f2f2f2"/>
<rect x="111" y="139" width="3" height="2" fill="#f6f6f6"/>
<rect x="116" y="135" width="1" height="3" fill="#f2f2f2"/>
<rect x="115" y="136" width="3" height="2" fill="#f6f6f6"/>
<rect x="119" y="126" width="1" height="8" fill="#f2f2f2"/>
<rect x="118" y="127" width="3" height="7" fill="#f6f6f6"/>
<rect x="123" y="118" width="1" height="9" fill="#f2f2f2"/>
<rect x="122" y="119" width="3" height="8" fill="#f6f6f6"/>
<rect x="127" y="118" width="1" height="5" fill="#f2f2f2"/>
<rect x="126" y="120" width="3" height="2" fill="#f6f6f6"/>
<rect x="130" y="114" width="1" height="8" fill="#f2f2f2"/>
<rect x="129" y="115" width="3" height="6" fill="#f6f6f6"/>
<rect x="134" y="113" width="1" height="4" fill="#f2f2f2"/>
<rect x="133" y="114" width="3" height="3" fill="#f6f6f6"/>
<rect x="137" y="111" width="1" height="8" fill="#f2f2f2"/>
<rect x="136" y="111" width="3" height="8" fill="#f6f6f6"/>
<rect x="141" y="113" width="1" height="4" fill="#f2f2f2"/>
<rect x="140" y="114" width="3" height="2" fill="#f6f6f6"/>
<rect x="145" y="107" width="1" height="9" fill="#f2f2f2"/>
<rect x="144.5" y="110.5" width="2" height="1" fill="#14148c" stroke="#e8ecff" stroke-width="1"/>
<rect x="148" y="108" width="1" height="5" fill="#f2f2f2"/>
<rect x="147" y="110" width="3" height="2" fill="#f6f6f6"/>
<rect x="152" y="108" width="1" height="8" fill="#f2f2f2"/>
<rect x="151.5" y="110.5" width="2" height="1" fill="#14148c" stroke="#e8ecff" stroke-width="1"/>
<rect x="156" y="106" width="1" height="7" fill="#f2f2f2"/>
<rect x="155" y="107" width="3" height="3" fill="#f6f6f6"/>
<rect x="159" y="101" width="1" height="8" fill="#f2f2f2"/>
<rect x="158" y="103" width="3" height="5" fill="#f6f6f6"/>
<rect x="163" y="104" width="1" height="7" fill="#f2f2f2"/>
<rect x="162.5" y="107.5" width="2" height="2" fill="#14148c" stroke="#e8ecff" stroke-width="1"/>
<rect x="167" y="101" width="1" height="8" fill="#f2f2f2"/>
<rect x="166" y="101" width="3" height="8" fill="#f6f6f6"/>
<rect x="170" y="98" width="1" height="5" fill="#f2f2f2"/>
<rect x="169" y="98" width="3" height="4" fill="#f6f6f6"/>
<rect x="174" y="101" width="1" height="9" fill="#f2f2f2"/>
<rect x="173.5" y="102.5" width="2" height="1" fill="#14148c" stroke="#e8ecff" stroke-width="1"/>
<rect x="178" y="103" width="1" height="6" fill="#f2f2f2"/>
<rect x="177.5" y="103.5" width="2" height="4" fill="#14148c" stroke="#e8ecff" stroke-width="1"/>
<rect x="181" y="105" width="1" height="6" fill="#f2f2f2"/>
<rect x="180.5" y="105.5" width="2" height="4" fill="#14148c" stroke="#e8ecff" stroke-width="1"/>
<rect x="185" y="103" width="1" height="12" fill="#f2f2f2"/>
<rect x="184" y="103" width="3" height="9" fill="#f6f6f6"/>
<rect x="189" y="109" width="1" height="11" fill="#f2f2f2"/>
<rect x="188" y="109" width="3" height="8" fill="#f6f6f6"/>
<rect x="192" y="118" width="1" height="8" fill="#f2f2f2"/>
<rect x="191" y="121" width="3" height="2" fill="#f6f6f6"/>
<rect x="196" y="121" width="1" height="10" fill="#f2f2f2"/>
<rect x="195.5" y="122.5" width="2" height="7" fill="#14148c" stroke="#e8ecff" stroke-width="1"/>
<rect x="200" y="127" width="1" height="7" fill="#f2f2f2"/>
<rect x="199" y="129" width="3" height="4" fill="#f6f6f6"/>
<rect x="203" y="124" width="1" height="7" fill="#f2f2f2"/>
<rect x="202" y="125" width="3" height="6" fill="#f6f6f6"/>
<rect x="207" y="131" width="1" height="6" fill="#f2f2f2"/>
<rect x="206.5" y="131.5" width="2" height="4" fill="#14148c" stroke="#e8ecff" stroke-width="1"/>
<rect x="210" y="135" width="1" height="4" fill="#f2f2f2"/>
<rect x="209" y="135" width="3" height="3" fill="#f6f6f6"/>
<rect x="214" y="125" width="1" height="8" fill="#f2f2f2"/>
<rect x="213" y="128" width="3" height="3" fill="#f6f6f6"/>
<rect x="218" y="124" width="1" height="3" fill="#f2f2f2"/>
<rect x="217" y="125" width="3" height="2" fill="#f6f6f6"/>
<rect x="221" y="124" width="1" height="8" fill="#f2f2f2"/>
<rect x="220.5" y="124.5" width="2" height="4" fill="#14148c" stroke="#e8ecff" stroke-width="1"/>
<rect x="225" y="138" width="1" height="6" fill="#f2f2f2"/>
<rect x="224.5" y="138.5" width="2" height="5" fill="#14148c" stroke="#e8ecff" stroke-width="1"/>
<rect x="229" y="143" width="1" height="8" fill="#f2f2f2"/>
<rect x="228.5" y="145.5" width="2" height="3" fill="#14148c" stroke="#e8ecff" stroke-width="1"/>
<rect x="232" y="149" width="1" height="4" fill="#f2f2f2"/>
<rect x="231" y="149" width="3" height="4" fill="#f6f6f6"/>
<rect x="236" y="141" width="1" height="8" fill="#f2f2f2"/>
<rect x="235.5" y="145.5" width="2" height="2" fill="#14148c" stroke="#e8ecff" stroke-width="1"/>
<rect x="240" y="141" width="1" height="3" fill="#f2f2f2"/>
<rect x="239" y="142" width="3" height="2" fill="#f6f6f6"/>
<rect x="243" y="141" width="1" height="5" fill="#f2f2f2"/>
<rect x="242.5" y="142.5" width="2" height="2" fill="#14148c" stroke="#e8ecff" stroke-width="1"/>
<rect x="247" y="142" width="1" height="3" fill="#f2f2f2"/>
<rect x="246" y="144" width="3" height="2" fill="#f6f6f6"/>
<rect x="251" y="130" width="1" height="8" fill="#f2f2f2"/>
<rect x="250" y="131" width="3" height="7" fill="#f6f6f6"/>
<rect x="254" y="128" width="1" height="10" fill="#f2f2f2"/>
<rect x="253" y="130" width="3" height="2" fill="#f6f6f6"/>
<rect x="258" y="129" width="1" height="12" fill="#f2f2f2"/>
<rect x="257.5" y="130.5" width="2" height="10" fill="#14148c" stroke="#e8ecff" stroke-width="1"/>
<rect x="262" y="122" width="1" height="10" fill="#f2f2f2"/>
<rect x="261" y="126" width="3" height="5" fill="#f6f6f6"/>
<rect x="265" y="125" width="1" height="10" fill="#f2f2f2"/>
<rect x="264" y="129" width="3" height="3" fill="#f6f6f6"/>
<rect x="269" y="131" width="1" height="9" fill="#f2f2f2"/>
<rect x="268" y="136" width="3" height="2" fill="#f6f6f6"/>
<rect x="273" y="134" width="1" height="8" fill="#f2f2f2"/>
<rect x="272" y="135" width="3" height="7" fill="#f6f6f6"/>
<rect x="276" y="139" width="1" height="6" fill="#f2f2f2"/>
<rect x="275" y="140" width="3" height="2" fill="#f6f6f6"/>
<rect x="280" y="137" width="1" height="3" fill="#f2f2f2"/>
<rect x="279" y="137" width="3" height="2" fill="#f6f6f6"/>
<rect x="284" y="134" width="1" height="4" fill="#f2f2f2"/>
<rect x="283" y="135" width="3" height="2" fill="#f6f6f6"/>
<rect x="287" y="132" width="1" height="5" fill="#f2f2f2"/>
<rect x="286" y="133" width="3" height="3" fill="#f6f6f6"/>
<rect x="291" y="133" width="1" height="7" fill="#f2f2f2"/>
<rect x="290.5" y="134.5" width="2" height="4" fill="#14148c" stroke="#e8ecff" stroke-width="1"/>
<rect x="294" y="127" width="1" height="7" fill="#f2f2f2"/>
<rect x="293" y="128" width="3" height="6" fill="#f6f6f6"/>
<rect x="298" y="116" width="1" height="5" fill="#f2f2f2"/>
<rect x="297" y="117" width="3" height="3" fill="#f6f6f6"/>
<rect x="302" y="117" width="1" height="3" fill="#f2f2f2"/>
<rect x="301" y="118" width="3" height="2" fill="#f6f6f6"/>
<rect x="305" y="118" width="1" height="3" fill="#f2f2f2"/>
<rect x="304" y="119" width="3" height="2" fill="#f6f6f6"/>
<rect x="309" y="113" width="1" height="7" fill="#f2f2f2"/>
<rect x="308" y="114" width="3" height="2" fill="#f6f6f6"/>
<rect x="313" y="108" width="1" height="7" fill="#f2f2f2"/>
<rect x="312" y="108" width="3" height="2" fill="#f6f6f6"/>
<rect x="316" y="105" width="1" height="10" fill="#f2f2f2"/>
<rect x="315.5" y="106.5" width="2" height="3" fill="#14148c" stroke="#e8ecff" stroke-width="1"/>
<rect x="320" y="106" width="1" height="6" fill="#f2f2f2"/>
<rect x="319" y="110" width="3" height="2" fill="#f6f6f6"/>
<rect x="324" y="104" width="1" height="4" fill="#f2f2f2"/>
<rect x="323" y="104" width="3" height="4" fill="#f6f6f6"/>
<rect x="327" y="104" width="1" height="6" fill="#f2f2f2"/>
<rect x="326.5" y="104.5" width="2" height="5" fill="#14148c" stroke="#e8ecff" stroke-width="1"/>
<rect x="331" y="105" width="1" height="3" fill="#f2f2f2"/>
<rect x="330" y="105" width="3" height="3" fill="#f6f6f6"/>
<rect x="335" y="106" width="1" height="3" fill="#f2f2f2"/>
<rect x="334" y="107" width="3" height="2" fill="#f6f6f6"/>
<rect x="338" y="101" width="1" height="7" fill="#f2f2f2"/>
<rect x="337" y="105" width="3" height="2" fill="#f6f6f6"/>
<rect x="342" y="102" width="1" height="5" fill="#f2f2f2"/>
<rect x="341" y="104" width="3" height="2" fill="#f6f6f6"/>
<rect x="346" y="97" width="1" height="6" fill="#f2f2f2"/>
<rect x="345" y="97" width="3" height="5" fill="#f6f6f6"/>
<rect x="349" y="96" width="1" height="6" fill="#f2f2f2"/>
<rect x="348" y="97" width="3" height="5" fill="#f6f6f6"/>
<rect x="353" y="91" width="1" height="7" fill="#f2f2f2"/>
<rect x="352" y="92" width="3" height="5" fill="#f6f6f6"/>
<rect x="356" y="90" width="1" height="3" fill="#f2f2f2"/>
<rect x="355.5" y="90.5" width="2" height="2" fill="#14148c" stroke="#e8ecff" stroke-width="1"/>
<rect x="360" y="84" width="1" height="5" fill="#f2f2f2"/>
<rect x="359" y="85" width="3" height="4" fill="#f6f6f6"/>
<rect x="364" y="81" width="1" height="5" fill="#f2f2f2"/>
<rect x="363" y="82" width="3" height="2" fill="#f6f6f6"/>
<rect x="367" y="77" width="1" height="6" fill="#f2f2f2"/>
<rect x="366.5" y="79.5" width="2" height="1" fill="#14148c" stroke="#e8ecff" stroke-width="1"/>
<rect x="371" y="79" width="1" height="5" fill="#f2f2f2"/>
<rect x="370.5" y="80.5" width="2" height="3" fill="#14148c" stroke="#e8ecff" stroke-width="1"/>
<rect x="375" y="80" width="1" height="5" fill="#f2f2f2"/>
<rect x="374" y="81" width="3" height="3" fill="#f6f6f6"/>
<rect x="378" y="86" width="1" height="4" fill="#f2f2f2"/>
<rect x="377" y="88" width="3" height="2" fill="#f6f6f6"/>
<rect x="382" y="87" width="1" height="3" fill="#f2f2f2"/>
<rect x="381" y="88" width="3" height="2" fill="#f6f6f6"/>
<rect x="386" y="80" width="1" height="5" fill="#f2f2f2"/>
<rect x="385" y="82" width="3" height="2" fill="#f6f6f6"/>
<rect x="389" y="87" width="1" height="5" fill="#f2f2f2"/>
<rect x="388.5" y="88.5" width="2" height="1" fill="#14148c" stroke="#e8ecff" stroke-width="1"/>
<rect x="393" y="84" width="1" height="7" fill="#f2f2f2"/>
<rect x="392" y="86" width="3" height="2" fill="#f6f6f6"/>
<rect x="397" y="81" width="1" height="3" fill="#f2f2f2"/>
<rect x="396.5" y="81.5" width="2" height="2" fill="#14148c" stroke="#e8ecff" stroke-width="1"/>
<rect x="400" y="85" width="1" height="8" fill="#f2f2f2"/>
<rect x="399.5" y="86.5" width="2" height="5" fill="#14148c" stroke="#e8ecff" stroke-width="1"/>
<rect x="404" y="98" width="1" height="5" fill="#f2f2f2"/>
<rect x="403" y="100" width="3" height="2" fill="#f6f6f6"/>
<rect x="408" y="99" width="1" height="4" fill="#f2f2f2"/>
<rect x="407.5" y="99.5" width="2" height="2" fill="#14148c" stroke="#e8ecff" stroke-width="1"/>
<rect x="411" y="92" width="1" height="4" fill="#f2f2f2"/>
<rect x="410" y="92" width="3" height="4" fill="#f6f6f6"/>
<rect x="415" y="97" width="1" height="8" fill="#f2f2f2"/>
<rect x="414.5" y="97.5" width="2" height="1" fill="#14148c" stroke="#e8ecff" stroke-width="1"/>
<rect x="419" y="98" width="1" height="5" fill="#f2f2f2"/>
<rect x="418" y="100" width="3" height="2" fill="#f6f6f6"/>
<rect x="422" y="89" width="1" height="7" fill="#f2f2f2"/>
<rect x="421" y="89" width="3" height="6" fill="#f6f6f6"/>
<rect x="426" y="86" width="1" height="6" fill="#f2f2f2"/>
<rect x="425" y="90" width="3" height="2" fill="#f6f6f6"/>
<rect x="430" y="96" width="1" height="6" fill="#f2f2f2"/>
<rect x="429.5" y="96.5" width="2" height="3" fill="#14148c" stroke="#e8ecff" stroke-width="1"/>
<rect x="433" y="92" width="1" height="3" fill="#f2f2f2"/>
<rect x="432" y="94" width="3" height="2" fill="#f6f6f6"/>
<path d="M426 91 H433.6 V94" stroke="#e8e8e8" stroke-width="1" fill="none"/>
</g>
<rect x="2" y="241" width="550" height="25" fill="#3c3c3c"/>
<rect x="2" y="313" width="550" height="25" fill="#3c3c3c"/>
<rect x="2" y="241" width="550" height="1" fill="#5e5e5e"/>
<rect x="2" y="289" width="550" height="1" fill="#5e5e5e"/>
<rect x="2" y="313" width="550" height="1" fill="#5e5e5e"/>
<g clip-path="url(#c2)">
<path d="M2.50 306.40 L6.50 304.70 L9.80 304.20 L14.70 306.40 L21.20 306.70 L28.60 310.50 L34.30 307.50 L40.00 304.70 L43.30 315.40 L47.40 312.40 L52.30 312.10 L57.20 323.50 L60.50 310.50 L65.40 300.70 L68.60 298.20 L71.90 286.00 L78.40 280.20 L83.30 278.60 L88.20 281.00 L91.50 281.00 L98.00 272.10 L102.90 274.50 L107.80 260.60 L116.00 267.20 L119.30 264.70 L127.50 271.20 L132.40 271.20 L138.90 267.20 L142.20 257.40 L148.30 259.00 L153.20 261.40 L158.90 259.00 L163.00 265.50 L169.50 265.50 L174.40 276.10 L179.30 279.40 L182.60 284.30 L185.80 280.20 L192.40 294.10 L199.70 303.10 L203.00 296.60 L209.50 307.20 L214.40 299.80 L223.40 309.60 L231.60 311.30 L236.50 315.40 L239.80 305.60 L244.70 302.30 L251.20 288.40 L254.50 292.50 L257.70 291.70 L261.80 285.10 L267.50 291.70 L271.60 296.60 L275.70 287.60 L282.30 280.20 L287.20 281.00 L290.00 285.10 L293.30 277.80 L298.20 274.50 L304.70 281.90 L309.60 270.40 L314.50 275.30 L319.40 268.00 L323.50 255.70 L327.60 263.10 L330.80 262.30 L336.60 266.30 L343.10 259.00 L348.80 266.30 L352.90 261.40 L358.60 262.30 L361.90 261.40 L366.80 260.60 L371.70 262.30 L376.60 265.50 L381.50 268.00 L385.60 263.90 L389.70 270.40 L393.80 270.40 L397.80 276.10 L403.60 297.40 L410.90 296.60 L418.30 306.40 L423.20 294.10 L426.40 292.50 L429.70 296.60 L433.65 293.30" stroke="#2e8a2a" stroke-width="1.15" fill="none"/>
<path d="M2.50 302.30 L10.60 293.30 L16.30 294.10 L21.20 291.70 L28.60 286.80 L34.30 290.00 L40.00 295.80 L46.60 303.90 L50.70 303.10 L57.20 313.70 L62.10 304.70 L65.40 302.30 L68.60 301.50 L72.70 294.10 L83.30 290.00 L94.80 288.40 L98.00 284.30 L101.30 285.10 L106.20 281.00 L116.00 284.30 L124.20 277.80 L127.50 278.60 L134.00 275.30 L137.30 276.10 L142.20 272.10 L147.00 270.50 L149.90 268.80 L153.20 269.60 L156.40 267.20 L158.90 259.80 L163.00 265.50 L169.50 265.50 L174.40 272.90 L181.80 278.60 L185.00 275.30 L189.10 279.40 L192.40 277.80 L197.30 285.10 L203.00 283.50 L207.90 289.20 L214.40 285.10 L218.50 285.90 L225.10 297.40 L230.00 298.20 L234.10 300.70 L239.80 296.60 L244.70 299.00 L247.90 299.00 L252.80 294.10 L259.40 299.00 L265.90 294.90 L272.50 301.50 L279.00 299.00 L283.90 297.40 L290.00 297.40 L298.20 285.10 L304.70 287.60 L309.60 281.00 L314.50 281.00 L320.20 283.50 L330.80 273.70 L340.70 274.50 L346.40 271.20 L355.40 274.50 L360.30 266.30 L364.30 269.60 L375.00 260.60 L379.10 265.50 L384.80 265.50 L388.90 268.80 L393.80 264.70 L397.00 267.20 L402.70 280.20 L410.90 279.40 L416.60 285.10 L422.40 280.20 L429.70 285.90 L433.65 285.10" stroke="#e2d24a" stroke-width="1.15" fill="none"/>
</g>
<rect x="2" y="360" width="550" height="1" fill="#5a5a5a"/>
<rect x="2" y="380" width="550" height="1" fill="#5a5a5a"/>
<rect x="2" y="400" width="550" height="1" fill="#5a5a5a"/>
<rect x="2" y="440" width="550" height="1" fill="#5a5a5a"/>
<rect x="2" y="460" width="550" height="1" fill="#5a5a5a"/>
<g clip-path="url(#c3)">
<path d="M2.50 427.00 L9.80 431.90 L16.30 435.20 L24.50 437.60 L32.70 440.10 L40.80 443.30 L49.00 448.20 L55.60 452.30 L62.10 455.10 L67.80 455.10 L73.50 451.50 L81.70 440.10 L89.90 430.30 L98.00 422.10 L106.20 413.90 L114.40 409.00 L122.50 399.20 L130.70 391.90 L138.90 386.10 L145.00 382.10 L153.20 377.20 L161.30 373.90 L174.40 371.40 L182.60 373.10 L190.80 378.00 L198.90 387.80 L207.10 397.60 L213.60 405.80 L221.80 413.90 L230.00 423.70 L238.10 433.50 L246.30 438.40 L252.80 440.10 L262.60 437.60 L272.50 434.30 L283.90 432.70 L290.00 430.80 L300.90 423.20 L311.80 411.20 L324.90 401.40 L342.30 393.80 L355.40 387.20 L366.30 380.70 L379.30 375.30 L388.00 376.30 L398.90 379.60 L407.60 386.10 L418.50 394.90 L427.30 399.20 L433.65 403.60" stroke="#dab8b0" stroke-width="1.1" fill="none"/>
<path d="M2.50 436.80 L6.50 440.90 L16.30 440.90 L24.50 442.50 L32.70 443.30 L40.80 449.90 L47.40 454.80 L53.90 457.20 L57.20 462.90 L60.50 464.60 L65.40 460.50 L70.30 449.90 L75.20 435.20 L80.10 423.70 L83.30 416.40 L88.20 413.90 L93.10 411.50 L98.00 405.80 L104.60 401.70 L111.10 399.20 L116.00 397.60 L122.50 390.20 L130.70 378.80 L137.30 375.50 L145.00 372.30 L151.50 370.60 L159.70 368.20 L164.60 369.80 L170.30 367.40 L177.70 371.40 L182.60 376.30 L187.50 379.60 L192.40 389.40 L197.30 400.80 L200.60 407.40 L205.50 413.90 L209.50 422.10 L213.60 424.50 L219.30 425.40 L225.10 430.30 L230.00 438.40 L234.90 445.00 L241.40 447.40 L247.10 449.10 L252.80 441.70 L259.40 435.20 L265.90 430.30 L272.50 431.10 L279.00 431.90 L285.50 428.60 L290.00 429.70 L296.50 418.80 L303.10 410.10 L311.80 401.40 L322.70 392.70 L331.40 388.30 L342.30 388.30 L353.20 381.80 L361.90 375.30 L368.40 369.80 L375.00 369.20 L381.50 374.20 L390.20 379.60 L398.90 386.10 L407.60 399.20 L414.20 402.50 L419.60 409.00 L426.20 405.80 L433.65 410.50" stroke="#a82a24" stroke-width="1.1" fill="none"/>
<rect x="1.95" y="420.5" width="2" height="9.8" fill="#3f82b4"/>
<rect x="5.60" y="420.5" width="2" height="8.1" fill="#3f82b4"/>
<rect x="9.25" y="420.5" width="2" height="9.8" fill="#3f82b4"/>
<rect x="12.90" y="420.5" width="2" height="6.5" fill="#3f82b4"/>
<rect x="16.55" y="420.5" width="2" height="4.9" fill="#3f82b4"/>
<rect x="20.20" y="420.5" width="2" height="4.0" fill="#3f82b4"/>
<rect x="23.85" y="420.5" width="2" height="4.0" fill="#3f82b4"/>
<rect x="27.50" y="420.5" width="2" height="3.2" fill="#3f82b4"/>
<rect x="31.15" y="420.5" width="2" height="3.2" fill="#3f82b4"/>
<rect x="34.80" y="420.5" width="2" height="3.2" fill="#3f82b4"/>
<rect x="38.45" y="420.5" width="2" height="5.7" fill="#3f82b4"/>
<rect x="42.10" y="420.5" width="2" height="6.5" fill="#3f82b4"/>
<rect x="45.75" y="420.5" width="2" height="8.1" fill="#3f82b4"/>
<rect x="49.40" y="420.5" width="2" height="7.3" fill="#3f82b4"/>
<rect x="53.05" y="420.5" width="2" height="8.1" fill="#3f82b4"/>
<rect x="56.70" y="420.5" width="2" height="11.4" fill="#3f82b4"/>
<rect x="60.35" y="420.5" width="2" height="8.9" fill="#3f82b4"/>
<rect x="64.00" y="420.5" width="2" height="3.2" fill="#3f82b4"/>
<rect x="71.30" y="411.5" width="2" height="9.0" fill="#3f82b4"/>
<rect x="74.95" y="405.8" width="2" height="14.7" fill="#3f82b4"/>
<rect x="78.60" y="400.5" width="2" height="20.0" fill="#3f82b4"/>
<rect x="82.25" y="398.9" width="2" height="21.6" fill="#3f82b4"/>
<rect x="85.90" y="400.5" width="2" height="20.0" fill="#3f82b4"/>
<rect x="89.55" y="404.1" width="2" height="16.4" fill="#3f82b4"/>
<rect x="93.20" y="404.1" width="2" height="16.4" fill="#3f82b4"/>
<rect x="96.85" y="405.4" width="2" height="15.1" fill="#3f82b4"/>
<rect x="100.50" y="406.6" width="2" height="13.9" fill="#3f82b4"/>
<rect x="104.15" y="406.6" width="2" height="13.9" fill="#3f82b4"/>
<rect x="107.80" y="408.2" width="2" height="12.3" fill="#3f82b4"/>
<rect x="111.45" y="409.0" width="2" height="11.5" fill="#3f82b4"/>
<rect x="115.10" y="410.7" width="2" height="9.8" fill="#3f82b4"/>
<rect x="118.75" y="409.0" width="2" height="11.5" fill="#3f82b4"/>
<rect x="122.40" y="407.4" width="2" height="13.1" fill="#3f82b4"/>
<rect x="126.05" y="407.4" width="2" height="13.1" fill="#3f82b4"/>
<rect x="129.70" y="406.1" width="2" height="14.4" fill="#3f82b4"/>
<rect x="133.35" y="406.1" width="2" height="14.4" fill="#3f82b4"/>
<rect x="137.00" y="409.0" width="2" height="11.5" fill="#3f82b4"/>
<rect x="140.65" y="409.8" width="2" height="10.7" fill="#3f82b4"/>
<rect x="144.30" y="410.7" width="2" height="9.8" fill="#3f82b4"/>
<rect x="147.95" y="411.5" width="2" height="9.0" fill="#3f82b4"/>
<rect x="151.60" y="413.1" width="2" height="7.4" fill="#3f82b4"/>
<rect x="155.25" y="413.9" width="2" height="6.6" fill="#3f82b4"/>
<rect x="158.90" y="413.6" width="2" height="6.9" fill="#3f82b4"/>
<rect x="162.55" y="416.4" width="2" height="4.1" fill="#3f82b4"/>
<rect x="166.20" y="416.4" width="2" height="4.1" fill="#3f82b4"/>
<rect x="169.85" y="415.6" width="2" height="4.9" fill="#3f82b4"/>
<rect x="173.50" y="418.0" width="2" height="2.5" fill="#3f82b4"/>
<rect x="180.80" y="420.5" width="2" height="3.2" fill="#3f82b4"/>
<rect x="184.45" y="420.5" width="2" height="3.2" fill="#3f82b4"/>
<rect x="188.10" y="420.5" width="2" height="7.3" fill="#3f82b4"/>
<rect x="191.75" y="420.5" width="2" height="11.4" fill="#3f82b4"/>
<rect x="195.40" y="420.5" width="2" height="16.3" fill="#3f82b4"/>
<rect x="199.05" y="420.5" width="2" height="19.6" fill="#3f82b4"/>
<rect x="202.70" y="420.5" width="2" height="19.6" fill="#3f82b4"/>
<rect x="206.35" y="420.5" width="2" height="20.4" fill="#3f82b4"/>
<rect x="210.00" y="420.5" width="2" height="21.2" fill="#3f82b4"/>
<rect x="213.65" y="420.5" width="2" height="16.3" fill="#3f82b4"/>
<rect x="217.30" y="420.5" width="2" height="13.0" fill="#3f82b4"/>
<rect x="220.95" y="420.5" width="2" height="11.4" fill="#3f82b4"/>
<rect x="224.60" y="420.5" width="2" height="14.7" fill="#3f82b4"/>
<rect x="228.25" y="420.5" width="2" height="16.3" fill="#3f82b4"/>
<rect x="231.90" y="420.5" width="2" height="17.1" fill="#3f82b4"/>
<rect x="235.55" y="420.5" width="2" height="15.5" fill="#3f82b4"/>
<rect x="239.20" y="420.5" width="2" height="13.0" fill="#3f82b4"/>
<rect x="242.85" y="420.5" width="2" height="9.8" fill="#3f82b4"/>
<rect x="246.50" y="420.5" width="2" height="8.1" fill="#3f82b4"/>
<rect x="250.15" y="420.5" width="2" height="3.2" fill="#3f82b4"/>
<rect x="257.45" y="419.5" width="2" height="1.0" fill="#3f82b4"/>
<rect x="261.10" y="415.6" width="2" height="4.9" fill="#3f82b4"/>
<rect x="264.75" y="413.6" width="2" height="6.9" fill="#3f82b4"/>
<rect x="268.40" y="415.2" width="2" height="5.3" fill="#3f82b4"/>
<rect x="272.05" y="417.2" width="2" height="3.3" fill="#3f82b4"/>
<rect x="275.70" y="418.8" width="2" height="1.7" fill="#3f82b4"/>
<rect x="279.35" y="418.0" width="2" height="2.5" fill="#3f82b4"/>
<rect x="283.00" y="417.2" width="2" height="3.3" fill="#3f82b4"/>
<rect x="286.65" y="417.2" width="2" height="3.3" fill="#3f82b4"/>
<rect x="290.30" y="417.7" width="2" height="2.8" fill="#3f82b4"/>
<rect x="293.95" y="415.6" width="2" height="4.9" fill="#3f82b4"/>
<rect x="297.60" y="411.2" width="2" height="9.3" fill="#3f82b4"/>
<rect x="301.25" y="409.0" width="2" height="11.5" fill="#3f82b4"/>
<rect x="304.90" y="407.9" width="2" height="12.6" fill="#3f82b4"/>
<rect x="308.55" y="406.8" width="2" height="13.7" fill="#3f82b4"/>
<rect x="312.20" y="405.8" width="2" height="14.7" fill="#3f82b4"/>
<rect x="315.85" y="405.8" width="2" height="14.7" fill="#3f82b4"/>
<rect x="319.50" y="406.8" width="2" height="13.7" fill="#3f82b4"/>
<rect x="323.15" y="406.8" width="2" height="13.7" fill="#3f82b4"/>
<rect x="326.80" y="409.0" width="2" height="11.5" fill="#3f82b4"/>
<rect x="330.45" y="410.1" width="2" height="10.4" fill="#3f82b4"/>
<rect x="334.10" y="411.9" width="2" height="8.6" fill="#3f82b4"/>
<rect x="337.75" y="413.4" width="2" height="7.1" fill="#3f82b4"/>
<rect x="341.40" y="414.5" width="2" height="6.0" fill="#3f82b4"/>
<rect x="345.05" y="414.0" width="2" height="6.5" fill="#3f82b4"/>
<rect x="348.70" y="413.4" width="2" height="7.1" fill="#3f82b4"/>
<rect x="352.35" y="412.7" width="2" height="7.8" fill="#3f82b4"/>
<rect x="356.00" y="412.3" width="2" height="8.2" fill="#3f82b4"/>
<rect x="359.65" y="411.9" width="2" height="8.6" fill="#3f82b4"/>
<rect x="363.30" y="410.8" width="2" height="9.7" fill="#3f82b4"/>
<rect x="366.95" y="410.8" width="2" height="9.7" fill="#3f82b4"/>
<rect x="370.60" y="412.3" width="2" height="8.2" fill="#3f82b4"/>
<rect x="374.25" y="414.0" width="2" height="6.5" fill="#3f82b4"/>
<rect x="377.90" y="417.1" width="2" height="3.4" fill="#3f82b4"/>
<rect x="385.20" y="420.5" width="2" height="0.9" fill="#3f82b4"/>
<rect x="388.85" y="420.5" width="2" height="2.7" fill="#3f82b4"/>
<rect x="392.50" y="420.5" width="2" height="3.8" fill="#3f82b4"/>
<rect x="396.15" y="420.5" width="2" height="4.9" fill="#3f82b4"/>
<rect x="399.80" y="420.5" width="2" height="7.0" fill="#3f82b4"/>
<rect x="403.45" y="420.5" width="2" height="10.3" fill="#3f82b4"/>
<rect x="407.10" y="420.5" width="2" height="13.1" fill="#3f82b4"/>
<rect x="410.75" y="420.5" width="2" height="12.5" fill="#3f82b4"/>
<rect x="414.40" y="420.5" width="2" height="11.4" fill="#3f82b4"/>
<rect x="418.05" y="420.5" width="2" height="12.5" fill="#3f82b4"/>
<rect x="421.70" y="420.5" width="2" height="9.2" fill="#3f82b4"/>
<rect x="425.35" y="420.5" width="2" height="7.0" fill="#3f82b4"/>
<rect x="429.00" y="420.5" width="2" height="7.5" fill="#3f82b4"/>
<rect x="432.65" y="420.5" width="2" height="5.9" fill="#3f82b4"/>
<rect x="2" y="420" width="550" height="1" fill="#56789c"/>
</g>
<rect x="2" y="489" width="550" height="1" fill="#5a5a5a"/>
<rect x="2" y="509" width="550" height="1" fill="#5a5a5a"/>
<rect x="2" y="529" width="550" height="1" fill="#5a5a5a"/>
<rect x="2" y="549" width="550" height="1" fill="#5a5a5a"/>
<rect x="2" y="569" width="550" height="1" fill="#5a5a5a"/>
<rect x="2" y="589" width="550" height="1" fill="#5a5a5a"/>
<g clip-path="url(#c4)">
<path d="M2.40 560.30 L6.00 562.70 L10.80 555.50 L15.60 544.70 L19.20 543.50 L24.00 547.10 L26.40 550.70 L30.00 551.90 L35.90 561.50 L40.70 566.30 L46.70 577.10 L50.30 575.90 L53.90 580.60 L57.50 591.40 L62.30 579.40 L65.90 574.70 L69.50 574.70 L73.10 559.10 L79.10 542.30 L82.70 545.90 L86.30 543.50 L89.90 549.50 L94.70 537.50 L100.60 539.90 L106.60 538.70 L112.60 537.50 L117.40 533.90 L124.60 523.10 L128.20 521.90 L131.80 513.50 L136.60 511.20 L141.40 510.00 L145.00 507.60 L148.60 494.40 L153.40 506.40 L159.40 508.80 L164.20 524.30 L167.80 520.70 L174.90 525.50 L178.50 524.30 L182.10 520.70 L185.70 524.30 L191.70 535.10 L197.70 544.70 L203.70 541.10 L210.90 555.50 L218.00 552.60 L224.10 568.40 L231.80 573.00 L236.30 573.00 L242.40 570.90 L247.00 575.50 L254.60 562.30 L259.20 575.20 L265.30 566.90 L271.40 570.00 L277.50 574.50 L282.10 560.80 L288.20 553.20 L294.30 551.70 L298.90 536.40 L303.40 537.90 L306.50 542.50 L312.60 537.90 L317.20 525.70 L323.30 519.60 L330.90 525.70 L338.50 522.70 L343.10 531.80 L349.20 519.60 L355.30 527.30 L361.40 512.00 L367.50 509.00 L375.10 512.00 L378.20 518.10 L382.70 514.20 L390.40 530.30 L398.00 525.70 L405.60 544.70 L411.70 537.30 L416.30 545.60 L425.40 535.80 L430.00 544.70 L433.65 542.50" stroke="#a02824" stroke-width="1.15" fill="none"/>
</g>
<rect x="2" y="634" width="550" height="1" fill="#5a5a5a"/>
<rect x="2" y="655" width="550" height="1" fill="#5a5a5a"/>
<rect x="2" y="676" width="550" height="1" fill="#5a5a5a"/>
<rect x="2" y="697" width="550" height="1" fill="#5a5a5a"/>
<rect x="2" y="718" width="550" height="1" fill="#5a5a5a"/>
<defs><linearGradient id="vg" x1="0" x2="1" y1="0" y2="0"><stop offset="0" stop-color="#0e1e6a" stop-opacity="0.7"/><stop offset="0.28" stop-color="#2456c0"/><stop offset="0.5" stop-color="#3068d4"/><stop offset="0.72" stop-color="#2456c0"/><stop offset="1" stop-color="#0e1e6a" stop-opacity="0.7"/></linearGradient></defs>
<g clip-path="url(#c5)">
<rect x="1.40" y="660.0" width="3.1" height="58.0" fill="url(#vg)"/>
<rect x="5.05" y="662.2" width="3.1" height="55.8" fill="url(#vg)"/>
<rect x="8.70" y="670.3" width="3.1" height="47.7" fill="url(#vg)"/>
<rect x="12.35" y="664.1" width="3.1" height="53.9" fill="url(#vg)"/>
<rect x="16.00" y="667.7" width="3.1" height="50.3" fill="url(#vg)"/>
<rect x="19.65" y="664.6" width="3.1" height="53.4" fill="url(#vg)"/>
<rect x="23.30" y="666.2" width="3.1" height="51.8" fill="url(#vg)"/>
<rect x="26.95" y="663.3" width="3.1" height="54.7" fill="url(#vg)"/>
<rect x="30.60" y="661.2" width="3.1" height="56.8" fill="url(#vg)"/>
<rect x="34.25" y="650.6" width="3.1" height="67.4" fill="url(#vg)"/>
<rect x="37.90" y="641.7" width="3.1" height="76.3" fill="url(#vg)"/>
<rect x="41.55" y="654.8" width="3.1" height="63.2" fill="url(#vg)"/>
<rect x="45.20" y="663.8" width="3.1" height="54.2" fill="url(#vg)"/>
<rect x="48.85" y="660.0" width="3.1" height="58.0" fill="url(#vg)"/>
<rect x="52.50" y="660.0" width="3.1" height="58.0" fill="url(#vg)"/>
<rect x="56.15" y="650.6" width="3.1" height="67.4" fill="url(#vg)"/>
<rect x="59.80" y="644.5" width="3.1" height="73.5" fill="url(#vg)"/>
<rect x="63.45" y="635.8" width="3.1" height="82.2" fill="url(#vg)"/>
<rect x="67.10" y="653.5" width="3.1" height="64.5" fill="url(#vg)"/>
<rect x="70.75" y="644.2" width="3.1" height="73.8" fill="url(#vg)"/>
<rect x="74.40" y="649.1" width="3.1" height="68.9" fill="url(#vg)"/>
<rect x="78.05" y="654.8" width="3.1" height="63.2" fill="url(#vg)"/>
<rect x="81.70" y="658.1" width="3.1" height="59.9" fill="url(#vg)"/>
<rect x="85.35" y="660.5" width="3.1" height="57.5" fill="url(#vg)"/>
<rect x="89.00" y="656.0" width="3.1" height="62.0" fill="url(#vg)"/>
<rect x="92.65" y="636.3" width="3.1" height="81.7" fill="url(#vg)"/>
<rect x="96.30" y="658.1" width="3.1" height="59.9" fill="url(#vg)"/>
<rect x="99.95" y="658.1" width="3.1" height="59.9" fill="url(#vg)"/>
<rect x="103.60" y="636.8" width="3.1" height="81.2" fill="url(#vg)"/>
<rect x="107.25" y="661.7" width="3.1" height="56.3" fill="url(#vg)"/>
<rect x="110.90" y="660.8" width="3.1" height="57.2" fill="url(#vg)"/>
<rect x="114.55" y="672.0" width="3.1" height="46.0" fill="url(#vg)"/>
<rect x="118.20" y="653.0" width="3.1" height="65.0" fill="url(#vg)"/>
<rect x="121.85" y="660.0" width="3.1" height="58.0" fill="url(#vg)"/>
<rect x="125.50" y="681.3" width="3.1" height="36.7" fill="url(#vg)"/>
<rect x="129.15" y="675.2" width="3.1" height="42.8" fill="url(#vg)"/>
<rect x="132.80" y="671.5" width="3.1" height="46.5" fill="url(#vg)"/>
<rect x="136.45" y="667.4" width="3.1" height="50.6" fill="url(#vg)"/>
<rect x="140.10" y="679.6" width="3.1" height="38.4" fill="url(#vg)"/>
<rect x="143.75" y="655.1" width="3.1" height="62.9" fill="url(#vg)"/>
<rect x="147.40" y="650.2" width="3.1" height="67.8" fill="url(#vg)"/>
<rect x="151.05" y="648.3" width="3.1" height="69.7" fill="url(#vg)"/>
<rect x="154.70" y="639.6" width="3.1" height="78.4" fill="url(#vg)"/>
<rect x="158.35" y="642.9" width="3.1" height="75.1" fill="url(#vg)"/>
<rect x="162.00" y="624.1" width="3.1" height="93.9" fill="url(#vg)"/>
<rect x="165.65" y="621.6" width="3.1" height="96.4" fill="url(#vg)"/>
<rect x="169.30" y="625.2" width="3.1" height="92.8" fill="url(#vg)"/>
<rect x="172.95" y="647.0" width="3.1" height="71.0" fill="url(#vg)"/>
<rect x="176.60" y="649.9" width="3.1" height="68.1" fill="url(#vg)"/>
<rect x="180.25" y="645.3" width="3.1" height="72.7" fill="url(#vg)"/>
<rect x="183.90" y="639.6" width="3.1" height="78.4" fill="url(#vg)"/>
<rect x="187.55" y="632.3" width="3.1" height="85.7" fill="url(#vg)"/>
<rect x="191.20" y="661.2" width="3.1" height="56.8" fill="url(#vg)"/>
<rect x="194.85" y="647.0" width="3.1" height="71.0" fill="url(#vg)"/>
<rect x="198.50" y="661.2" width="3.1" height="56.8" fill="url(#vg)"/>
<rect x="202.15" y="647.5" width="3.1" height="70.5" fill="url(#vg)"/>
<rect x="205.80" y="650.6" width="3.1" height="67.4" fill="url(#vg)"/>
<rect x="209.45" y="653.8" width="3.1" height="64.2" fill="url(#vg)"/>
<rect x="213.10" y="662.2" width="3.1" height="55.8" fill="url(#vg)"/>
<rect x="216.75" y="656.8" width="3.1" height="61.2" fill="url(#vg)"/>
<rect x="220.40" y="653.0" width="3.1" height="65.0" fill="url(#vg)"/>
<rect x="224.05" y="649.9" width="3.1" height="68.1" fill="url(#vg)"/>
<rect x="227.70" y="658.4" width="3.1" height="59.6" fill="url(#vg)"/>
<rect x="231.35" y="656.0" width="3.1" height="62.0" fill="url(#vg)"/>
<rect x="235.00" y="660.5" width="3.1" height="57.5" fill="url(#vg)"/>
<rect x="238.65" y="656.3" width="3.1" height="61.7" fill="url(#vg)"/>
<rect x="242.30" y="668.2" width="3.1" height="49.8" fill="url(#vg)"/>
<rect x="245.95" y="676.4" width="3.1" height="41.6" fill="url(#vg)"/>
<rect x="249.60" y="665.8" width="3.1" height="52.2" fill="url(#vg)"/>
<rect x="253.25" y="668.7" width="3.1" height="49.3" fill="url(#vg)"/>
<rect x="256.90" y="663.3" width="3.1" height="54.7" fill="url(#vg)"/>
<rect x="260.55" y="670.3" width="3.1" height="47.7" fill="url(#vg)"/>
<rect x="264.20" y="667.4" width="3.1" height="50.6" fill="url(#vg)"/>
<rect x="267.85" y="666.2" width="3.1" height="51.8" fill="url(#vg)"/>
<rect x="271.50" y="664.1" width="3.1" height="53.9" fill="url(#vg)"/>
<rect x="275.15" y="671.1" width="3.1" height="46.9" fill="url(#vg)"/>
<rect x="278.80" y="673.9" width="3.1" height="44.1" fill="url(#vg)"/>
<rect x="282.45" y="673.9" width="3.1" height="44.1" fill="url(#vg)"/>
<rect x="286.10" y="668.7" width="3.1" height="49.3" fill="url(#vg)"/>
<rect x="289.75" y="666.6" width="3.1" height="51.4" fill="url(#vg)"/>
<rect x="293.40" y="666.1" width="3.1" height="51.9" fill="url(#vg)"/>
<rect x="297.05" y="661.7" width="3.1" height="56.3" fill="url(#vg)"/>
<rect x="300.70" y="669.8" width="3.1" height="48.2" fill="url(#vg)"/>
<rect x="304.35" y="669.8" width="3.1" height="48.2" fill="url(#vg)"/>
<rect x="308.00" y="663.3" width="3.1" height="54.7" fill="url(#vg)"/>
<rect x="311.65" y="638.0" width="3.1" height="80.0" fill="url(#vg)"/>
<rect x="315.30" y="660.8" width="3.1" height="57.2" fill="url(#vg)"/>
<rect x="318.95" y="667.9" width="3.1" height="50.1" fill="url(#vg)"/>
<rect x="322.60" y="658.7" width="3.1" height="59.3" fill="url(#vg)"/>
<rect x="326.25" y="659.7" width="3.1" height="58.3" fill="url(#vg)"/>
<rect x="329.90" y="665.8" width="3.1" height="52.2" fill="url(#vg)"/>
<rect x="333.55" y="666.9" width="3.1" height="51.1" fill="url(#vg)"/>
<rect x="337.20" y="661.7" width="3.1" height="56.3" fill="url(#vg)"/>
<rect x="340.85" y="661.2" width="3.1" height="56.8" fill="url(#vg)"/>
<rect x="344.50" y="653.8" width="3.1" height="64.2" fill="url(#vg)"/>
<rect x="348.15" y="658.7" width="3.1" height="59.3" fill="url(#vg)"/>
<rect x="351.80" y="651.9" width="3.1" height="66.1" fill="url(#vg)"/>
<rect x="355.45" y="657.1" width="3.1" height="60.9" fill="url(#vg)"/>
<rect x="359.10" y="647.5" width="3.1" height="70.5" fill="url(#vg)"/>
<rect x="362.75" y="655.1" width="3.1" height="62.9" fill="url(#vg)"/>
<rect x="366.40" y="663.0" width="3.1" height="55.0" fill="url(#vg)"/>
<rect x="370.05" y="655.5" width="3.1" height="62.5" fill="url(#vg)"/>
<rect x="373.70" y="646.5" width="3.1" height="71.5" fill="url(#vg)"/>
<rect x="377.35" y="655.1" width="3.1" height="62.9" fill="url(#vg)"/>
<rect x="381.00" y="651.0" width="3.1" height="67.0" fill="url(#vg)"/>
<rect x="384.65" y="653.2" width="3.1" height="64.8" fill="url(#vg)"/>
<rect x="388.30" y="647.0" width="3.1" height="71.0" fill="url(#vg)"/>
<rect x="391.95" y="648.1" width="3.1" height="69.9" fill="url(#vg)"/>
<rect x="395.60" y="647.0" width="3.1" height="71.0" fill="url(#vg)"/>
<rect x="399.25" y="651.9" width="3.1" height="66.1" fill="url(#vg)"/>
<rect x="402.90" y="657.6" width="3.1" height="60.4" fill="url(#vg)"/>
<rect x="406.55" y="659.7" width="3.1" height="58.3" fill="url(#vg)"/>
<rect x="410.20" y="651.0" width="3.1" height="67.0" fill="url(#vg)"/>
<rect x="413.85" y="653.2" width="3.1" height="64.8" fill="url(#vg)"/>
<rect x="417.50" y="658.4" width="3.1" height="59.6" fill="url(#vg)"/>
<rect x="421.15" y="655.6" width="3.1" height="62.4" fill="url(#vg)"/>
<rect x="424.80" y="652.2" width="3.1" height="65.8" fill="url(#vg)"/>
<rect x="428.45" y="644.0" width="3.1" height="74.0" fill="url(#vg)"/>
<rect x="432.10" y="651.0" width="3.1" height="67.0" fill="url(#vg)"/>
</g>
<rect x="2" y="225" width="795" height="2" fill="#ffffff"/>
<rect x="2" y="352" width="550" height="1" fill="#ffffff"/>
<rect x="2" y="479" width="550" height="1" fill="#ffffff"/>
<rect x="2" y="606" width="550" height="1" fill="#ffffff"/>
<text x="549.0" y="48.0" font-size="10.5" fill="#fff" text-anchor="end" >12000.00</text>
<text x="549.0" y="87.0" font-size="10.5" fill="#fff" text-anchor="end" >11200.00</text>
<text x="549.0" y="125.5" font-size="10.5" fill="#fff" text-anchor="end" >10400.00</text>
<text x="549.0" y="164.5" font-size="10.5" fill="#fff" text-anchor="end" >9600.00</text>
<text x="549.0" y="205.0" font-size="10.5" fill="#fff" text-anchor="end" >8800.00</text>
<text x="65.0" y="223.0" font-size="11.0" fill="#fff" text-anchor="middle" >12月</text>
<text x="141.0" y="223.0" font-size="11.0" fill="#fff" text-anchor="middle" >1</text>
<text x="210.0" y="223.0" font-size="11.0" fill="#fff" text-anchor="middle" >2</text>
<text x="280.0" y="223.0" font-size="11.0" fill="#fff" text-anchor="middle" >3</text>
<text x="360.0" y="223.0" font-size="11.0" fill="#fff" text-anchor="middle" >4</text>
<text x="7.0" y="40.0" font-size="10.0" fill="#fff" text-anchor="start" >ボリンジャーバンド , エンベロープ</text>
<text x="556.0" y="40.0" font-size="10.0" fill="#fff" text-anchor="start" >価格帯出来高(100)</text>
<text x="553.0" y="222.0" font-size="11.0" fill="#fff" text-anchor="start" >(十億株)</text>
<text x="620.0" y="222.0" font-size="10.5" fill="#fff" text-anchor="start" >9</text>
<text x="688.0" y="222.0" font-size="10.5" fill="#fff" text-anchor="start" >18</text>
<text x="757.0" y="222.0" font-size="10.5" fill="#fff" text-anchor="start" >27</text>
<text x="170.0" y="83.0" font-size="10.5" fill="#fff" text-anchor="start" >01/15</text>
<text x="170.0" y="98.0" font-size="10.5" fill="#fff" text-anchor="start" >10982.10</text>
<text x="232.0" y="166.5" font-size="10.5" fill="#fff" text-anchor="start" >02/09</text>
<text x="232.0" y="182.0" font-size="10.5" fill="#fff" text-anchor="start" >9867.39</text>
<text x="57.0" y="206.0" font-size="10.5" fill="#fff" text-anchor="start" >11/27 9076.41</text>
<text x="367.0" y="62.0" font-size="10.5" fill="#fff" text-anchor="start" >04/05</text>
<text x="367.0" y="77.5" font-size="10.5" fill="#fff" text-anchor="start" >11408.17</text>
<text x="442.0" y="82.0" font-size="10.5" fill="#fff" text-anchor="start" >11057.40</text>
<text x="448.0" y="97.0" font-size="10.5" fill="#fff" text-anchor="start" >+132.61</text>
<text x="486.5" y="112.0" font-size="10.5" fill="#fff" text-anchor="end" >0</text>
<text x="418.0" y="118.0" font-size="10.5" fill="#fff" text-anchor="start" >04/23</text>
<text x="418.0" y="132.5" font-size="10.5" fill="#fff" text-anchor="start" >10865.92</text>
<path d="M437 93.2 L442 90 V96.4 Z" fill="#ffffff"/>
<text x="7.0" y="241.0" font-size="10.0" fill="#fff" text-anchor="start" >RSI</text>
<text x="549.0" y="240.5" font-size="10.5" fill="#fff" text-anchor="end" >100</text>
<text x="549.0" y="265.5" font-size="10.5" fill="#fff" text-anchor="end" >75</text>
<text x="549.0" y="289.0" font-size="10.5" fill="#fff" text-anchor="end" >50</text>
<text x="549.0" y="313.0" font-size="10.5" fill="#fff" text-anchor="end" >25</text>
<text x="549.0" y="337.5" font-size="10.5" fill="#fff" text-anchor="end" >0</text>
<path d="M442 292.5 L446.5 289.5 V295.5 Z" fill="#3a9a3a"/>
<text x="451.0" y="296.0" font-size="10.5" fill="#3a9a3a" text-anchor="start" >45.70</text>
<text x="7.0" y="368.0" font-size="10.0" fill="#fff" text-anchor="start" >MACD</text>
<g clip-path="url(#c3)">
<text x="549.0" y="360.0" font-size="10.5" fill="#fff" text-anchor="end" >270.00</text>
<text x="549.0" y="380.0" font-size="10.5" fill="#fff" text-anchor="end" >180.00</text>
<text x="549.0" y="400.0" font-size="10.5" fill="#fff" text-anchor="end" >90.00</text>
<text x="549.0" y="420.0" font-size="10.5" fill="#fff" text-anchor="end" >0.00</text>
<text x="549.0" y="440.0" font-size="10.5" fill="#fff" text-anchor="end" >-90.00</text>
<text x="549.0" y="460.0" font-size="10.5" fill="#fff" text-anchor="end" >-180.00</text>
<text x="549.0" y="479.0" font-size="10.5" fill="#fff" text-anchor="end" >-270.00</text>
</g>
<path d="M442 402 L447 399 V405 Z" fill="#d0c0c0"/>
<text x="451.0" y="406.0" font-size="10.5" fill="#d8c8c8" text-anchor="start" >76.75</text>
<text x="7.0" y="495.0" font-size="10.0" fill="#fff" text-anchor="start" >モメンタム</text>
<g clip-path="url(#c4)">
<text x="549.0" y="489.0" font-size="10.5" fill="#fff" text-anchor="end" >1800.00</text>
<text x="549.0" y="509.0" font-size="10.5" fill="#fff" text-anchor="end" >1200.00</text>
<text x="549.0" y="529.0" font-size="10.5" fill="#fff" text-anchor="end" >600.00</text>
<text x="549.0" y="549.0" font-size="10.5" fill="#fff" text-anchor="end" >0.00</text>
<text x="549.0" y="569.0" font-size="10.5" fill="#fff" text-anchor="end" >-600.00</text>
<text x="549.0" y="589.0" font-size="10.5" fill="#fff" text-anchor="end" >-1200.00</text>
<text x="549.0" y="609.0" font-size="10.5" fill="#fff" text-anchor="end" >-1800.00</text>
</g>
<path d="M442 541 L447 538 V544 Z" fill="#c03030"/>
<text x="451.0" y="546.0" font-size="10.5" fill="#c83a32" text-anchor="start" >228.55</text>
<text x="7.0" y="620.0" font-size="10.0" fill="#fff" text-anchor="start" >出来高</text>
<text x="549.0" y="634.0" font-size="10.5" fill="#fff" text-anchor="end" >28.0</text>
<text x="549.0" y="655.0" font-size="10.5" fill="#fff" text-anchor="end" >21.0</text>
<text x="549.0" y="676.0" font-size="10.5" fill="#fff" text-anchor="end" >14.0</text>
<text x="549.0" y="697.0" font-size="10.5" fill="#fff" text-anchor="end" >7.0</text>
<text x="549.0" y="718.0" font-size="10.5" fill="#fff" text-anchor="end" >億株</text>
</svg>
<!-- scrollbar -->
<div class="a" style="left:3px;top:734px;width:792px;height:12px;background:#ededed;border-bottom:1px solid #9a9a9a"></div>
<div class="a" style="left:3px;top:734px;width:15px;height:12px;background:#f1f1f1;border-left:1px solid #a0a0a0;border-right:1px solid #c0c0c0;border-bottom:1px solid #8a8a8a"></div>
<svg class="a" style="left:3px;top:734px" width="15" height="12"><path d="M5.5 5.8 L9.5 2.5 V9.5 Z" fill="#222"/></svg>
<div class="a" style="left:760px;top:734px;width:19px;height:12px;background:linear-gradient(#f6f9fd,#d2e0f2);border:1px solid #8aa6d2;border-radius:1px"></div>
<svg class="a" style="left:760px;top:734px" width="19" height="12"><rect x="7" y="3.5" width="1" height="5.5" fill="#333"/><rect x="9" y="3.5" width="1" height="5.5" fill="#333"/><rect x="11" y="3.5" width="1" height="5.5" fill="#333"/></svg>
<div class="a" style="left:780px;top:734px;width:15px;height:12px;background:#f1f1f1;border-left:1px solid #c0c0c0;border-right:1px solid #a0a0a0;border-bottom:1px solid #8a8a8a"></div>
<svg class="a" style="left:780px;top:734px" width="15" height="12"><path d="M9.5 5.8 L5.5 2.5 V9.5 Z" fill="#222"/></svg>
<!-- slider -->
<div class="a" style="left:3px;top:748px;width:793px;height:12px;background:#363636"></div>
<div class="a" style="left:10px;top:751px;width:262px;height:6px;border-radius:2px 0 0 2px;background:linear-gradient(#f4f7fb,#b8c8e0 60%,#7f90ae)"></div>
<div class="a" style="left:272px;top:751px;width:516px;height:6px;border:1px solid #a8acb4;background:#3c4048"></div>
<svg class="a" style="left:262px;top:748px" width="17" height="13"><path d="M1.5 0.5 H15.5 V7 L8.5 12.5 L1.5 7 Z" fill="#eef3fa" stroke="#b8c6da" stroke-width="1"/></svg>
<div class="a" style="left:3px;top:761px;width:794px;height:15px;background:#000"></div>
<svg class="a" style="left:0;top:761px" width="800" height="15" font-family="Liberation Sans, sans-serif">
<text x="55" y="12" font-size="11" fill="#fff">2年</text>
<text x="253" y="12" font-size="11" fill="#fff">半年</text>
<text x="351" y="12" font-size="11" fill="#fff">3ヶ月</text>
</svg>
<div class="a" style="left:801px;top:0;width:115px;height:779px;background:#4a4a4a"></div>
<div class="a" style="left:916px;top:0;width:2px;height:779px;background:#141414"></div>
<!-- dropdowns -->
<div class="ddt" style="left:802px;top:1px;width:95px;height:18px">日経平均</div>
<div class="ddb" style="left:897px;top:1px;width:19px;height:18px"></div>
<div class="a" style="left:802px;top:19px;width:114px;height:1px;background:#6a7a90"></div>
<div class="ddt" style="left:802px;top:22px;width:51px;height:18px">日足</div>
<div class="ddb" style="left:853px;top:22px;width:20px;height:18px"></div>
<div class="a" style="left:802px;top:40px;width:71px;height:1px;background:#6a7a90"></div>
<!-- icons -->
<div class="ib" style="left:802px;top:44px"></div>
<div class="ib" style="left:830px;top:44px"></div>
<div class="ib" style="left:858px;top:44px"></div>
<div class="ib" style="left:802px;top:71px"></div>
<div class="ib" style="left:830px;top:71px"></div>
<div class="ib" style="left:858px;top:71px"></div>
<svg class="a" style="left:802px;top:44px" width="81" height="52">
<defs><linearGradient id="gear" x1="0" y1="0" x2="0" y2="1"><stop offset="0" stop-color="#fbe060"/><stop offset="1" stop-color="#e08a1a"/></linearGradient>
<linearGradient id="prn" x1="0" y1="0" x2="0" y2="1"><stop offset="0" stop-color="#ffffff"/><stop offset="1" stop-color="#a8a8a8"/></linearGradient></defs>
<path d="M8 18.5 L21.5 5.5" stroke="#78c030" stroke-width="3.6" stroke-linecap="round"/>
<path d="M8.3 18.8 L21.6 5.6" stroke="#a8e060" stroke-width="1"/>
<path d="M5 21.5 L6.6 16.2 L10.4 19.9 Z" fill="#eadc98"/>
<path d="M35.6 10.7 L46.4 5.8 L52.2 10.4 L41.8 15.6 Z" fill="#3a9ad8"/>
<path d="M41.8 15.6 L52.2 10.4 L51.6 15 L41.1 20.9 Z" fill="#1a70c8"/>
<path d="M32 13.4 L35.6 10.7 L41.8 15.6 L41.1 20.9 L32 16.3 Z" fill="#f2f2f2"/>
<path d="M35.6 10.7 L41.8 15.6" stroke="#c8c8c8" stroke-width="0.6"/>
<circle cx="65.6" cy="8.8" r="6" fill="#8a9294" opacity="0.85"/>
<path d="M69.5 14.5 L77.4 22.4" stroke="#b8b8b8" stroke-width="2.5"/>
<path d="M57.3 1.2 L79.6 23.2" stroke="#000" stroke-width="1.4"/>
<g transform="translate(13.7,40)">
<g fill="url(#gear)">
<circle r="7.2"/>
<rect x="-2" y="-9.6" width="4" height="4" rx="1"/>
<rect x="-2" y="5.6" width="4" height="4" rx="1"/>
<rect x="-9.6" y="-2" width="4" height="4" rx="1"/>
<rect x="5.6" y="-2" width="4" height="4" rx="1"/>
<g transform="rotate(45)"><rect x="-2" y="-9.6" width="4" height="4" rx="1"/><rect x="-2" y="5.6" width="4" height="4" rx="1"/><rect x="-9.6" y="-2" width="4" height="4" rx="1"/><rect x="5.6" y="-2" width="4" height="4" rx="1"/></g>
</g>
<circle r="3.3" fill="#3e3e3e"/></g>
<rect x="37.2" y="34.2" width="13.7" height="9.8" fill="#b2b2b2"/>
<rect x="37.2" y="34.2" width="13.7" height="2" fill="#6a8ab4"/>
<rect x="32.6" y="38.1" width="13.1" height="9.8" fill="#a8a8a8" stroke="#3a3a3a" stroke-width="0.6"/>
<rect x="32.6" y="38.1" width="13.1" height="2" fill="#6a8ab4"/>
<path d="M30.7 29 L51.6 50.5" stroke="#000" stroke-width="1.4"/>
<rect x="67" y="31" width="5.4" height="3.5" fill="#f4f4f4"/>
<rect x="62" y="34.5" width="15" height="6.6" rx="2" fill="url(#prn)"/>
<rect x="63.4" y="36.2" width="11.2" height="1.6" fill="#111"/>
<rect x="66.3" y="41.1" width="6.1" height="4.7" fill="#e0e0e0"/>
<rect x="67.3" y="42.5" width="4" height="1.5" fill="#444"/>
</svg>
<div class="row" style="top:101px">09/10/16～<span class="v">10/04/30</span></div>
<div class="row" style="top:117px">日付<span class="v" style="color:#f2f0ec">10/04/30</span></div>
<div class="row" style="top:133px">始値<span class="v" style="color:#f2f0ec">11062.12</span></div>
<div class="row" style="top:149px">高値<span class="v" style="color:#f2f0ec">11092.52</span></div>
<div class="row" style="top:165px">安値<span class="v" style="color:#f2f0ec">11035.27</span></div>
<div class="row" style="top:181px">現値<span class="v" style="color:#ffff3a">11057.40</span></div>
<div class="row" style="top:197px">前日比<span class="v" style="color:#f2f0ec">+132.61</span></div>
<div class="row" style="top:213px"><span class="u" style="text-decoration-color:#962222">MA(25,C)</span><span class="v" style="color:#f2f0ec">11124.20</span></div>
<div class="row" style="top:229px"><span class="u" style="text-decoration-color:#2a6a9a">MA(75,C)</span><span class="v" style="color:#f2f0ec">10669.05</span></div>
<div class="row" style="top:245px"><span class="u" style="text-decoration-color:#962222">+2.0σ</span><span class="v" style="color:#f2f0ec">11400.78</span></div>
<div class="row" style="top:261px"><span class="u" style="text-decoration-color:#d8d0d0">MA(25,C)</span><span class="v" style="color:#f2f0ec">11124.20</span></div>
<div class="row" style="top:277px"><span class="u" style="text-decoration-color:#2a8a8a">-2.0σ</span><span class="v" style="color:#f2f0ec">10847.63</span></div>
<div class="row" style="top:293px"><span class="u" style="text-decoration-color:#8a1a1a">MA+6.0%</span><span class="v" style="color:#f2f0ec">11791.66</span></div>
<div class="row" style="top:309px"><span class="u" style="text-decoration-color:#c0a0a0">MA+3.0%</span><span class="v" style="color:#f2f0ec">11457.93</span></div>
<div class="row" style="top:325px"><span class="u" style="text-decoration-color:#d8d0d0">MA(25,C)</span><span class="v" style="color:#f2f0ec">11124.20</span></div>
<div class="row" style="top:341px"><span class="u" style="text-decoration-color:#5a8aa0">MA-3.0%</span><span class="v" style="color:#f2f0ec">10790.48</span></div>
<div class="row" style="top:357px"><span class="u" style="text-decoration-color:#2a8a8a">MA-6.0%</span><span class="v" style="color:#f2f0ec">10456.75</span></div>
<div class="row" style="top:373px"><span class="u" style="text-decoration-color:#2a7e2a">RSI(14)</span><span class="v" style="color:#f2f0ec">45.70</span></div>
<div class="row" style="top:389px"><span class="u" style="text-decoration-color:#d6c84c">RSI(28)</span><span class="v" style="color:#f2f0ec">54.50</span></div>
<div class="row" style="top:405px"><span class="u" style="text-decoration-color:#962222">MACD(12-26,C)</span><span class="v" style="color:#f2f0ec"></span></div>
<div class="row" style="top:421px"><span class="v" style="color:#f2f0ec">43.76</span></div>
<div class="row" style="top:437px"><span class="u" style="text-decoration-color:#c8b0b0">SIG(9)</span><span class="v" style="color:#f2f0ec">76.75</span></div>
<div class="row" style="top:453px"><span class="u" style="text-decoration-color:#3a7ab0">MACDH(1.0)</span><span class="v" style="color:#f2f0ec">-33.00</span></div>
<div class="row" style="top:469px"><span class="u" style="text-decoration-color:#962222">ﾓﾒﾝﾀﾑ(25)</span><span class="v" style="color:#f2f0ec">228.55</span></div>
<div class="row" style="top:485px"><span class="u" style="text-decoration-color:#2a5ab0">出来高</span><span class="v" style="color:#f2f0ec"></span></div>
<div class="row" style="top:501px"><span class="v" style="color:#f2f0ec">2,235,453,680株</span></div>
<div class="row" style="top:517px"><span class="u" style="text-decoration-color:#e8e8e8">価格帯</span><span class="v" style="color:#f2f0ec"></span></div>
<div class="row" style="top:533px"><span class="u" style="text-decoration-color:#e8e8e8">価格帯</span><span class="v" style="color:#f2f0ec"></span></div>
<div class="row" style="top:549px"><span class="u" style="text-decoration-color:#e8e8e8">出来高</span><span class="v" style="color:#f2f0ec"></span></div>
</body></html>
